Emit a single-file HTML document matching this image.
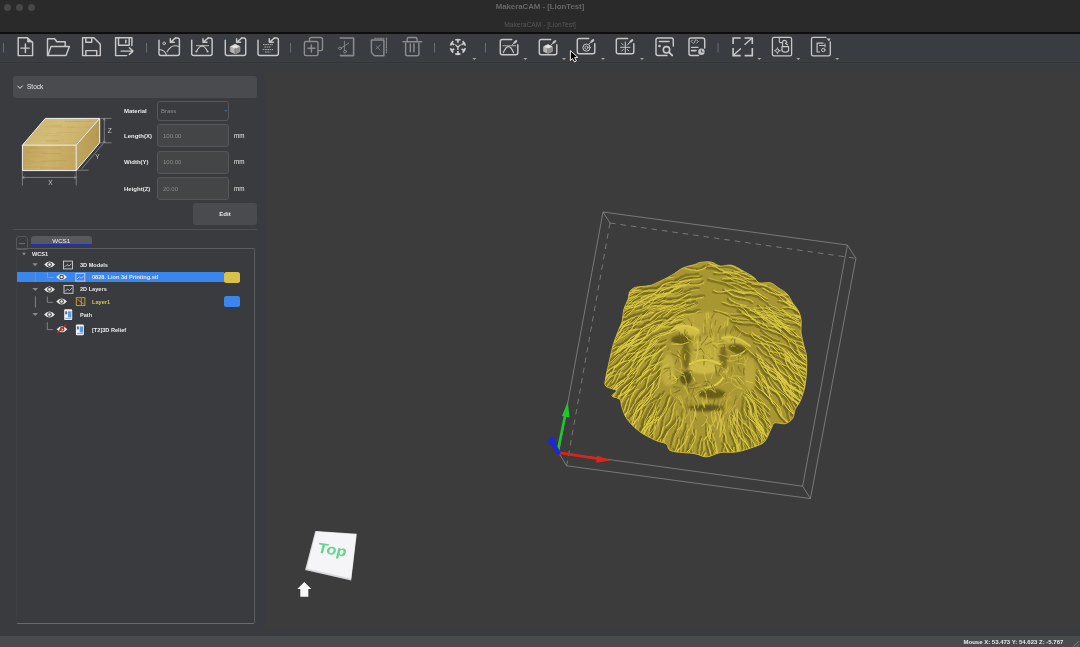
<!DOCTYPE html>
<html><head><meta charset="utf-8">
<style>
*{margin:0;padding:0;box-sizing:border-box}
html,body{width:1080px;height:647px;overflow:hidden;background:#3c3c3c;font-family:"Liberation Sans",sans-serif;-webkit-font-smoothing:antialiased}
.lbl,.val,.tt,.t1,.t2{will-change:transform}
.abs{position:absolute}
#title{left:0;top:0;width:1080px;height:32px;background:#2a2a2a}
#blk{left:0;top:32px;width:1080px;height:2px;background:#0e0e0e}
#tb{left:0;top:34px;width:1080px;height:27px;background:#393c40}
#tbl{left:0;top:61px;width:1080px;height:3px;background:linear-gradient(#3e3f42 0,#3e3f42 1px,#333436 1px,#333436 2px,#3d3e40 2px)}
#left{left:0;top:64px;width:1080px;height:572px;background:#3a3b3e}
#vp{left:265px;top:73px;width:815px;height:555px;background:#3c3c3c}
#status{left:0;top:636px;width:1080px;height:11px;background:#4a4b4f}
.dot{width:7px;height:7px;border-radius:50%;background:#474747;top:4px}
.t1{top:1.5px;left:0;width:1080px;text-align:center;font-size:7.8px;font-weight:bold;color:#676767;line-height:10px}
.t2{top:20.5px;left:0;width:1080px;text-align:center;font-size:6.7px;color:#575757;line-height:8px}
.lbl{font-size:6px;font-weight:bold;color:#e8e8e8;white-space:nowrap;line-height:8px}
.inp{border:1px solid #56575b;border-radius:3px;background:#444547}
.val{font-size:6px;color:#8c8c8c;white-space:nowrap;line-height:8px}
.tt{font-size:5.6px;font-weight:bold;color:#e8e8e8;white-space:nowrap;line-height:8px}
</style></head><body>
<div id="title" class="abs">
  <div class="abs dot" style="left:4px"></div>
  <div class="abs dot" style="left:16px"></div>
  <div class="abs dot" style="left:28px"></div>
  <div class="abs t1">MakeraCAM - [LionTest]</div>
  <div class="abs t2">MakeraCAM - [LionTest]</div>
</div>
<div id="blk" class="abs"></div>
<div id="tb" class="abs"></div>
<div id="tbl" class="abs"></div>
<svg class="abs" style="left:0;top:0" width="1080" height="64" viewBox="0 0 1080 64" fill="none" stroke="#c8c8c8" stroke-width="1.45" stroke-linejoin="round" stroke-linecap="round">
<!-- separators -->
<g stroke="#6a6c70" stroke-width="1">
<line x1="3.5" y1="43.5" x2="3.5" y2="52"/>
<line x1="146.5" y1="43.5" x2="146.5" y2="52"/>
<line x1="290.5" y1="43.5" x2="290.5" y2="52"/>
<line x1="434.5" y1="43.5" x2="434.5" y2="52"/>
<line x1="485.5" y1="43.5" x2="485.5" y2="52"/>
<line x1="718" y1="43.5" x2="718" y2="52"/>
</g>
<!-- new -->
<path d="M18.2,37.8 H27.5 L32.6,42.5 V55.6 H18.2 Z"/>
<path d="M27.5,37.8 V42 H32.6" fill="#c4c4c4" stroke-width="0.8"/>
<path d="M20.9,48.1 H29.3 M25.4,43.9 V52.5"/>
<!-- open -->
<path d="M47.5,55.4 V38.7 H54.6 L56.8,41.7 H65.2 V46"/>
<path d="M47.8,55.4 L51,46.4 H69.4 L66,55.4 Z"/>
<!-- save -->
<path d="M82.6,37.8 H93.9 L100.3,44.2 V55.6 H82.6 Z"/>
<path d="M85.8,37.8 V42.2 H91.7 V37.8"/>
<path d="M85.8,55.6 V50.6 H96.7 V55.6"/>
<!-- save as -->
<path d="M126.7,55.6 H115.6 V37.8 H131.9 V45.6"/>
<path d="M118.5,37.8 V45.3 H129.2 V37.8"/>
<path d="M125.8,40.3 V42.8" stroke-width="1.5"/>
<path d="M121.1,51.1 H133 M129.4,47.8 L133,51.1 L129.4,54.4"/>
<!-- import frames -->
<g id="impf">
<path d="M159,40.2 V53.4 Q159,55.4 161,55.4 H177.4 Q179.4,55.4 179.4,53.4 V40 Q179.4,37.9 177.4,37.9 H175.6"/>
<path d="M175.6,37.9 L170.5,42.2 M170.3,38.7 V42.3 H174.3"/>
</g>
<use href="#impf" x="32.7"/>
<use href="#impf" x="66.3"/>
<use href="#impf" x="99"/>
<!-- image content -->
<circle cx="164.2" cy="43.4" r="1.3" stroke-width="1"/>
<path d="M159.2,49.5 Q165,50 166.5,55.3" stroke-width="1.1"/>
<path d="M167,51.8 Q171,45.5 175,45.8 Q177.5,46 179.3,46.5" stroke-width="1.1"/>
<!-- curve content -->
<path d="M196.4,51.5 Q202,40.5 207.6,51.5" stroke-width="1.1"/>
<path d="M196.4,45.7 H208.6" stroke-width="0.9"/>
<circle cx="196.4" cy="51.5" r="1.1" fill="#c4c4c4" stroke="none"/>
<circle cx="207.6" cy="51.5" r="1.1" fill="#c4c4c4" stroke="none"/>
<circle cx="202.4" cy="45.7" r="0.9" fill="#c4c4c4" stroke="none"/>
<!-- 3d box content -->
<path d="M230.6,46.5 L235.2,44.3 L239.8,46.5 V51.6 L235.2,53.8 L230.6,51.6 Z" fill="#b4b4b4" stroke="#c8c8c8" stroke-width="0.7"/>
<path d="M230.6,46.5 L235.2,44.3 L239.8,46.5 L235.2,48.7 Z" fill="#e2e2e2" stroke="none"/>
<path d="M235.2,48.7 V53.8" stroke="#505154" stroke-width="0.8"/>
<path d="M235.6,48.9 L239.8,46.8 V51.6 L235.6,53.6 Z" fill="#8e8e90" stroke="none"/>
<!-- hatch content -->
<g stroke-width="0.8" stroke-dasharray="1.6 0.7" stroke-linecap="butt" stroke="#d0d0d0">
<path d="M263,44.6 H273 M264.5,47 H270.5 M262.8,49.6 H273 M265,52 H270.5"/>
</g>
<!-- disabled group -->
<g stroke="#8a8b8d">
<path d="M309.5,41.3 V39.3 Q309.5,37.5 311.3,37.5 H320.7 Q322.5,37.5 322.5,39.3 V48.8 Q322.5,50.6 320.7,50.6 H318"/>
<rect x="304.4" y="41.4" width="13.6" height="14.2" rx="1.5"/>
<path d="M308,48.3 H315 M311.4,45 V52"/>
<path d="M340.3,38 H353.6 V55.6 H340.3" stroke-width="1.6"/>
<path d="M344.4,41.2 V50 M341.5,47.8 L348.9,43" stroke-width="0.9"/>
<circle cx="345" cy="51.6" r="1.4" stroke-width="0.9"/>
<ellipse cx="340" cy="48.3" rx="1.6" ry="1.1" stroke-width="0.9"/>
<path d="M371.4,40 H383.9 V55.8 H374.5 L371.4,52.6 Z"/>
<path d="M374.7,38.2 H384 M386.4,38 V52.8" stroke-dasharray="1.6 1.2" stroke-width="1.1"/>
<path d="M376,49 L380.5,45 M376.5,46 L380,50" stroke-width="0.8"/>
<path d="M403,41.7 H421.7"/>
<path d="M407.2,41.7 V39 Q407.2,37.5 408.7,37.5 H415.5 Q417,37.5 417,39 V41.7"/>
<path d="M405.6,43.3 V54 Q405.6,55.8 407.4,55.8 H417.1 Q418.9,55.8 418.9,54 V43.3"/>
<path d="M410.3,44 V51.7 M413.9,44 V51.7"/>
</g>
<!-- transform -->
<g stroke="#cdcdcd" stroke-width="1.7" stroke-linecap="butt">
<path d="M455.25,39.99 A7.4,7.4 0 0 1 460.55,39.99 M457.90,39.50 L457.90,42.70 M462.56,41.15 A7.4,7.4 0 0 1 465.21,45.74 M464.31,43.20 L461.54,44.80 M465.21,48.06 A7.4,7.4 0 0 1 462.56,52.65 M464.31,50.60 L461.54,49.00 M460.55,53.81 A7.4,7.4 0 0 1 455.25,53.81 M457.90,54.30 L457.90,51.10 M453.24,52.65 A7.4,7.4 0 0 1 450.59,48.06 M451.49,50.60 L454.26,49.00 M450.59,45.74 A7.4,7.4 0 0 1 453.24,41.15 M451.49,43.20 L454.26,44.80"/>
<path d="M455.3,44.6 L457.9,47.3 L460.5,44.6 M457.9,47.3 V50" stroke-width="1.3"/>
</g>
<!-- dropdown triangles -->
<g fill="#a8a8a8" stroke="none" transform="translate(0,0)">
<path d="M472.4,57.9 H476.4 L474.4,59.9 Z"/>
<path d="M523.3,57.9 H527.3 L525.3,59.9 Z"/>
<path d="M562.0,57.9 H566.0 L564.0,59.9 Z"/>
<path d="M601.0,57.9 H605.0 L603.0,59.9 Z"/>
<path d="M640.0,57.9 H644.0 L642.0,59.9 Z"/>
<path d="M757.4,57.9 H761.4 L759.4,59.9 Z"/>
<path d="M796.3,57.9 H800.3 L798.3,59.9 Z"/>
<path d="M835.2,57.9 H839.2 L837.2,59.9 Z"/>
</g>
<!-- 2D toolpath -->
<g id="tpf">
<path d="M511.7,39.4 H502.3 Q500.3,39.4 500.3,41.4 V52.7 Q500.3,54.7 502.3,54.7 H515.8 Q517.8,54.7 517.8,52.7 V44.7"/>
<ellipse cx="515.4" cy="41.9" rx="2.3" ry="1.2" transform="rotate(-40 515.4 41.9)" fill="#c4c4c4" stroke="none"/><path d="M512.3,44.8 L513.8,43.4" stroke-width="1"/>
</g>
<path d="M503.3,52.7 Q508.5,40.5 513.6,52.7" stroke-width="1.1"/>
<path d="M503,45.8 H515.8" stroke-width="0.9" stroke-dasharray="1.2 0.8"/>
<use href="#tpf" x="39"/>
<path d="M543.8,46.6 L548,44.6 L552.2,46.6 V51.4 L548,53.4 L543.8,51.4 Z" fill="#b4b4b4" stroke="#c8c8c8" stroke-width="0.7"/>
<path d="M543.8,46.6 L548,44.6 L552.2,46.6 L548,48.6 Z" fill="#e2e2e2" stroke="none"/>
<path d="M548,48.6 V53.4" stroke="#505154" stroke-width="0.8"/>
<path d="M548.4,48.8 L552.2,46.9 V51.4 L548.4,53.2 Z" fill="#8e8e90" stroke="none"/>
<use href="#tpf" x="77" y="-1"/>
<circle cx="586.5" cy="47.6" r="3.6" stroke-width="1"/>
<circle cx="586.5" cy="47.6" r="1.6" stroke-width="0.9"/>
<use href="#tpf" x="116" y="-1"/>
<path d="M625.3,42 V52.5 M620.5,47.3 H630 M621.8,43.5 L623.2,45 M628.8,43.5 L627.4,45 M621.8,51 L623.2,49.5 M628.8,51 L627.4,49.5" stroke-width="1"/>
<!-- simulate -->
<path d="M667,55.4 H658 Q656,55.4 656,53.4 V40 Q656,38 658,38 H671.3 Q673.3,38 673.3,40 V46"/>
<path d="M659.5,41.5 H669" stroke-width="1.6"/>
<circle cx="659.5" cy="46" r="0.6" fill="#c4c4c4"/>
<circle cx="666.5" cy="49.8" r="3.2" stroke-width="1.6"/>
<path d="M668.8,52.2 L672.3,55.5" stroke-width="1.8"/>
<!-- post -->
<path d="M698.5,55.5 H691 Q689,55.5 689,53.5 V40 Q689,38 691,38 H702.7 Q704.7,38 704.7,40 V48"/>
<path d="M692.5,43 L691.2,41.5 L692.5,40 M696.8,43 L698.1,41.5 L696.8,40 M695.5,39.8 L694,43.2" stroke-width="0.9"/>
<path d="M691.5,47.3 H698" stroke-width="1.2"/>
<path d="M691.5,50.6 H696" stroke-width="1.6"/>
<circle cx="701.4" cy="51.8" r="3.2" fill="#c4c4c4" stroke="none"/>
<path d="M701.4,50 V52 H703" stroke="#393b3f" stroke-width="0.8"/>
<!-- fullscreen -->
<path d="M733.1,43.9 V38 H740.7 M744.6,38 H752.3 V43.9 M752.3,48.1 V55.6 H744.6 M740.7,55.6 H733.1 V48.1" stroke-width="1.6" stroke-linecap="butt" stroke-linejoin="miter"/>
<path d="M744.9,44.4 L751.6,38.6 M740.5,48.8 L733.7,54.9" stroke-width="1.3"/>
<!-- machine -->
<path d="M774,37.3 H790 Q791.6,37.3 791.6,38.9 V54.2 Q791.6,55.8 790,55.8 H774 Q772.4,55.8 772.4,54.2 V38.9 Q772.4,37.3 774,37.3 Z" stroke-width="1.3"/>
<path d="M779.3,37.3 V41.2 Q779.3,42.6 780.7,42.6 H782" stroke-width="1.1"/>
<path d="M782,46.6 V50 Q782,52.2 785.2,52.2 Q788.6,52.2 788.6,50 V46.6 Z" stroke-width="1.2"/>
<path d="M782.6,45.5 V42.2 Q782.6,40.4 784.6,40.4 Q786.4,40.4 786.8,42.6 M785.5,43.2 L787.6,44.8" stroke-width="1.1"/>
<circle cx="777.4" cy="50.7" r="1.7" stroke-width="1"/>
<path d="M777.4,47.8 V48.6 M777.4,52.8 V53.6 M774.5,50.7 H775.3 M779.5,50.7 H780.3" stroke-width="0.9"/>
<!-- last -->
<path d="M826,37.3 H813.1 Q811.5,37.3 811.5,38.9 V54.2 Q811.5,55.8 813.1,55.8 H828.7 Q830.3,55.8 830.3,54.2 V42" stroke-width="1.3"/>
<path d="M826.5,38.6 H830.6 L829,41.4 Z" fill="#b8c0d0" stroke="none"/>
<path d="M823,43.2 H817.1 V52 H819.5" stroke-width="1.2"/>
<path d="M819.5,45.5 H824.5" stroke-width="1"/>
<path d="M825,47 V44" stroke-width="1"/>
<circle cx="823.3" cy="50" r="1.7" stroke-width="1"/>
<!-- cursor -->
<path d="M570.4,51 V60.5 L572.6,58.6 L574.5,62 L576.4,61 L574.6,57.6 L577.4,57.4 Z" fill="#000" stroke="#fff" stroke-width="0.9"/>
</svg>
<div id="left" class="abs"></div>
<div id="vp" class="abs"></div>
<div class="abs" style="left:256px;top:72px;width:9px;height:556px;background:#393b40"></div>
<div class="abs" style="left:13px;top:76px;width:244px;height:22px;background:#4a4b4f;border-radius:3px"></div>
<svg class="abs" style="left:0;top:0" width="263" height="640" fill="none">
<path d="M17.5,85.8 L20,88.4 L22.6,85.6" stroke="#e0e0e0" stroke-width="1"/>
</svg>
<div class="abs lbl" style="left:27px;top:83px;font-weight:normal;font-size:6.5px">Stock</div>
<div class="abs lbl" style="left:123.5px;top:107px">Material</div>
<div class="abs lbl" style="left:123.5px;top:131.5px">Length(X)</div>
<div class="abs lbl" style="left:123.5px;top:158px">Width(Y)</div>
<div class="abs lbl" style="left:123.5px;top:184.5px">Height(Z)</div>
<div class="abs inp" style="left:157px;top:101px;width:72px;height:20px;background:#3a3b3e"></div>
<div class="abs val" style="left:160.5px;top:107px">Brass</div>
<div class="abs inp" style="left:157px;top:124px;width:72px;height:23px"></div>
<div class="abs val" style="left:162.5px;top:131.5px">100.00</div>
<div class="abs inp" style="left:157px;top:150.5px;width:72px;height:23px"></div>
<div class="abs val" style="left:162.5px;top:158px">100.00</div>
<div class="abs inp" style="left:157px;top:176.5px;width:72px;height:23.5px"></div>
<div class="abs val" style="left:162.5px;top:184.5px">20.00</div>
<div class="abs lbl" style="left:234px;top:131.5px;font-weight:normal;font-size:6.3px">mm</div>
<div class="abs lbl" style="left:234px;top:158px;font-weight:normal;font-size:6.3px">mm</div>
<div class="abs lbl" style="left:234px;top:184.5px;font-weight:normal;font-size:6.3px">mm</div>
<div class="abs" style="left:193px;top:203px;width:64px;height:22px;background:#4a4b4f;border-radius:3px"></div>
<div class="abs lbl" style="left:193px;top:210px;width:64px;text-align:center">Edit</div>
<div class="abs" style="left:13px;top:229px;width:244px;height:1px;background:#4e4f53"></div>
<svg class="abs" style="left:0;top:0" width="263" height="640">
<defs>
<linearGradient id="gTop" x1="0" y1="0" x2="1" y2="0.3">
<stop offset="0" stop-color="#c9b06a"/><stop offset="0.5" stop-color="#d4bd78"/><stop offset="1" stop-color="#c8ae68"/>
</linearGradient>
<linearGradient id="gFront" x1="0" y1="0" x2="1" y2="0">
<stop offset="0" stop-color="#bfa35a"/><stop offset="0.5" stop-color="#cbb06a"/><stop offset="1" stop-color="#c2a65e"/>
</linearGradient>
<linearGradient id="gRight" x1="0" y1="0" x2="1" y2="0">
<stop offset="0" stop-color="#c0a55d"/><stop offset="1" stop-color="#b49a52"/>
</linearGradient>
<clipPath id="boxclip"><path d="M22.4,145.2 L45.3,118.4 H99.7 V142.8 L76.2,170.6 H22.4 Z"/></clipPath>
</defs>
<path d="M22.4,145.2 L45.3,118.4 H99.7 L76.2,145.2 Z" fill="url(#gTop)"/>
<path d="M22.4,145.2 H76.2 V170.6 H22.4 Z" fill="url(#gFront)"/>
<path d="M76.2,145.2 L99.7,118.4 V142.8 L76.2,170.6 Z" fill="url(#gRight)"/>
<g clip-path="url(#boxclip)"><path d="M25.3,152.0 H47.2" stroke="#ad9350" stroke-width="0.4" opacity="0.6"/><path d="M37.6,147.0 H56.3" stroke="#d9c27c" stroke-width="0.5" opacity="0.6"/><path d="M30.1,159.1 H45.3" stroke="#d9c27c" stroke-width="0.5" opacity="0.6"/><path d="M23.2,168.7 H52.4" stroke="#d4bc76" stroke-width="0.8" opacity="0.6"/><path d="M31.0,151.0 H59.8" stroke="#d4bc76" stroke-width="0.4" opacity="0.6"/><path d="M41.0,160.7 H66.2" stroke="#ad9350" stroke-width="0.5" opacity="0.6"/><path d="M48.5,153.1 H76.0" stroke="#d4bc76" stroke-width="0.4" opacity="0.6"/><path d="M41.9,153.4 H61.2" stroke="#ad9350" stroke-width="0.6" opacity="0.6"/><path d="M34.4,160.6 H49.2" stroke="#d4bc76" stroke-width="0.5" opacity="0.6"/><path d="M24.7,165.2 H48.6" stroke="#d4bc76" stroke-width="0.7" opacity="0.6"/><path d="M41.8,161.7 H56.1" stroke="#ad9350" stroke-width="0.4" opacity="0.6"/><path d="M40.0,168.0 H63.2" stroke="#ad9350" stroke-width="0.6" opacity="0.6"/><path d="M31.3,164.1 H58.1" stroke="#d4bc76" stroke-width="0.5" opacity="0.6"/><path d="M28.8,147.9 H61.7" stroke="#ad9350" stroke-width="0.5" opacity="0.6"/><path d="M33.5,142.4 H44.3" stroke="#dcc47e" stroke-width="0.7" opacity="0.55"/><path d="M54.2,141.5 H79.4" stroke="#dcc47e" stroke-width="0.4" opacity="0.55"/><path d="M67.0,126.9 H92.2" stroke="#bba25c" stroke-width="0.8" opacity="0.55"/><path d="M46.5,140.9 H58.8" stroke="#b59c58" stroke-width="0.8" opacity="0.55"/><path d="M45.4,127.0 H73.4" stroke="#b59c58" stroke-width="0.6" opacity="0.55"/><path d="M45.1,120.2 H60.2" stroke="#dcc47e" stroke-width="0.9" opacity="0.55"/><path d="M45.4,133.7 H61.6" stroke="#b59c58" stroke-width="0.5" opacity="0.55"/><path d="M64.8,121.5 H92.6" stroke="#b59c58" stroke-width="0.7" opacity="0.55"/><path d="M50.2,133.1 H69.9" stroke="#e0ca86" stroke-width="0.5" opacity="0.55"/><path d="M56.3,132.7 H78.6" stroke="#b59c58" stroke-width="0.6" opacity="0.55"/><path d="M51.3,125.8 H62.4" stroke="#bba25c" stroke-width="0.6" opacity="0.55"/><path d="M43.5,135.5 H60.0" stroke="#b59c58" stroke-width="0.4" opacity="0.55"/><path d="M46.0,126.1 H62.2" stroke="#b59c58" stroke-width="0.6" opacity="0.55"/><path d="M48.3,126.3 H85.0" stroke="#dcc47e" stroke-width="0.7" opacity="0.55"/><path d="M86.1,164.6 l7.5,-6.3" stroke="#a88f4c" stroke-width="0.5" opacity="0.5"/><path d="M92.9,156.6 l5.5,-3.5" stroke="#a88f4c" stroke-width="0.5" opacity="0.5"/><path d="M95.5,133.4 l7.5,-7.6" stroke="#a88f4c" stroke-width="0.5" opacity="0.5"/><path d="M91.1,138.5 l7.0,-6.2" stroke="#a88f4c" stroke-width="0.5" opacity="0.5"/><path d="M88.6,157.6 l6.3,-6.4" stroke="#a88f4c" stroke-width="0.5" opacity="0.5"/><path d="M96.5,135.7 l7.8,-3.4" stroke="#a88f4c" stroke-width="0.5" opacity="0.5"/><path d="M97.2,163.8 l6.3,-3.2" stroke="#a88f4c" stroke-width="0.5" opacity="0.5"/><path d="M80.6,161.0 l7.8,-6.3" stroke="#a88f4c" stroke-width="0.5" opacity="0.5"/></g>
<g stroke="#f4f4f4" stroke-width="1" fill="none" stroke-linejoin="round">
<path d="M22.4,170.6 V145.2 L45.3,118.4 H99.7 V142.8 L76.2,170.6 H22.4"/>
<path d="M22.4,145.2 H76.2 L99.7,118.4 M76.2,145.2 V170.6"/>
</g>
<g stroke="#9c9c9c" stroke-width="0.7" fill="none">
<path d="M22.4,171 V185.4 M76.2,171 V185.4 M22.4,177.4 H76.2 M24.4,176 L22.4,177.4 L24.4,178.8 M74.2,176 L76.2,177.4 L74.2,178.8"/>
<path d="M100.5,118.4 H111.5 M100.5,142.8 H111.5 M104.3,118.4 V142.8 M103,120.4 L104.3,118.4 L105.6,120.4 M103,140.8 L104.3,142.8 L105.6,140.8"/>
<path d="M77,170.2 H88.6 M81.8,168.7 L103.4,143.4"/>
</g>
<g fill="#c8c8c8" font-family="Liberation Sans, sans-serif" font-size="6.5">
<text x="48.3" y="184.5">X</text>
<text x="107.8" y="132.8">Z</text>
<text x="95.3" y="159.3">Y</text>
</g>
<path d="M224.3,110.3 H227.3 L225.8,111.8 Z" fill="#4a78b8"/>
</svg>
<div class="abs" style="left:16px;top:248px;width:239px;height:376px;border:1px solid #5b5c5f;border-left-color:#3e3f42;border-bottom-color:#6a6b6e;border-radius:2px"></div>
<div class="abs" style="left:16px;top:236px;width:12px;height:14px;border:1px solid #56575a;border-radius:3px;background:#3a3b3e"></div>
<div class="abs" style="left:16px;top:247.5px;width:12px;height:2.5px;background:#5a5b5e;border-radius:0 0 3px 3px"></div>
<div class="abs" style="left:19px;top:242.5px;width:6px;height:1px;background:#6a6b6e"></div>
<div class="abs" style="left:31px;top:236px;width:60.5px;height:10px;background:#58595c;border-radius:3px 3px 0 0"></div>
<div class="abs" style="left:31px;top:243.5px;width:60.5px;height:2px;background:#1e2ec0"></div>
<div class="abs tt" style="left:31px;top:237px;width:60.5px;text-align:center;font-size:6.2px;font-weight:normal;line-height:7px;color:#f0f0f0">WCS1</div>
<div class="abs" style="left:17px;top:272px;width:207px;height:10.3px;background:#3a86ec"></div>
<div class="abs" style="left:224px;top:271.7px;width:16px;height:11.2px;background:#d9c24a;border-radius:2.5px"></div>
<div class="abs" style="left:224px;top:295.8px;width:16px;height:11.2px;background:#3a86ec;border-radius:2.5px"></div>
<div class="abs tt" style="left:31.8px;top:249.8px">WCS1</div>
<div class="abs tt" style="left:80px;top:260.8px">3D Models</div>
<div class="abs tt" style="left:92px;top:273px">0828. Lion 3d Printing.stl</div>
<div class="abs tt" style="left:80px;top:285.4px">2D Layers</div>
<div class="abs tt" style="left:92px;top:297.6px;color:#dcc25a">Layer1</div>
<div class="abs tt" style="left:80px;top:310.8px">Path</div>
<div class="abs tt" style="left:92px;top:325.5px">[T2]3D Relief</div>
<svg class="abs" style="left:0;top:0" width="263" height="640" fill="none">
<defs>
<g id="eye">
<path d="M-5.4,0 Q0,-6 5.4,0 Q0,6 -5.4,0 Z" fill="#e8e8e8"/>
<circle cx="0" cy="0" r="2.3" fill="#3a3b3e"/>
<circle cx="0" cy="0" r="1.3" fill="#e8e8e8"/>
</g>
<g id="modelic">
<rect x="0.5" y="0.5" width="9" height="7.8" stroke="#d0d0d0" stroke-width="0.9" fill="none"/>
<path d="M1.5,6.5 L4,4 L6,5.5 L8.5,3" stroke="#d0d0d0" stroke-width="0.8" fill="none"/>
</g>
<g id="pathic">
<rect x="0" y="0" width="8" height="10.8" rx="1.2" fill="#f2f2f4"/>
<rect x="3.8" y="2" width="3.4" height="6" fill="#5a9be8"/>
<rect x="1" y="2" width="2" height="3" fill="#5a6b8a"/>
<rect x="1" y="8.5" width="6.2" height="1.2" fill="#8ab4e8"/>
</g>
</defs>
<g fill="#8a8b8e">
<path d="M22,252.7 H26 L24,255.5 Z"/>
<path d="M32.3,263.2 H37.8 L35,266.2 Z"/>
<path d="M32.3,288 H38 L35.2,291.1 Z"/>
<path d="M32.3,313 H38 L35.2,316.1 Z"/>
</g>
<g stroke="#8a8b8e" stroke-width="0.9">
<path d="M35.3,272.3 V282"/>
<path d="M35.4,296.3 V307.5"/>
<path d="M47.4,272.7 V277.6 H53.6" stroke="#9a9ca4"/>
<path d="M47.3,296.7 V302.3 H52.9"/>
<path d="M47.3,322.3 V329.6 H52.9"/>
</g>
<use href="#eye" x="49.6" y="264.6"/>
<use href="#eye" x="61.6" y="277"/>
<use href="#eye" x="49.5" y="289.4"/>
<use href="#eye" x="61.6" y="301.5"/>
<use href="#eye" x="49.5" y="314.5"/>
<use href="#eye" x="62" y="329.2"/>
<path d="M57,333 L66.5,324.5" stroke="#e02020" stroke-width="1.3"/>
<use href="#modelic" x="63" y="260.6"/>
<use href="#modelic" x="75.3" y="272.8"/>
<use href="#modelic" x="63.5" y="285"/>
<g transform="translate(75.8,297.2)">
<rect x="0.5" y="0.5" width="8.6" height="7.8" stroke="#c8a838" stroke-width="0.9" fill="none"/>
<path d="M1.5,2 L8,7 M5.5,1 V8" stroke="#c8a838" stroke-width="0.8" fill="none"/>
</g>
<use href="#pathic" x="64.2" y="309.3"/>
<use href="#pathic" x="75.9" y="324.4"/>
</svg>
<svg class="abs" style="left:0;top:0" width="1080" height="647" fill="none">
<g stroke="#8c8c8c" stroke-width="0.75">
<path d="M603,212 L847.4,245 L802.6,486.2 L558.6,452.6 Z"/>
<path d="M603,212 L610,223 M847.4,245 L855.9,258.3 M802.6,486.2 L810.4,498.6 M558.6,452.6 L566.6,465.8"/>
<path d="M855.9,258.3 L810.4,498.6 L566.6,465.8"/>
<path d="M610,223 L855.9,258.3 M610,223 L566.6,465.8" stroke-dasharray="5.5 5"/>
</g>
<!-- axes -->
<path d="M558.6,452.6 L600,459" stroke="#dd2418" stroke-width="2.6"/>
<path d="M597,455.6 L610.5,460.5 L596,462.8 Z" fill="#dd2418"/>
<path d="M557.5,452.5 L565.5,414" stroke="#1fc82c" stroke-width="2.6"/>
<path d="M562,416 L567.8,401.6 L569.6,417.5 Z" fill="#1fc82c"/>
<path d="M558.6,452.6 L552,442" stroke="#1a28d8" stroke-width="4" stroke-linecap="round"/>
<ellipse cx="551.8" cy="441" rx="3.6" ry="4" fill="#1a28d8"/>
<!-- view cube -->
<path d="M315.3,530.9 L356.8,533.8 L351.2,580.6 L305.1,570.1 Z" fill="#d8d8da"/>
<path d="M316.2,531.5 L356.2,534.4 L351,578.6 L306.8,568.4 Z" fill="#f5f5f8"/>
<text x="0" y="0" transform="translate(316.8,552.6) rotate(8) skewX(-6)" font-family="Liberation Sans, sans-serif" font-weight="bold" font-size="14.5" fill="#66d48c" textLength="29" lengthAdjust="spacingAndGlyphs">Top</text>
<path d="M304.3,582 L311.3,589 H308.3 V596.7 H300.3 V589 H297.3 Z" fill="#f8f8fb"/>
</svg>
<svg class="abs" style="left:0;top:0" width="1080" height="647">
<defs><clipPath id="lc"><path d="M700,262.4C702.6,262 707.7,261.4 711.1,262C714.5,262.6 717,265.6 720.4,266.1C723.8,266.6 727.5,264.3 731.5,265.2C735.5,266.1 740.8,269.7 744.5,271.7C748.2,273.7 751.3,275.4 753.8,277.3C756.3,279.2 756.6,281.9 759.4,282.8C762.2,283.7 767.4,282 770.5,282.8C773.6,283.6 775.1,285.6 777.9,287.5C780.7,289.4 784.7,291.4 787.2,294C789.7,296.6 790.9,300.4 792.8,303.2C794.6,306 796.9,307.9 798.3,310.7C799.7,313.5 800.6,316.2 801.1,319.9C801.6,323.6 800.6,328.6 801.1,332.9C801.6,337.2 803,341.6 803.9,345.9C804.8,350.2 806.5,352.6 806.7,358.9C807,365.2 806.5,376.8 805.4,383.8C804.3,390.8 802,396.6 800.3,400.8C798.6,405.1 796.5,406.3 795.2,409.3C793.9,412.3 794.3,416.2 792.6,418.6C790.9,421 788,423 785,423.7C782,424.4 777.1,422.2 774.8,422.9C772.5,423.6 773.1,424.9 771.4,428C769.7,431.1 767.4,438.5 764.6,441.6C761.8,444.7 758.9,445 754.4,446.7C749.9,448.4 743.1,450.8 737.4,451.8C731.7,452.8 725.5,451.8 720.4,452.6C715.3,453.5 711.1,456.7 706.8,456.9C702.5,457.1 700.5,454.7 694.6,453.7C688.7,452.7 676.1,452.6 671.4,451C666.6,449.4 668.8,445.7 666.1,443.9C663.4,442.1 659.9,442.4 655.4,440.3C650.9,438.2 644.1,434.9 639.4,431.4C634.7,427.8 630,423.1 627,419C624,414.9 622.9,409.9 621.7,406.6C620.5,403.3 621.5,401.2 619.9,399.4C618.3,397.6 612.5,397.4 611.9,395.9C611.3,394.4 617.3,392.2 616.3,390.6C615.3,389 607.5,388.2 605.7,386.1C603.9,384 605.3,381.5 605.7,378.1C606.1,374.7 607.5,369.2 608.3,365.7C609,362.2 609.3,360.7 610.2,357C611.1,353.3 612.2,347.9 613.6,343.4C615,338.9 617.3,333.5 618.7,329.8C620.1,326.1 621.2,324.7 622.1,321.3C623,317.9 622.8,313.1 623.8,309.4C624.8,305.7 627.1,302.2 628.1,299.2C629.1,296.2 628.5,293.6 629.8,291.6C631.1,289.6 632.5,288.3 635.7,287.3C639,286.3 645.6,286.5 649.3,285.6C653,284.8 654.1,283.9 657.8,282.2C661.5,280.5 667.1,277.8 671.4,275.4C675.6,273 679.3,269.6 683.3,267.8C687.3,266 692.4,265.3 695.2,264.4C698,263.5 697.4,262.8 700,262.4Z"/></clipPath></defs>
<path d="M700,262.4C702.6,262 707.7,261.4 711.1,262C714.5,262.6 717,265.6 720.4,266.1C723.8,266.6 727.5,264.3 731.5,265.2C735.5,266.1 740.8,269.7 744.5,271.7C748.2,273.7 751.3,275.4 753.8,277.3C756.3,279.2 756.6,281.9 759.4,282.8C762.2,283.7 767.4,282 770.5,282.8C773.6,283.6 775.1,285.6 777.9,287.5C780.7,289.4 784.7,291.4 787.2,294C789.7,296.6 790.9,300.4 792.8,303.2C794.6,306 796.9,307.9 798.3,310.7C799.7,313.5 800.6,316.2 801.1,319.9C801.6,323.6 800.6,328.6 801.1,332.9C801.6,337.2 803,341.6 803.9,345.9C804.8,350.2 806.5,352.6 806.7,358.9C807,365.2 806.5,376.8 805.4,383.8C804.3,390.8 802,396.6 800.3,400.8C798.6,405.1 796.5,406.3 795.2,409.3C793.9,412.3 794.3,416.2 792.6,418.6C790.9,421 788,423 785,423.7C782,424.4 777.1,422.2 774.8,422.9C772.5,423.6 773.1,424.9 771.4,428C769.7,431.1 767.4,438.5 764.6,441.6C761.8,444.7 758.9,445 754.4,446.7C749.9,448.4 743.1,450.8 737.4,451.8C731.7,452.8 725.5,451.8 720.4,452.6C715.3,453.5 711.1,456.7 706.8,456.9C702.5,457.1 700.5,454.7 694.6,453.7C688.7,452.7 676.1,452.6 671.4,451C666.6,449.4 668.8,445.7 666.1,443.9C663.4,442.1 659.9,442.4 655.4,440.3C650.9,438.2 644.1,434.9 639.4,431.4C634.7,427.8 630,423.1 627,419C624,414.9 622.9,409.9 621.7,406.6C620.5,403.3 621.5,401.2 619.9,399.4C618.3,397.6 612.5,397.4 611.9,395.9C611.3,394.4 617.3,392.2 616.3,390.6C615.3,389 607.5,388.2 605.7,386.1C603.9,384 605.3,381.5 605.7,378.1C606.1,374.7 607.5,369.2 608.3,365.7C609,362.2 609.3,360.7 610.2,357C611.1,353.3 612.2,347.9 613.6,343.4C615,338.9 617.3,333.5 618.7,329.8C620.1,326.1 621.2,324.7 622.1,321.3C623,317.9 622.8,313.1 623.8,309.4C624.8,305.7 627.1,302.2 628.1,299.2C629.1,296.2 628.5,293.6 629.8,291.6C631.1,289.6 632.5,288.3 635.7,287.3C639,286.3 645.6,286.5 649.3,285.6C653,284.8 654.1,283.9 657.8,282.2C661.5,280.5 667.1,277.8 671.4,275.4C675.6,273 679.3,269.6 683.3,267.8C687.3,266 692.4,265.3 695.2,264.4C698,263.5 697.4,262.8 700,262.4Z" fill="#a89633"/>
<g clip-path="url(#lc)" fill="none" stroke-linecap="round" stroke-linejoin="round">
<g stroke="#75681c" stroke-opacity="0.7"><path d="M731,409C731,410 731,411 732,413C732,414 732,415 732,416C732,418 732,419 732,420C731,421 731,423 731,424C731,425 731,427 731,428C731,430 731,431 731,433C732,434 732,435 733,437C733,438 734,439 735,440C735,441 736,443 736,444C737,445 737,446 737,447C737,448 737,450 737,451" stroke-width="1.5"/><path d="M799,390C799,391 800,392 801,393C802,395 802,396 803,397C804,398 805,399 805,400C806,401 807,403 808,404C809,404 810,405 811,406C812,407 814,408 815,408C816,409 817,410 818,410C819,411 820,412 821,413C822,413 823,414 824,415C825,416 825,417 826,418C827,420 827,421 828,422C829,423 830,425 830,425" stroke-width="2.4"/><path d="M762,289C762,290 764,291 765,291C766,292 767,292 769,293C770,294 771,294 772,295C774,295 775,296 777,296C778,296 779,297 781,297C782,297 784,297 785,297C786,296 787,296 789,296C790,297 791,297 792,297C794,297 795,298 796,298C797,299 798,299 799,300C800,301 802,302 802,302" stroke-width="1.5"/><path d="M644,298C643,298 641,299 640,300C639,300 638,300 637,300C635,301 634,301 633,301C631,301 630,301 629,301C627,301 626,301 625,301C623,302 622,302 621,302C619,302 618,303 617,304C615,304 614,305 613,305C612,306 611,307 609,307C608,308 607,309 606,309C605,310 604,310 602,311C601,311 600,311 599,311C597,312 595,312 595,312" stroke-width="2.4"/><path d="M789,318C789,319 791,319 792,320C793,321 794,322 796,322C797,323 798,324 799,324C801,325 802,325 803,326C804,326 806,326 807,327C808,327 810,327 811,328C812,328 814,328 815,329C816,329 818,330 819,330" stroke-width="2.0"/><path d="M671,318C670,318 668,319 667,319C666,320 665,320 664,321C662,322 661,323 660,324C659,325 658,325 657,326C656,327 655,328 654,328C653,329 652,329 651,330C649,330 648,331 647,331C646,332 644,332 643,333C642,333 640,334 639,334C638,335 637,336 636,336C634,337 633,338 632,339C631,340 630,342 630,342" stroke-width="2.7"/><path d="M758,431C758,431 759,433 760,434C761,435 761,436 762,437C763,438 763,439 763,441C764,442 764,443 764,444C765,446 765,448 765,448" stroke-width="1.5"/><path d="M640,411C640,411 639,413 639,414C638,415 637,417 637,418C636,419 635,420 634,421C633,422 632,423 632,424C631,425 630,426 629,427C628,428 628,429 627,431C627,432 626,433 626,435C625,436 625,437 625,439C625,440 624,441 624,442C624,444 623,445 623,446C622,447 621,448 621,449C620,450 619,451 618,452C618,453 616,455 616,456" stroke-width="2.4"/><path d="M728,446C728,446 729,448 730,449C730,450 731,452 731,453C731,454 731,455 731,457C731,458 731,459 732,461C732,462 732,463 732,465C733,466 733,468 734,469C734,470 735,472 735,472" stroke-width="2.0"/><path d="M685,303C685,303 683,304 682,305C681,305 680,306 678,306C677,307 676,307 675,307C674,307 672,308 671,308C670,308 668,308 667,308C666,308 664,309 663,309C661,309 660,310 659,311C658,311 656,312 655,313C654,314 653,315 652,316C651,317 650,318 649,318" stroke-width="1.6"/><path d="M732,418C732,419 732,421 733,422C733,424 733,425 734,426C734,428 735,429 735,430C736,432 736,433 737,434C737,435 738,437 738,438" stroke-width="2.0"/><path d="M702,314C701,314 699,313 698,313C697,313 695,313 694,313C693,312 691,312 690,312C688,312 687,312 685,312C684,312 683,313 681,313C680,314 679,314 677,315C676,315 675,316 674,316C673,316 671,317 670,317" stroke-width="3.1"/><path d="M765,436C765,436 766,438 767,439C768,440 769,441 769,442C770,443 770,444 770,445C771,446 771,447 771,449C771,450 771,451 771,453C771,454 771,455 771,457C772,458 772,460 772,461C773,462 774,464 774,465" stroke-width="2.6"/><path d="M676,400C675,401 674,402 674,404C673,405 673,406 672,408C672,409 672,410 672,412C671,413 671,414 671,416C671,417 670,418 670,419C669,420 669,421 668,422C667,423 666,424 665,425" stroke-width="2.0"/><path d="M652,393C651,394 651,396 650,397C649,398 649,399 648,400C647,401 646,402 646,403C645,404 643,404 642,405C641,406 640,406 639,407C638,408 637,409 636,410C635,411 634,412 633,413C632,414 631,415 631,417C630,418 629,420 629,420" stroke-width="2.1"/><path d="M755,427C756,428 757,429 758,430C758,431 759,433 759,434C760,435 760,436 760,437C760,438 760,440 760,441C760,442 760,444 760,445C760,447 760,448 761,449C761,451 761,452 762,453C763,455 764,456 764,457" stroke-width="3.2"/><path d="M798,355C799,355 801,356 802,356C803,357 805,357 806,357C807,358 808,358 809,359C810,360 811,360 812,361C813,362 814,363 815,364C815,365 816,366 817,367C818,368 819,369 820,370C821,371 822,372 823,373C825,374 826,374 827,375C829,375 830,375 831,376C832,376 834,377 835,377" stroke-width="2.8"/><path d="M731,416C731,417 733,418 733,420C734,421 735,422 736,423C736,424 737,425 738,426C738,427 739,428 739,430C740,431 740,432 741,433C741,434 741,436 742,437C742,438 743,440 743,441C744,442 745,443 745,444C746,446 747,447 748,448C749,449 750,451 750,451" stroke-width="2.2"/><path d="M645,396C645,397 644,398 643,399C642,400 641,401 641,402C640,403 639,404 638,405C637,406 636,407 635,409C634,410 634,411 633,412C633,414 632,415 632,416C632,418 631,419 631,420C631,422 631,423 630,424C630,426 630,427 629,428C629,429 628,431 627,431" stroke-width="1.6"/><path d="M667,291C666,291 664,292 663,292C662,292 661,293 659,293C658,293 657,293 655,293C654,294 653,294 651,294C650,295 648,295 647,296C646,296 644,298 644,298" stroke-width="2.5"/><path d="M658,339C657,339 656,341 655,342C655,343 654,344 653,345C652,346 651,347 650,348C649,348 648,349 647,350C646,351 645,351 644,352C643,353 641,354 641,355" stroke-width="2.5"/><path d="M773,343C774,343 776,344 777,344C778,345 780,345 781,345C782,346 783,346 784,346C786,347 787,347 788,348C789,349 790,350 791,350C792,351 793,352 794,353C795,354 796,355 797,356C798,357 799,358 800,358C801,359 802,360 804,360C805,361 806,362 808,362C809,362 810,363 811,363C813,364 814,365 815,365" stroke-width="2.5"/><path d="M622,371C622,371 620,372 619,372C617,373 616,373 615,373C614,374 612,374 611,375C610,376 608,377 607,377C606,378 605,379 604,381C603,382 603,383 602,384C601,385 600,386 600,387C599,388 598,389 597,390C596,391 595,391 594,392C593,393 591,393 591,394" stroke-width="2.1"/><path d="M648,314C647,314 645,314 644,314C642,314 641,314 639,315C638,316 637,316 636,317C635,318 634,319 633,320C632,321 631,322 630,322C629,323 628,324 627,324C625,325 624,325 623,325C622,325 621,325 619,325C618,325 617,325 615,325C614,325 612,326 611,326C609,326 608,327 607,328C606,328 604,329 603,330C602,331 601,333 601,333" stroke-width="2.5"/><path d="M688,320C687,320 685,320 684,321C682,321 681,322 680,323C679,323 678,324 676,325C675,326 674,326 673,327C672,328 671,328 670,329C669,329 667,330 666,330C665,331 664,331 662,331C661,332 660,332 659,333C657,333 656,334 655,334C653,335 652,336 651,336C650,337 649,338 648,339C647,340 646,341 645,342C644,343 643,344 642,345" stroke-width="1.7"/><path d="M693,314C693,314 691,315 690,316C689,316 687,317 686,317C685,317 684,318 682,318C681,318 680,318 678,318C677,319 676,319 674,319C673,319 672,320 670,320C669,321 668,321 666,322C665,322 664,323 663,324C662,324 661,325 659,326C658,327 657,327 656,328C655,329 653,330 653,330" stroke-width="2.0"/><path d="M765,307C765,308 767,309 768,310C769,310 770,311 771,312C772,313 773,314 774,315C776,315 777,316 778,317C780,317 781,317 783,317C784,317 785,317 787,317C788,317 790,318 791,318" stroke-width="2.5"/><path d="M760,319C761,319 762,320 764,321C765,322 766,323 767,323C768,324 770,324 771,325C772,325 774,326 775,326C776,327 777,327 779,327C780,328 781,328 782,329C783,329 784,330 785,331C786,332 787,332 788,333C789,334 790,336 791,336" stroke-width="2.3"/><path d="M756,378C757,378 757,380 757,382C758,383 758,384 759,386C759,387 760,388 761,389C761,391 762,392 763,393C764,394 765,395 766,396" stroke-width="3.0"/><path d="M749,387C749,387 751,389 752,390C752,391 753,392 754,393C754,394 755,395 755,396C756,397 756,399 757,400C757,401 758,403 759,404C759,405 760,406 761,407C761,409 762,410 763,411C764,412 765,413 766,413C767,414 769,416 769,416" stroke-width="2.9"/><path d="M661,427C661,427 661,429 661,430C661,432 660,433 660,434C659,435 659,436 658,437C657,438 657,439 656,440C655,441 654,443 653,443" stroke-width="2.0"/><path d="M632,375C631,375 630,376 628,377C627,378 626,378 625,379C624,380 623,380 621,381C620,382 619,383 618,383C617,384 616,385 615,386C614,387 613,388 612,389C611,390 610,392 610,393C609,394 608,395 607,396C606,397 606,398 605,398C604,399 603,400 602,401C601,401 599,402 598,403C597,404 596,405 595,405" stroke-width="2.8"/><path d="M778,302C779,302 781,302 782,303C783,303 784,304 785,304C786,305 787,306 788,306C790,307 791,308 792,309C793,309 794,310 795,311C797,311 798,312 799,312C801,313 802,313 804,313C805,313 806,313 808,313C809,313 810,313 811,313C813,314 815,314 815,315" stroke-width="2.0"/><path d="M631,380C630,381 629,382 628,383C627,384 626,385 625,386C624,387 623,388 622,389C621,390 620,391 620,393C619,394 619,395 618,397C618,398 618,399 618,401C617,402 617,403 617,404C616,406 616,408 615,408" stroke-width="1.7"/><path d="M691,319C690,319 688,319 687,320C686,320 684,321 683,322C682,323 681,324 680,325C679,326 678,327 677,328C676,328 675,329 674,330C673,330 672,331 671,331C670,331 669,332 667,332C666,332 665,332 663,332C662,333 660,333 659,334C658,334 656,335 655,336" stroke-width="1.6"/><path d="M631,385C630,385 629,387 629,388C628,389 627,390 626,391C625,391 624,392 623,393C622,394 621,394 619,395C618,396 617,396 616,397C615,398 614,399 613,400C612,402 611,403 611,404C610,405 609,407 609,408C608,409 608,411 607,411" stroke-width="1.9"/><path d="M653,409C652,410 651,412 650,413C649,414 649,415 648,416C647,417 646,418 645,419C645,420 644,422 643,423C643,424 642,426 642,427C642,428 641,430 641,431C641,432 640,433 640,435C640,436 639,437 639,438C638,439 637,441 637,442" stroke-width="2.8"/><path d="M750,392C751,392 752,394 753,394C754,395 755,396 756,397C757,398 758,399 759,399C760,400 761,401 762,402C763,403 764,405 764,406" stroke-width="2.5"/><path d="M785,356C785,356 787,357 788,358C789,359 790,360 791,361C792,361 793,362 794,363C794,364 795,365 796,366C797,368 797,369 798,370C799,371 800,372 800,373C801,374 803,376 803,376" stroke-width="1.6"/><path d="M649,323C649,323 647,324 645,324C644,325 643,326 642,327C641,328 640,329 639,330C638,331 637,332 636,333C635,334 635,335 634,336C633,337 632,338 632,339C631,340 630,341 629,342C628,342 627,343 625,344C624,344 623,345 622,346C621,346 619,348 619,348" stroke-width="2.9"/><path d="M770,346C770,346 772,348 773,348C774,349 776,350 777,350C778,351 779,351 780,352C782,352 783,353 784,353C785,354 786,355 787,356C788,356 789,357 789,358C790,359 791,361 791,362C792,363 793,364 793,365C794,366 795,368 796,369C797,370 798,371 799,371C800,372 801,373 803,374C804,374 806,375 806,376" stroke-width="2.8"/><path d="M787,356C788,356 789,357 790,359C791,360 791,361 792,362C792,363 793,364 793,365C794,367 794,368 795,369C796,370 797,371 797,373C798,374 799,375 800,376C801,377 802,378 803,378C804,379 806,380 806,381C807,382 808,383 809,384C810,385 811,386 811,387C812,388 813,390 813,390" stroke-width="2.6"/><path d="M698,274C698,274 696,274 695,275C693,275 692,275 691,275C689,275 688,275 686,275C685,276 684,276 682,277C681,277 680,278 679,279C677,279 676,280 675,281" stroke-width="3.0"/><path d="M654,311C653,311 651,311 650,312C648,312 647,313 646,313C644,314 643,314 642,315C641,316 639,317 638,317C637,318 636,319 635,320C634,321 633,322 632,323" stroke-width="1.6"/><path d="M677,449C677,449 676,451 676,453C675,454 675,455 675,457C675,458 674,459 674,460C673,461 673,462 672,463C671,464 671,465 670,466C669,467 668,468 667,469C666,470 665,471 664,472C663,474 663,475 662,476C661,477 661,479 660,480C660,481 660,483 659,484C659,485 659,487 658,488" stroke-width="1.7"/><path d="M660,394C660,394 659,396 658,397C658,398 657,399 656,401C656,402 655,403 654,404C654,406 653,407 653,408C652,410 652,411 652,412C652,414 652,415 652,416C651,418 651,419 651,420C651,422 651,423 650,424C650,425 649,427 649,428C648,429 648,430 647,431C647,432 646,434 645,435" stroke-width="1.9"/><path d="M677,318C677,318 675,318 673,318C672,318 670,318 669,318C668,318 666,319 665,319C663,320 662,321 661,322C660,322 659,323 658,324C657,325 656,326 655,326C654,327 653,328 652,328C650,329 649,329 648,329C647,330 645,330 644,330" stroke-width="1.8"/><path d="M741,450C741,451 742,453 742,454C743,455 744,457 745,458C746,459 747,460 748,461C749,461 750,462 751,463C752,464 753,465 754,465C755,466 756,467 756,469C757,470 757,471 757,472C758,473 758,475 758,476C758,477 758,479 759,480C759,481 760,483 760,484" stroke-width="1.6"/><path d="M790,358C790,358 792,359 793,360C794,361 795,362 796,363C797,364 798,365 799,365C800,366 801,367 802,368C803,369 804,370 805,370C807,371 808,372 809,372C810,373 812,373 813,374C814,374 815,375 817,375C818,376 819,376 820,377C821,378 822,379 823,379C824,380 825,381 826,382C826,383 827,384 828,385C829,386 831,387 831,388" stroke-width="2.2"/><path d="M654,338C653,338 651,339 650,339C649,339 647,340 646,340C645,340 643,341 642,341C641,342 640,342 638,342C637,343 636,344 634,344C633,345 632,346 631,346C630,347 628,348 628,349" stroke-width="1.8"/><path d="M621,366C621,367 620,369 620,370C619,371 619,373 618,374C618,375 617,376 617,378C616,379 616,380 615,381C614,382 614,383 613,384C612,384 611,385 610,386C609,387 607,387 606,388C605,389 604,390 603,391C602,392 601,393 600,394C600,396 599,397 599,398C598,400 598,401 598,402C598,404 597,405 597,406C597,407 596,409 595,410" stroke-width="1.5"/><path d="M752,445C753,445 753,447 754,448C755,450 756,451 756,452C757,453 758,454 759,455C760,456 762,457 762,457C763,458 764,459 765,460C766,461 766,462 767,463C767,465 767,467 768,467" stroke-width="1.7"/><path d="M773,321C774,321 775,322 777,323C778,323 779,324 780,325C781,326 782,326 783,327C785,328 786,328 787,329C788,329 790,330 791,330C792,331 794,331 795,331" stroke-width="2.2"/><path d="M642,313C641,313 639,314 638,314C637,315 636,315 634,315C633,316 632,316 630,317C629,317 628,318 627,319C625,319 624,320 623,321C622,322 621,323 620,324C620,325 619,326 618,327C617,328 616,330 615,330" stroke-width="2.8"/><path d="M789,391C789,392 790,394 791,395C792,396 793,396 794,397C795,398 796,399 797,400C798,401 799,402 799,403C800,404 801,405 801,406C802,407 802,409 803,410C803,411 803,412 804,414C804,415 804,416 805,418C805,419 806,420 807,422C807,423 808,424 809,425C810,426 811,428 812,428" stroke-width="2.6"/><path d="M753,401C754,402 755,403 756,404C757,405 758,405 759,406C760,407 761,408 761,409C762,411 763,412 763,413C764,414 764,415 765,417C765,418 766,419 767,420C767,421 769,423 769,424" stroke-width="1.6"/><path d="M654,394C654,394 653,396 652,397C651,398 650,398 649,399C648,400 647,401 646,402C645,402 643,403 643,405C642,406 641,407 640,408C640,409 639,411 639,412C638,413 638,415 638,416" stroke-width="1.5"/><path d="M626,328C626,328 625,330 624,330C623,331 622,332 621,332C619,333 618,334 617,334C616,335 615,335 613,336C612,336 611,337 610,338C608,339 607,340 606,341C605,342 605,343 604,344C603,345 603,347 602,348C601,349 601,350 600,351C599,352 599,353 598,354C597,355 596,356 595,356C594,357 592,358 591,358" stroke-width="2.2"/><path d="M722,427C722,427 723,429 723,430C724,432 724,433 724,434C724,436 724,437 724,438C725,440 725,441 725,442C726,444 727,445 727,446C728,447 729,449 730,450C731,451 732,452 732,453C733,454 734,455 735,456C735,457 736,458 736,459C737,460 737,462 737,463C737,464 738,466 738,467" stroke-width="2.7"/><path d="M624,319C624,320 622,320 621,321C619,322 618,323 617,324C616,325 615,326 614,327C614,328 613,329 612,330C611,331 610,332 609,332C608,333 607,334 606,335C605,335 604,336 603,336C601,337 600,337 599,338C598,338 596,339 595,339C594,340 593,341 592,342C590,343 589,344 589,345C588,346 587,347 586,348C585,349 584,351 584,351" stroke-width="2.8"/><path d="M726,278C726,278 728,279 729,280C730,281 732,281 733,282C734,282 735,282 737,283C738,283 739,284 741,284C742,285 743,285 744,285C745,286 747,286 748,287C749,288 750,288 751,289C752,290 753,291 754,292C755,292 756,293 757,294C758,295 759,296 760,296C762,297 763,298 764,299C765,299 767,300 768,300" stroke-width="1.6"/><path d="M701,437C700,438 700,440 700,441C699,442 699,444 698,445C698,446 698,448 698,449C698,450 698,452 698,453C698,455 698,456 698,457C698,459 699,460 699,461C699,463 699,464 699,465C699,466 699,468 699,469" stroke-width="2.5"/><path d="M758,306C758,307 760,308 760,309C761,310 762,311 763,312C764,313 766,314 767,315C768,316 769,316 771,317C772,317 773,317 775,317C776,318 777,318 779,318C780,319 781,319 782,320C783,321 784,322 785,322" stroke-width="2.9"/><path d="M684,283C684,283 682,284 681,285C679,285 678,286 677,287C676,287 675,288 674,289C672,289 671,290 670,291C669,292 668,292 667,293C666,293 664,294 663,294C662,295 661,295 659,295C658,296 657,296 656,297C654,297 653,298 652,298C651,299 649,300 648,300C647,301 646,302 645,303C644,304 642,305 642,305" stroke-width="1.7"/><path d="M768,324C769,324 771,324 772,325C773,326 774,326 775,327C776,328 777,329 778,330C778,331 779,332 780,333C781,334 781,335 782,336C783,337 784,338 785,339C786,340 787,341 788,342C789,343 791,343 792,344C793,345 794,345 796,346C797,346 798,347 799,348" stroke-width="2.1"/><path d="M638,334C638,335 636,336 635,336C634,337 633,338 632,338C630,339 629,339 628,340C627,340 625,341 624,342C623,342 622,343 621,344C620,345 619,346 618,347C617,348 616,350 615,351" stroke-width="2.3"/><path d="M746,395C746,395 747,397 748,398C749,399 750,400 750,401C751,402 752,403 752,404C753,405 753,407 753,408C754,409 754,410 754,412C754,413 755,414 755,416C756,417 756,418 757,420C757,421 758,422 759,423C760,424 761,426 761,426" stroke-width="2.7"/><path d="M751,320C751,320 753,321 754,322C755,323 756,323 758,324C759,325 761,325 762,325C763,325 765,326 766,326C768,326 769,326 770,326C771,326 773,326 774,326C775,326 776,326 778,327C779,327 780,328 781,328C782,329 783,330 784,331C785,331 786,332 787,333C788,334 789,335 790,336C792,336 793,337 794,337C796,338 798,338 798,338" stroke-width="2.8"/><path d="M744,429C745,430 746,432 746,433C747,434 748,435 749,436C749,437 750,438 751,440C751,441 752,442 752,443C753,444 753,445 753,447C754,448 754,449 754,450C754,452 755,453 755,454C755,456 755,457 756,458C756,460 757,461 757,462C758,464 759,465 759,466C760,467 761,469 761,469" stroke-width="3.0"/><path d="M682,290C681,291 680,292 679,292C677,292 676,293 675,293C674,293 673,293 671,293C670,293 669,292 667,292C666,292 665,292 663,292C662,292 660,292 659,293C657,293 656,294 655,295C654,295 653,296 652,297C650,298 650,299 648,300C647,301 646,302 645,302" stroke-width="2.2"/><path d="M751,334C751,334 753,335 754,336C755,337 756,338 757,338C758,339 760,340 761,341C762,341 763,342 765,342C766,343 767,343 769,344C770,344 771,344 772,345C774,345 775,345 776,346C777,347 778,347 779,348C780,349 781,349 782,350C783,351 784,352 785,353C786,354 787,355 788,356C789,357 790,358 791,359" stroke-width="2.6"/><path d="M634,385C634,385 632,386 631,387C630,388 629,389 628,390C627,391 626,392 625,393C624,394 624,395 623,396C622,397 621,399 621,400C620,401 619,402 619,403C618,404 617,406 617,407C616,408 615,409 614,410C613,411 613,411 612,412C611,413 610,414 609,415C608,416 606,417 606,418" stroke-width="2.9"/><path d="M754,343C754,343 756,344 757,344C759,345 760,345 762,345C763,346 764,346 766,346C767,346 768,346 769,347C770,347 771,348 772,349C773,349 774,350 775,351C776,352 776,353 777,354C778,355 779,357 780,357" stroke-width="2.0"/><path d="M638,293C638,293 636,294 635,295C634,296 633,297 631,298C630,298 629,299 628,300C627,300 626,301 625,301C624,301 622,302 621,302C620,302 619,302 617,302C616,302 615,302 613,302C612,303 610,303 609,303C608,304 606,305 605,305C604,306 602,308 602,308" stroke-width="1.6"/><path d="M666,430C666,431 665,433 665,434C664,435 663,436 663,437C662,438 661,439 661,441C660,442 659,443 658,444C657,445 656,446 656,447C655,448 654,450 654,451C653,452 653,453 652,455C652,456 652,457 651,459C651,460 651,461 650,462C650,464 649,465 649,466" stroke-width="2.9"/><path d="M631,382C630,382 630,384 629,385C628,386 628,387 627,388C626,389 625,390 624,391C623,392 622,392 621,393C620,394 618,394 618,395" stroke-width="2.9"/><path d="M743,409C743,410 744,412 744,413C745,415 745,416 746,417C747,418 748,419 749,420C750,421 751,422 752,423C753,424 754,426 754,426" stroke-width="1.7"/><path d="M704,454C703,454 703,456 702,457C701,458 701,459 700,460C699,462 698,463 698,464C697,465 696,466 696,468C695,469 695,470 695,472C694,473 695,475 695,476C695,477 695,479 695,480C695,481 695,483 695,484C695,485 694,486 694,487C694,489 693,490 692,491C692,492 691,493 690,494C689,495 688,496 688,497C687,498 686,500 686,501" stroke-width="2.0"/><path d="M755,445C755,446 755,448 755,449C755,451 755,452 756,453C756,455 756,456 757,457C757,459 758,460 759,461C760,462 760,463 761,465C762,466 762,467 763,468C763,469 764,470 764,471C765,473 765,475 765,475" stroke-width="2.8"/><path d="M662,323C661,324 660,325 658,325C657,326 656,327 655,328C654,329 653,329 652,330C651,331 650,332 649,333C648,334 647,334 646,335C645,336 643,336 642,337C641,338 640,338 639,339C638,339 636,340 635,341C634,341 633,342 632,343C630,344 629,344 628,345C627,346 626,347 625,348C625,349 623,351 623,351" stroke-width="1.9"/><path d="M619,353C619,353 617,354 616,355C615,356 614,357 613,358C612,358 611,359 610,360C609,361 608,362 607,363C606,364 605,364 604,365C603,366 602,366 601,367C599,367 598,367 597,368C596,368 594,369 593,369C592,370 590,371 589,371C588,372 587,373 586,374C585,375 584,376 583,377C582,378 581,379 580,380C579,381 578,382 578,383" stroke-width="1.7"/><path d="M761,331C762,331 763,333 764,334C765,335 766,335 768,336C769,337 770,338 771,338C772,339 774,340 775,340C776,341 778,341 779,341" stroke-width="2.4"/><path d="M707,268C708,268 710,268 711,268C713,268 714,268 715,269C716,269 718,269 719,270C720,270 721,271 722,272C723,272 724,273 725,274C727,275 728,275 729,276C730,277 732,277 733,278C734,278 736,278 737,278" stroke-width="3.0"/><path d="M686,435C686,436 685,438 685,439C684,440 684,441 683,442C682,443 681,444 681,445C680,446 679,447 678,448C677,449 676,450 675,452C675,453 674,454 673,455C673,456 672,458 672,459C671,460 671,462 671,463C670,464 670,466 670,467C669,468 669,469 668,470C668,471 667,473 666,474C665,475 664,476 664,477" stroke-width="2.8"/><path d="M630,416C630,417 629,418 629,420C628,421 627,422 626,422C625,423 624,424 624,425C623,426 621,427 620,428C620,429 619,430 618,431C617,433 617,434 616,436C616,437 616,438 616,440C616,441 616,443 616,444" stroke-width="2.2"/><path d="M699,313C699,313 697,313 695,313C694,313 693,314 691,314C690,314 689,314 687,314C686,314 685,315 683,315C682,316 681,316 679,317C678,317 677,318 676,319C675,320 674,320 672,321C671,322 670,322 669,323C668,323 667,324 666,324C664,325 662,325 662,326" stroke-width="1.6"/><path d="M727,285C728,285 730,284 731,284C732,284 733,285 734,285C736,285 737,286 738,286C739,287 740,288 742,288C743,289 744,289 745,290C747,290 748,290 750,290C751,291 753,290 754,290" stroke-width="1.8"/><path d="M655,411C655,411 654,413 654,414C653,416 653,417 652,418C652,419 651,420 651,421C650,422 649,423 648,424C648,426 647,427 646,428C645,429 644,430 643,431C643,432 642,433 641,434C641,436 640,438 640,438" stroke-width="3.2"/><path d="M650,372C649,373 648,374 648,376C647,377 647,378 646,380C646,381 646,382 646,384C645,385 645,386 644,387C644,388 643,389 643,390C642,391 641,392 640,393C639,394 638,396 637,396" stroke-width="2.3"/><path d="M728,420C728,420 729,422 729,424C730,425 731,426 731,427C732,428 733,430 733,431C734,432 735,433 735,434C736,435 736,437 737,438" stroke-width="2.1"/><path d="M662,347C662,347 660,349 659,350C658,350 657,351 656,352C655,352 654,353 653,353C651,354 650,354 649,355C648,356 646,356 645,357C644,358 643,359 642,360C641,361 640,362 639,363C638,364 638,365 637,366C636,368 635,369 635,370C634,371 633,372 632,373" stroke-width="2.7"/><path d="M664,288C663,288 661,288 660,288C659,288 657,288 656,288C655,288 653,288 652,288C651,288 649,288 648,289C646,289 645,289 644,290C642,291 641,291 640,292C639,293 638,293 636,294C635,295 634,295 633,296C632,297 631,297 630,297C628,298 627,298 626,298C625,298 623,298 622,299C621,299 619,299 618,299C617,299 615,300 614,300" stroke-width="2.4"/><path d="M796,318C796,319 798,319 799,320C800,320 802,321 803,321C804,322 805,322 806,323C807,324 808,325 809,325C810,326 811,327 812,328C813,329 814,330 815,331C817,331 818,332 819,333C820,333 822,334 823,334C824,335 826,336 827,336" stroke-width="2.3"/><path d="M643,348C642,348 641,349 640,350C639,351 638,352 637,352C635,353 634,354 633,355C632,356 631,357 630,358C629,359 628,360 628,361" stroke-width="3.1"/><path d="M657,416C657,416 655,418 654,419C653,420 652,421 651,422C650,423 650,424 649,425C648,427 648,428 648,429C647,431 647,432 647,434C647,435 647,436 646,437C646,439 646,440 645,441C645,442 644,443 643,444C642,445 641,446 640,447C639,447 638,448 637,449C636,450 635,452 635,452" stroke-width="2.2"/><path d="M651,308C651,308 649,309 648,310C646,310 645,311 644,312C643,313 642,315 641,316C641,317 640,318 639,319C638,320 638,321 637,322C636,323 635,323 634,324C633,325 632,325 631,326C629,326 628,326 627,327C625,327 624,328 623,328C622,329 620,330 619,331C618,332 617,333 616,334C615,335 614,337 614,337" stroke-width="1.7"/><path d="M756,372C756,373 757,374 758,375C759,376 759,377 759,379C760,380 760,381 761,382C761,384 762,385 763,386C763,387 765,389 765,390" stroke-width="3.0"/><path d="M725,281C726,281 728,281 729,281C730,281 732,280 733,280C734,280 736,280 737,280C738,280 739,280 741,280C742,280 743,280 744,281C745,281 746,282 748,283C749,283 750,284 751,284C752,285 754,286 755,286C756,286 758,287 759,287C761,287 762,287 763,287C765,287 767,287 768,287" stroke-width="3.1"/><path d="M613,395C612,396 611,397 610,398C609,399 607,399 606,400C605,401 604,402 603,402C602,403 601,404 600,405C599,406 597,408 597,408" stroke-width="3.0"/><path d="M614,387C613,387 612,389 611,389C610,390 609,391 607,392C606,393 605,393 604,394C603,395 602,397 601,398C601,399 600,400 599,402C599,403 599,404 598,406C598,407 598,408 597,409C597,411 596,412 596,413C595,414 595,415 594,416C593,417 592,418 591,419C590,419 589,420 588,421C587,422 586,423 585,424" stroke-width="2.0"/><path d="M760,363C760,363 762,365 763,366C764,366 765,367 766,368C768,368 769,369 770,370C771,370 772,371 774,372C775,372 776,373 777,374C778,374 779,375 780,376C780,377 781,378 782,379C783,380 784,381 785,382C785,383 786,384 787,385C788,386 789,387 790,388C791,389 792,390 794,391C795,391 796,392 797,393" stroke-width="1.9"/><path d="M737,293C738,293 740,294 741,294C743,294 744,294 746,294C747,294 748,294 750,294C751,294 752,294 754,294C755,294 756,294 757,295C758,295 760,296 761,296" stroke-width="2.5"/><path d="M630,309C629,309 627,310 626,311C625,312 624,313 623,314C622,315 622,316 621,317C620,318 619,319 618,320C617,321 616,321 615,322C614,322 613,323 611,323C610,323 609,323 608,324C606,324 605,324 603,324C602,325 600,326 600,326" stroke-width="2.6"/><path d="M765,429C765,429 766,431 766,432C767,434 767,435 768,436C768,437 768,439 769,440C769,441 770,442 771,444C771,445 772,446 773,447C774,448 775,449 776,450C776,451 778,453 778,453" stroke-width="3.0"/><path d="M763,326C763,326 765,327 767,327C768,327 769,328 771,328C772,328 773,328 774,329C775,329 777,330 778,331C778,331 780,333 780,333" stroke-width="1.6"/><path d="M753,310C754,311 755,311 757,312C758,312 759,313 761,313C762,313 763,314 765,314C766,314 767,314 769,314C770,314 771,314 773,315C774,315 775,315 777,315C778,316 779,316 780,316C781,317 783,318 784,318" stroke-width="2.7"/><path d="M663,291C662,291 661,293 660,293C659,294 658,295 657,295C656,296 654,296 653,297C652,297 651,297 650,297C648,297 647,297 646,297C644,297 643,297 641,297C640,298 638,298 637,299C636,299 635,300 633,301C632,302 631,303 630,304C629,305 629,306 628,307C627,308 626,308 625,309C624,310 623,310 622,311C620,311 618,311 618,312" stroke-width="1.7"/><path d="M719,316C720,317 722,318 723,318C724,319 726,319 727,319C729,319 730,319 731,319C732,319 734,320 735,320C736,320 738,321 738,321" stroke-width="2.3"/><path d="M714,274C714,274 716,274 718,274C719,275 721,274 722,274C723,274 725,274 726,274C727,274 729,274 730,274C731,274 732,274 733,275C735,275 736,275 737,276C738,276 739,277 741,277C742,278 743,279 744,279C746,280 747,280 748,280C750,281 751,281 753,281C754,281 755,281 757,281C758,281 759,281 761,281C762,281 764,281 765,281" stroke-width="2.4"/><path d="M690,297C690,297 688,298 687,298C685,298 684,299 683,299C682,299 680,299 679,299C678,299 676,299 675,299C674,299 672,299 671,299C669,299 668,300 667,300C665,300 664,301 663,302C661,302 660,303 659,304C658,304 656,305 656,306" stroke-width="3.1"/><path d="M771,366C771,366 772,367 773,368C774,369 774,371 775,372C775,373 776,374 776,375C777,377 778,378 779,379C779,380 781,381 782,382C783,383 785,384 785,385" stroke-width="2.3"/><path d="M659,408C659,409 657,410 657,412C656,413 655,414 655,416C655,417 654,418 654,420C654,421 654,422 653,424C653,425 653,426 652,427C652,428 651,429 650,430C650,431 648,433 648,433" stroke-width="1.7"/><path d="M746,407C746,407 748,409 748,410C749,411 749,412 750,413C751,415 751,416 752,417C752,418 753,420 753,421C754,422 755,424 755,424" stroke-width="1.7"/><path d="M730,433C730,434 731,436 732,437C732,438 733,439 733,440C734,442 734,443 735,444C735,445 735,446 735,448C736,449 736,450 736,452C736,453 736,455 736,455" stroke-width="1.9"/><path d="M624,413C624,413 623,415 623,416C622,418 622,419 622,420C621,421 621,423 621,424C620,425 620,426 619,427C618,428 618,429 617,430C616,431 615,432 614,433C613,434 612,435 611,436" stroke-width="3.0"/><path d="M659,323C659,323 657,323 656,324C654,324 653,324 652,325C650,325 649,325 648,326C646,327 645,327 644,328C643,329 642,330 641,331C640,332 639,333 638,334C637,335 636,336 635,337C634,338 633,339 632,339C631,340 630,341 629,342C628,342 627,343 626,343C625,344 623,344 622,345C621,345 619,346 619,347" stroke-width="3.2"/><path d="M737,412C738,413 739,415 739,416C740,417 740,418 740,419C740,421 740,422 740,423C740,425 740,426 741,427C741,429 742,430 742,432C743,433 744,434 745,435C745,436 747,437 748,438C748,439 750,440 750,441C751,442 752,443 753,444C753,445 754,446 754,447C755,448 755,450 755,451" stroke-width="3.0"/><path d="M688,428C687,428 686,430 686,431C685,432 684,434 684,435C684,436 684,438 683,439C683,441 683,442 684,444C684,445 684,446 684,447C684,449 684,450 683,451C683,452 683,454 682,455C682,456 681,457 681,458C680,459 679,460 678,461C678,462 677,464 676,465" stroke-width="2.7"/><path d="M768,289C769,290 770,290 771,291C772,292 773,293 774,294C775,294 776,296 777,296C778,297 779,299 780,300C781,300 782,301 783,302C784,303 786,303 787,304C788,304 790,305 791,305C792,305 794,305 795,306C796,306 798,307 798,307" stroke-width="2.9"/><path d="M649,426C649,426 648,428 647,429C646,431 646,432 645,433C645,435 645,436 645,438C645,439 645,440 645,442C644,443 644,444 644,445C644,447 644,448 644,449C643,450 643,451 642,452C641,454 641,455 640,456C639,457 638,458 638,459C637,460 636,462 636,463" stroke-width="2.0"/><path d="M756,360C757,361 758,362 759,364C759,365 760,366 761,367C762,368 763,369 765,369C766,370 767,371 768,371C770,372 771,372 772,373C773,374 774,374 775,375C776,376 777,376 778,377C779,378 780,380 780,380" stroke-width="2.5"/><path d="M769,355C769,355 771,357 772,358C772,359 773,360 773,361C774,362 774,363 775,365C775,366 776,367 777,368C777,370 778,371 779,372C780,373 781,374 782,375C784,375 785,376 786,377C787,378 788,378 789,379C790,380 791,381 792,382" stroke-width="2.6"/><path d="M780,384C780,385 782,385 783,386C784,387 785,387 786,388C787,389 787,390 788,391C788,392 789,394 789,395C790,396 791,398 791,399" stroke-width="1.6"/><path d="M621,330C620,330 618,331 617,332C616,332 614,333 613,334C612,334 611,335 610,336C609,337 608,338 607,339C606,340 604,341 604,342" stroke-width="2.0"/><path d="M682,288C681,288 679,290 678,290C677,291 676,291 675,291C674,292 672,292 671,292C670,292 669,292 667,293C666,293 664,293 663,293C662,294 660,294 659,295C658,295 656,296 655,297C654,298 653,299 652,300C651,301 651,302 650,303C649,304 648,304 647,305C646,306 645,306 643,307C642,307 641,308 640,308C639,309 637,309 636,309" stroke-width="2.2"/><path d="M746,434C746,434 747,436 748,437C748,438 749,439 750,441C750,442 750,443 750,444C751,445 750,446 750,448C750,449 750,450 750,452C750,453 749,454 749,456C749,457 749,459 749,460C750,461 750,463 750,464C751,466 752,467 752,468C753,469 754,471 754,471" stroke-width="2.8"/><path d="M786,404C786,404 787,406 788,407C788,408 789,409 790,411C790,412 791,413 792,414C793,415 794,416 795,417C796,418 797,419 798,420C799,421 800,421 801,422C802,423 803,424 804,425C805,425 807,427 807,427" stroke-width="2.7"/><path d="M640,364C639,364 638,366 636,366C635,367 634,368 633,369C632,370 631,371 630,372C630,373 629,374 628,375C627,377 626,378 626,379C625,380 624,381 623,382C622,382 621,383 620,384C619,385 618,386 617,387C616,387 615,388 614,389C613,390 612,391 611,392C610,393 609,394 608,395C607,396 606,397 605,398" stroke-width="2.1"/><path d="M631,342C630,342 629,343 627,343C626,344 625,344 624,344C622,344 621,345 620,345C618,345 617,345 616,346C614,346 613,347 612,347" stroke-width="2.9"/><path d="M611,378C611,379 609,380 608,381C607,382 607,384 606,385C605,386 605,388 604,389C604,390 604,391 603,392C602,394 602,395 601,396C600,397 600,398 599,398C598,399 597,400 595,400C594,401 593,402 592,403C591,403 590,404 589,405C588,406 587,407 586,408C585,410 584,412 584,412" stroke-width="3.1"/><path d="M713,292C714,292 716,293 717,293C719,293 720,293 722,293C723,293 725,293 726,293C727,292 728,292 730,292C731,292 732,292 733,292C735,292 736,292 737,292C738,293 739,293 740,294C742,294 743,295 744,296" stroke-width="2.0"/><path d="M614,366C613,366 612,368 612,369C611,370 611,372 611,373C610,374 610,375 609,376C608,377 608,379 607,379C606,380 605,381 604,382C603,383 602,384 601,385" stroke-width="2.7"/><path d="M667,432C666,432 665,434 665,435C664,436 663,438 663,439C663,440 662,442 662,443C662,445 662,446 662,448C663,449 663,450 663,452C663,453 663,454 663,455C663,457 663,458 662,459C662,460 662,461 661,462C661,464 660,465 659,466C659,467 658,468 657,470C657,471 656,473 656,473" stroke-width="2.4"/><path d="M734,445C734,446 735,447 735,449C735,450 735,451 736,453C736,454 736,455 736,457C736,458 736,459 736,461C736,462 737,464 737,465C738,466 739,467 739,469C740,470 741,471 741,472C742,473 743,474 743,475C744,477 745,478 745,479C745,480 746,482 746,483" stroke-width="2.3"/><path d="M658,347C657,348 656,349 655,350C654,351 654,352 653,353C652,355 651,356 650,356C650,357 649,358 648,359C647,360 645,361 645,362" stroke-width="1.7"/><path d="M796,317C797,317 798,318 800,319C801,320 802,321 804,321C805,322 806,322 808,322C809,322 811,322 812,322C813,322 815,322 816,322" stroke-width="2.1"/><path d="M668,397C668,397 667,399 667,400C667,402 666,403 666,404C665,405 665,406 664,407C663,409 663,410 662,411C661,412 661,413 660,414C659,416 659,417 658,418C658,420 657,421 657,422C657,424 656,426 656,426" stroke-width="2.0"/><path d="M773,360C774,361 775,362 776,363C777,364 779,364 780,365C781,366 783,366 784,367C785,367 786,368 787,368C788,369 789,370 790,371C791,372 791,373 792,374C793,375 793,376 794,377C794,378 795,380 795,381" stroke-width="2.3"/><path d="M690,281C689,281 687,282 686,283C685,283 684,284 683,284C681,284 680,284 679,285C678,285 676,285 675,285C674,285 672,285 671,285C669,286 668,286 667,287C665,287 664,288 663,288C662,289 660,290 659,290" stroke-width="2.5"/><path d="M636,346C636,346 634,347 633,348C632,348 631,349 629,349C628,350 627,350 626,351C624,351 623,352 622,353C621,353 620,354 618,355C617,356 616,357 615,358C614,359 613,360 612,361C611,361 610,362 610,363C609,364 608,365 607,366C606,367 605,367 603,368C602,369 601,370 600,370" stroke-width="3.0"/><path d="M616,384C616,384 614,386 614,387C613,388 612,389 612,391C611,392 610,393 609,394C609,395 608,396 607,397C606,398 605,399 604,400C603,401 602,401 601,402C600,403 599,405 599,405" stroke-width="1.8"/><path d="M730,431C730,431 730,433 731,435C731,436 732,437 732,439C733,440 733,441 734,442C735,444 735,445 736,446C736,447 737,448 737,449C737,451 738,453 738,453" stroke-width="1.7"/><path d="M677,417C677,417 676,419 676,420C675,421 674,422 673,423C673,424 672,425 671,426C670,427 669,428 668,429C667,430 666,431 666,432C665,434 664,435 663,436C663,437 662,439 662,440C662,441 661,443 661,444C660,445 660,446 660,448C659,449 659,450 658,451C658,452 657,453 656,454C655,455 654,456 653,457C653,458 651,459 651,460" stroke-width="3.2"/><path d="M757,406C757,407 758,409 758,410C759,411 760,412 760,414C761,415 762,416 762,417C763,418 764,419 765,420C766,422 767,423 768,424C768,425 769,425 770,426C771,427 772,429 772,430C773,431 773,432 774,433C774,434 775,436 775,437" stroke-width="3.1"/><path d="M653,383C652,383 652,385 651,386C651,388 650,389 650,390C649,392 649,393 649,394C648,395 648,396 647,397C647,398 646,399 645,400C644,401 643,402 642,403C642,404 641,405 640,406C639,407 638,409 637,410" stroke-width="1.6"/><path d="M739,307C740,307 742,308 743,308C744,309 746,309 747,309C748,310 750,310 751,310C752,311 753,311 754,312C755,312 756,313 757,314C758,314 759,315 760,316C761,317 762,318 762,319C763,320 764,321 765,322C766,323 768,325 768,325" stroke-width="2.8"/><path d="M658,362C657,363 655,363 654,363C652,364 651,364 650,365C648,365 647,366 646,367C645,368 644,369 643,370C642,371 641,373 641,374" stroke-width="1.9"/><path d="M666,305C665,305 664,305 662,305C661,305 660,304 658,304C657,304 655,304 654,304C653,304 651,304 650,305C648,305 647,306 646,306" stroke-width="3.1"/><path d="M765,309C766,310 768,310 769,311C770,312 771,312 773,313C774,313 775,314 777,314C778,314 779,315 781,315C782,315 783,315 784,316C786,316 788,316 788,317" stroke-width="2.7"/><path d="M753,407C754,408 755,410 755,411C756,412 757,413 758,414C759,415 760,416 761,417C761,418 762,419 763,420C764,421 764,422 765,423C765,425 765,426 766,427C766,428 766,430 767,431C767,432 767,434 767,435C768,436 768,438 769,439C770,440 770,441 771,442C772,444 773,445 774,446C774,447 776,448 776,449" stroke-width="2.0"/><path d="M654,348C654,349 652,350 651,351C650,351 649,352 648,353C646,353 645,354 644,355C643,355 642,356 641,357C640,358 639,359 638,360C637,361 636,363 635,364" stroke-width="3.1"/><path d="M776,410C776,410 777,412 778,413C778,415 779,416 780,417C781,418 782,419 783,420C784,421 785,422 786,423C787,424 788,425 789,426C790,426 791,427 792,428C792,429 793,430 794,431C794,432 795,433 796,435C796,436 797,437 797,438C798,439 798,441 799,442" stroke-width="2.6"/><path d="M767,318C768,318 770,318 771,319C772,320 773,320 774,321C775,322 776,323 777,323C778,324 779,325 780,326C781,327 783,327 784,328C785,329 787,329 788,329" stroke-width="1.5"/><path d="M648,296C647,296 645,297 644,298C643,298 642,299 640,300C639,300 638,301 637,302C636,302 635,303 634,303C632,304 631,304 630,304C629,305 627,305 626,305C625,305 624,306 622,306C621,306 619,306 618,307C617,307 615,308 614,308C613,309 611,310 611,310" stroke-width="1.9"/><path d="M624,377C624,377 622,379 622,380C621,381 620,382 619,383C618,384 617,385 616,385C615,386 614,387 613,388C612,388 611,389 610,389C609,390 607,390 606,391C605,392 604,392 603,393C601,394 600,395 599,396C598,397 598,398 597,399C596,400 595,402 595,403C594,404 593,405 592,406" stroke-width="2.6"/><path d="M709,429C709,430 710,432 710,433C710,434 711,436 712,437C712,438 713,439 713,440C714,442 714,443 714,444C715,445 715,446 715,448C715,449 715,450 715,451C715,453 714,455 714,455" stroke-width="2.0"/><path d="M737,284C737,284 739,284 741,284C742,284 743,284 745,284C746,284 747,284 749,284C750,284 751,284 753,284C754,284 755,284 756,285C757,285 759,285 760,286C761,286 762,287 764,287C765,288 767,288 767,289" stroke-width="3.1"/><path d="M705,314C705,315 703,315 701,315C700,315 699,316 697,316C696,316 695,317 693,317C692,318 691,318 690,319C688,319 687,320 686,321" stroke-width="3.0"/><path d="M673,398C673,399 672,401 672,402C671,403 670,404 670,405C669,406 668,407 668,409C667,410 666,411 666,412C665,413 664,415 664,416C663,417 663,419 663,420C663,422 662,423 662,424C662,426 662,427 662,428C662,429 661,431 661,432C661,433 660,435 660,436" stroke-width="3.0"/><path d="M654,353C653,353 652,354 650,354C649,355 648,355 646,355C645,356 644,356 643,357C641,358 640,359 639,359C638,360 637,361 636,363C635,364 634,365 634,366C633,367 632,368 631,369C631,370 630,371 629,372C628,373 626,374 626,374" stroke-width="2.3"/><path d="M669,396C668,397 668,399 667,400C667,401 667,403 666,404C666,405 666,406 665,408C665,409 664,410 664,411C663,412 662,413 661,414C661,415 660,416 659,417C658,418 657,418 656,419C655,420 653,422 653,422" stroke-width="3.1"/><path d="M749,402C750,402 751,404 753,405C754,405 755,406 756,407C757,408 758,408 759,409C760,410 761,411 762,412C763,413 763,414 764,415C764,416 765,417 765,418C766,419 767,421 767,422" stroke-width="2.8"/><path d="M752,414C752,415 753,416 754,418C754,419 755,420 755,421C755,422 756,424 756,425C756,426 756,427 756,429C757,430 757,432 757,433C758,434 758,436 759,437C760,438 761,439 761,440C762,441 763,442 764,444C765,445 766,446 766,447" stroke-width="3.2"/><path d="M766,434C766,434 767,436 767,437C768,439 769,440 770,441C770,442 771,443 772,444C773,445 774,446 774,447C775,448 776,449 776,451C777,452 777,454 777,454" stroke-width="3.1"/><path d="M689,444C689,445 689,447 688,448C688,449 688,450 688,452C687,453 687,454 686,455C686,456 685,457 685,459C684,460 683,461 683,462C682,463 681,464 680,465C680,466 679,468 678,469C678,470 677,472 677,473C677,474 677,476 676,477C676,478 676,480 676,481C676,482 675,484 675,485C675,486 674,487 674,488C673,489 672,491 672,492" stroke-width="2.4"/><path d="M734,435C734,435 735,437 735,438C735,439 736,441 736,442C736,443 736,445 736,446C736,447 736,449 736,450C736,451 737,453 737,454C737,455 738,457 738,458C739,459 740,461 740,462C741,463 742,464 743,465C743,466 744,467 745,468C745,470 746,471 746,472C746,473 746,475 747,476" stroke-width="2.6"/><path d="M667,357C666,357 664,358 663,359C662,359 661,360 660,361C658,361 657,362 656,363C655,364 654,366 653,367C653,368 652,370 652,371" stroke-width="2.0"/><path d="M650,393C649,393 649,395 648,396C648,397 647,398 646,399C646,400 645,401 644,402C643,403 642,404 641,405C640,406 639,407 638,408C637,409 637,411 636,412C635,413 635,414 634,416C634,417 634,418 633,420C633,421 633,423 632,424" stroke-width="1.9"/><path d="M631,319C630,319 629,321 628,321C627,322 625,323 624,323C623,324 622,324 621,325C620,326 618,326 617,327C616,327 615,328 613,329C612,330 611,330 610,331C609,332 608,334 607,335C606,336 606,337 605,338C604,339 603,340 603,341C602,342 601,343 600,344C599,345 597,346 597,346" stroke-width="2.0"/><path d="M701,278C701,278 699,278 697,278C696,278 695,278 693,278C692,278 691,278 689,278C688,279 687,279 685,280C684,280 683,280 681,281C680,281 679,282 678,282C676,282 675,283 674,283C673,283 671,283 670,283C669,283 667,283 666,283" stroke-width="1.7"/><path d="M761,368C761,369 763,371 763,372C764,373 765,374 766,375C768,376 769,376 770,377C772,378 773,378 774,378C776,379 777,379 778,379C779,380 780,380 782,381C783,381 784,382 784,383C785,384 786,385 787,386C787,387 788,388 789,389C789,390 790,391 791,393C792,394 793,395 794,396C795,397 797,398 797,398" stroke-width="3.0"/><path d="M755,423C755,424 755,426 755,427C755,428 755,430 755,431C756,433 756,434 757,435C757,437 758,438 759,439C759,440 760,442 761,442" stroke-width="3.0"/><path d="M696,318C695,318 693,318 692,318C690,318 689,319 688,319C686,320 685,320 684,321C683,321 682,322 680,322C679,323 678,323 677,324C676,324 674,324 673,325C672,325 670,325 669,325C668,325 666,325 665,325C664,326 662,326 661,326C660,326 658,327 657,327C656,328 654,329 653,329C652,330 651,331 650,332C649,333 647,334 647,334" stroke-width="1.9"/><path d="M677,284C677,284 675,285 674,285C672,285 671,286 670,286C668,286 667,287 666,287C664,288 663,288 662,289C661,290 659,291 658,291" stroke-width="2.6"/><path d="M649,318C649,318 647,319 645,319C644,319 643,319 641,319C640,320 638,320 637,321C636,322 635,323 634,323C632,324 632,326 631,327C630,328 629,329 628,330C627,331 627,332 626,333C625,333 624,334 623,335C622,335 620,336 619,336" stroke-width="1.6"/><path d="M788,376C788,376 789,378 790,379C791,380 792,381 793,382C794,382 795,383 795,385C796,386 797,387 797,388C798,389 798,390 799,391C800,393 800,394 801,395C801,396 802,398 802,399" stroke-width="3.1"/><path d="M776,379C776,379 777,381 778,382C779,383 780,384 780,386C781,387 782,388 783,389C784,390 785,391 786,392C787,393 788,394 789,395C790,395 791,397 792,397" stroke-width="1.8"/><path d="M782,356C783,356 784,358 784,359C785,360 786,362 787,363C788,363 790,364 791,365C792,366 793,366 795,367C796,367 797,367 799,368C800,368 801,368 802,369C803,370 804,370 805,371C806,372 807,373 807,374C808,375 809,376 809,377C810,378 810,380 811,381C812,382 813,383 814,384C815,385 816,386 817,387" stroke-width="3.1"/><path d="M737,444C738,444 738,446 739,447C739,449 739,450 739,451C740,452 740,454 740,455C740,456 740,458 741,459C741,460 742,462 742,463C743,464 744,466 744,467C745,468 746,469 747,470C747,471 748,472 749,473C750,474 750,476 751,477C751,478 752,480 752,480" stroke-width="1.8"/><path d="M656,339C655,339 653,340 652,341C651,342 650,343 649,344C648,345 647,346 646,347C645,348 644,348 643,349C642,349 641,350 640,350C639,351 638,351 636,351C635,351 634,351 632,352C631,352 629,352 628,353C627,353 626,354 624,355C623,356 622,357 621,358C620,359 619,360 618,361C618,362 617,363 616,364C615,365 613,366 613,366" stroke-width="1.6"/><path d="M755,412C756,412 756,414 757,415C758,416 759,418 760,419C761,420 762,420 763,421C764,422 765,423 766,424C767,425 768,426 768,427C769,428 769,429 770,430C770,431 770,433 771,434C771,435 771,436 771,438C772,439 772,441 773,442C773,443 774,445 774,446" stroke-width="1.8"/><path d="M658,415C658,416 656,417 655,418C654,418 653,419 652,420C650,421 649,422 648,423C647,424 646,425 646,426C645,427 644,429 644,430C643,431 643,433 643,434C642,435 642,436 642,438C641,439 641,440 640,441C639,442 638,443 637,443" stroke-width="1.6"/><path d="M646,386C645,386 644,388 643,389C642,389 641,390 640,391C639,392 638,394 637,395C636,396 636,397 635,398C634,400 634,401 633,402C633,403 632,404 631,405C631,407 630,408 629,409C628,410 627,411 627,411" stroke-width="2.4"/><path d="M800,347C800,347 802,348 803,349C804,350 805,351 806,352C807,353 807,354 808,355C809,356 809,357 810,358C811,359 811,361 812,362C813,363 814,364 815,365C817,366 818,366 819,367C820,368 821,368 823,369C824,370 825,370 826,371C827,372 828,372 829,373C830,374 831,376 831,376" stroke-width="2.8"/><path d="M640,340C640,340 638,342 637,342C636,343 635,343 634,344C632,344 631,345 630,345C629,346 627,347 626,347C625,348 624,349 623,350C622,351 620,353 620,353" stroke-width="1.9"/><path d="M742,443C742,444 742,446 742,447C742,448 742,450 742,451C743,453 743,454 744,455C744,457 745,458 746,459C747,460 748,461 749,462C750,463 751,464 752,465C753,465 754,466 755,467C755,468 756,469 756,470C757,472 757,473 757,474C757,475 757,477 758,478C758,479 758,481 758,482" stroke-width="2.5"/><path d="M659,438C659,439 659,441 658,442C658,443 657,445 657,446C656,447 656,448 655,449C654,450 654,452 653,453C652,454 651,455 651,456C650,457 649,458 648,459C647,460 646,461 646,462C645,463 644,464 643,466C643,467 642,468 642,469C641,471 641,473 640,473" stroke-width="2.0"/><path d="M755,323C755,323 757,325 758,326C759,327 760,328 761,329C762,329 764,330 765,330C766,331 768,331 769,331C770,332 772,332 773,332C774,333 775,333 776,333C778,334 779,335 780,336" stroke-width="2.3"/><path d="M738,311C739,311 740,312 742,313C743,313 744,314 745,315C746,316 747,317 748,318C749,318 750,319 751,320C753,320 755,321 755,321" stroke-width="3.2"/><path d="M760,375C760,376 762,377 762,378C763,379 764,380 764,381C765,382 765,384 765,385C766,386 766,387 767,389C767,390 768,391 768,393C769,394 770,396 770,396" stroke-width="2.4"/><path d="M722,280C723,280 725,280 726,280C728,280 729,280 730,280C731,279 733,280 734,280C735,280 736,280 738,280C739,281 740,281 741,282C742,282 744,283 745,283" stroke-width="2.9"/><path d="M761,337C762,337 764,338 765,338C766,339 767,339 768,340C769,341 770,341 771,342C772,343 773,344 774,345C775,346 776,347 777,348C777,349 779,350 779,351" stroke-width="2.7"/><path d="M766,377C766,378 767,380 768,381C768,382 769,384 770,385C770,386 771,387 772,388C773,389 774,390 775,391C776,392 778,393 779,394C780,394 781,395 782,396C783,396 784,397 785,398C786,399 786,400 787,401C788,402 788,403 789,404C789,405 790,407 790,408C791,409 791,411 792,412C792,413 793,414 794,416C795,417 796,418 797,419" stroke-width="2.5"/><path d="M648,368C647,368 646,370 645,371C645,372 644,373 643,373C642,374 641,375 640,376C638,376 637,377 636,378C635,378 634,379 633,380C632,381 630,382 630,383C629,384 628,385 627,387C627,388 626,389 626,390C625,392 625,393 624,394C623,395 622,397 622,397" stroke-width="2.6"/><path d="M686,309C685,309 683,309 682,310C681,310 679,311 678,312C677,312 676,313 675,314C674,315 672,315 671,316C670,317 669,318 668,319C667,319 666,320 665,321C664,321 663,322 662,322C660,323 659,324 658,324C657,325 655,325 654,326C653,326 651,328 651,328" stroke-width="2.1"/><path d="M773,324C773,324 775,325 777,325C778,325 779,325 780,326C782,326 783,327 784,327C785,328 786,329 787,330C787,330 788,331 789,332C790,333 791,334 792,335C793,336 794,337 795,338C796,339 798,340 799,340" stroke-width="3.0"/><path d="M712,432C712,433 712,435 712,436C711,438 711,439 711,440C711,442 711,443 711,445C711,446 711,448 712,449C712,450 713,452 714,453C714,454 715,455 716,456C716,457 717,459 717,460C718,461 718,462 718,463C719,464 719,466 718,467C718,468 718,469 718,471C718,472 717,473 717,475C717,476 717,478 717,479" stroke-width="3.1"/><path d="M682,279C682,279 680,280 678,280C677,280 676,280 675,281C673,281 672,281 671,281C669,281 668,281 666,282C665,282 664,283 662,284C661,285 660,286 659,287C658,288 657,289 656,290C655,290 655,291 654,292C653,293 652,294 651,294C649,295 648,295 647,295" stroke-width="1.8"/><path d="M673,304C672,304 670,304 669,304C668,304 667,305 665,305C664,305 663,305 661,305C660,305 659,305 657,305C656,305 654,305 653,305C652,305 650,306 649,306C648,307 646,307 645,308C644,309 642,310 642,310" stroke-width="3.0"/><path d="M655,406C655,406 654,408 653,409C653,410 652,412 652,413C651,414 651,415 650,417C650,418 649,419 649,420C648,421 647,422 647,423C646,424 645,425 644,426C643,427 642,428 641,429C641,430 640,431 639,432C638,434 637,435 637,436C636,437 635,439 635,440C634,441 634,442 634,444C633,445 633,447 632,448" stroke-width="3.1"/><path d="M631,295C630,296 629,297 627,297C626,298 625,298 624,298C622,299 621,299 620,300C619,300 617,301 616,302C615,302 614,303 613,304C611,304 610,305 609,306C608,307 607,308 606,309C605,310 604,310 603,311C602,312 601,313 600,314C599,314 597,315 597,316" stroke-width="1.9"/><path d="M615,369C614,370 612,371 611,371C610,372 609,373 608,374C607,375 606,376 605,377C604,378 603,380 603,381C602,382 601,383 601,384C600,385 600,387 599,388C598,389 597,389 596,390C595,391 594,392 593,393C592,393 591,394 590,395C589,395 587,396 587,397" stroke-width="2.8"/><path d="M789,382C789,383 791,384 792,384C794,385 795,385 796,386C797,387 798,387 799,388C800,389 801,390 802,390C803,391 804,392 804,393C805,394 806,396 807,397C808,398 808,399 809,400C810,401 811,402 812,403C814,404 815,404 816,405C817,406 818,406 819,407C821,408 822,408 823,409C824,410 826,411 826,411" stroke-width="2.8"/><path d="M699,310C698,310 697,311 696,311C694,312 693,312 692,313C691,313 689,313 688,313C687,313 685,313 684,314C683,314 681,314 680,315C679,315 677,316 676,316C675,317 674,318 673,319C672,320 670,321 670,322" stroke-width="3.2"/><path d="M637,294C637,294 634,294 633,295C632,295 630,296 629,296C628,297 627,298 625,298C624,299 623,300 622,301C621,302 620,302 619,303C618,304 617,304 616,305C615,305 613,306 612,306C611,306 610,307 608,307C607,307 606,307 604,307C603,308 602,308 600,309C599,309 597,310 596,310" stroke-width="2.0"/><path d="M643,299C642,300 640,300 639,301C638,302 636,303 635,304C634,305 633,306 633,307C632,308 631,309 630,310C630,311 629,312 628,313C627,314 626,315 625,315C624,316 623,316 622,317C621,317 619,318 618,318C617,319 615,319 614,319" stroke-width="3.1"/><path d="M672,275C672,276 670,276 669,276C667,276 666,276 665,276C664,276 662,276 661,276C660,276 658,276 657,276C655,276 654,276 653,276C651,276 650,277 648,277C647,277 645,278 645,279" stroke-width="3.2"/><path d="M638,343C638,343 636,344 635,345C634,346 632,346 631,347C630,348 629,349 628,350C627,351 626,352 626,354C625,355 624,356 624,357C623,358 622,360 622,361" stroke-width="2.7"/><path d="M661,306C660,306 659,307 657,308C656,308 655,308 654,309C652,309 651,310 650,310C648,311 647,312 646,312C645,313 644,314 643,315C642,316 640,318 640,318" stroke-width="2.4"/><path d="M763,312C764,312 766,312 767,312C768,313 769,313 770,314C771,315 772,316 773,316C774,317 775,318 776,319C777,320 779,321 780,322C781,322 782,323 784,323C785,324 787,324 788,324C789,324 791,324 792,324C793,324 795,324 796,325C797,325 798,325 799,326C800,326 801,327 802,328C803,329 805,330 805,330" stroke-width="3.1"/><path d="M786,352C787,353 788,354 789,355C789,356 790,358 791,359C792,360 793,361 795,361C796,362 797,363 798,363C800,364 801,364 802,365C803,365 805,366 806,366C807,367 808,367 809,368C810,369 811,370 812,371C812,371 813,373 814,374" stroke-width="3.0"/><path d="M656,340C655,341 654,342 653,343C652,344 651,344 650,345C649,346 648,347 647,348C646,349 645,350 644,351C643,352 642,352 641,353C640,354 639,355 638,355C637,356 635,357 634,358C633,358 632,360 631,360" stroke-width="3.0"/><path d="M745,398C745,398 746,400 747,401C747,402 747,404 748,405C748,406 748,407 748,409C748,410 749,411 749,413C749,414 750,415 751,417C751,418 752,419 753,420C754,421 755,422 756,423C757,424 758,425 759,426C760,427 760,428 761,429C762,430 763,432 763,432" stroke-width="2.3"/><path d="M664,392C664,392 663,394 662,395C661,396 660,396 659,397C658,398 657,398 656,399C654,399 653,400 652,400C651,401 649,402 648,403C647,404 646,405 645,406C644,407 644,408 643,410C643,411 642,412 642,414C641,415 640,417 640,417" stroke-width="3.1"/><path d="M774,372C775,372 776,373 777,374C778,375 779,376 780,377C780,378 781,380 782,381C783,382 784,383 785,383C786,384 787,385 789,386C790,387 791,387 792,388C793,389 795,390 796,390" stroke-width="1.7"/><path d="M641,288C640,288 638,288 637,288C636,288 634,288 633,288C632,288 630,288 629,288C627,289 626,289 624,289C623,290 622,291 621,292C620,292 619,293 618,294C617,295 616,296 615,297C614,298 613,298 612,299C611,300 609,300 608,300C607,301 605,301 604,301" stroke-width="3.0"/><path d="M754,312C754,312 756,313 757,314C758,315 759,316 760,317C762,317 763,318 764,318C765,319 767,319 768,320C769,320 770,321 771,321C773,322 774,323 775,323C776,324 777,325 777,326C778,327 779,328 780,329" stroke-width="2.2"/><path d="M734,274C734,274 736,274 738,274C739,274 741,273 742,273C743,273 745,272 746,272C747,272 748,272 749,272C751,272 752,273 753,273C754,274 756,275 756,275" stroke-width="1.9"/><path d="M795,382C795,382 796,384 797,385C798,386 799,387 800,388C801,389 803,390 804,390C805,391 806,392 808,392C809,393 810,393 811,394C812,395 813,395 814,396C815,397 817,398 817,399" stroke-width="2.2"/><path d="M738,435C738,436 739,438 740,439C740,440 741,441 742,442C742,443 743,445 744,446C744,447 745,448 745,449C746,450 746,452 746,453C746,454 746,455 747,457C747,458 747,459 747,461C747,462 747,463 747,465C748,466 748,467 749,469C749,470 750,471 750,473C751,474 752,475 753,476C753,477 754,479 755,480" stroke-width="2.4"/><path d="M641,346C640,346 639,348 638,349C637,350 637,351 636,352C635,353 634,354 634,355C633,356 632,357 631,358C630,359 629,360 628,361C627,362 626,362 625,363C624,364 623,365 622,366C621,366 620,367 619,368C618,369 617,371 616,372C615,373 615,374 614,375C613,377 613,378 612,379C612,380 611,382 610,383" stroke-width="2.6"/><path d="M662,352C661,352 660,354 660,355C659,356 658,358 658,359C657,360 657,361 656,362C655,363 655,364 654,365C653,366 652,367 651,367C650,368 649,369 647,369C646,370 645,370 644,371C643,372 641,373 641,374" stroke-width="2.4"/><path d="M741,307C742,307 743,308 745,308C746,309 747,309 748,310C749,310 750,311 751,312C752,313 753,313 755,314C756,315 757,316 758,317C759,317 760,318 761,319C763,319 765,320 765,320" stroke-width="1.9"/><path d="M695,303C694,303 693,304 691,305C690,305 689,306 688,306C687,306 685,307 684,307C683,307 681,308 680,308C679,309 677,309 676,310C675,310 673,311 673,311" stroke-width="2.8"/><path d="M640,415C640,415 638,416 637,417C636,418 635,419 634,420C633,421 633,422 632,424C631,425 631,426 630,428C630,429 629,430 629,432C629,433 629,434 629,436C628,437 628,438 628,439C627,441 627,442 626,443C626,444 625,445 624,446C623,447 622,448 621,448C620,449 619,450 618,452C618,453 617,454 616,455C615,456 615,458 614,459" stroke-width="3.2"/><path d="M788,393C789,394 790,396 791,396C792,397 793,398 795,399C796,400 797,400 798,401C800,402 801,402 802,403C803,403 804,404 805,405C806,405 807,407 808,407" stroke-width="1.6"/><path d="M795,391C795,391 797,393 798,393C799,394 800,395 801,395C802,396 803,397 804,398C805,399 805,400 806,401C806,402 806,404 807,405" stroke-width="2.7"/><path d="M732,447C732,447 733,449 733,451C732,452 732,453 732,455C732,456 732,457 732,459C732,460 732,461 732,463C732,464 732,466 732,467C733,468 733,470 733,471C734,472 734,474 734,475C735,476 735,477 735,479C735,480 736,482 736,483" stroke-width="2.7"/><path d="M743,344C744,345 745,347 746,348C746,349 747,350 748,351C749,352 750,354 751,355C752,356 753,356 754,357C755,358 756,359 758,359C759,360 760,360 761,361C762,362 763,362 764,363C765,364 766,365 766,366C767,367 768,369 768,369" stroke-width="2.7"/><path d="M698,453C698,454 697,456 696,457C695,458 694,459 694,460C693,461 692,462 691,463C691,465 690,466 690,467C689,469 689,470 689,472C689,473 689,474 688,476C688,477 688,478 688,480C688,481 688,482 688,483C687,484 687,485 686,487C686,488 685,489 684,490C683,491 682,492 682,493C681,494 680,496 679,496" stroke-width="2.1"/><path d="M781,386C781,387 782,389 782,390C783,391 783,392 784,394C785,395 786,396 787,397C788,398 789,399 790,400C791,401 793,401 794,402C795,403 796,403 797,404C798,405 799,405 800,406C801,407 801,408 802,409C803,410 803,411 804,413C804,414 804,415 805,416C805,418 806,419 807,420C807,422 809,423 809,424" stroke-width="1.8"/><path d="M722,303C722,303 724,304 725,305C727,305 728,306 729,306C731,306 732,307 733,307C735,307 736,307 737,308C738,308 740,308 741,309C742,309 743,310 744,311C745,312 745,313 746,314C747,315 748,316 749,317C750,318 751,319 752,320C753,321 754,322 755,322C756,323 758,324 759,324C760,325 762,325 763,326" stroke-width="2.1"/><path d="M716,316C716,316 718,316 719,316C721,316 722,317 723,317C724,318 725,318 726,319C728,320 729,320 730,321C731,322 733,322 734,323C735,323 737,323 738,323C739,324 741,324 742,324C744,324 745,323 746,323C748,323 750,324 750,324" stroke-width="2.7"/><path d="M678,417C678,417 678,419 678,421C678,422 678,423 678,424C677,426 677,427 677,428C676,429 676,430 675,432C675,433 674,434 673,435C673,437 672,438 672,439C672,441 671,442 671,443C671,445 671,447 671,447" stroke-width="2.1"/><path d="M687,303C687,304 685,305 684,305C683,306 682,306 681,307C679,307 678,307 677,308C676,308 674,308 673,309C672,309 670,309 669,309C668,310 666,310 665,311C664,311 662,312 661,313C660,313 659,314 658,315C657,316 656,317 655,318C654,319 653,319 652,320C651,321 650,322 648,322C647,323 646,324 645,324" stroke-width="2.3"/><path d="M644,336C643,336 642,337 640,337C639,338 638,338 637,339C635,339 634,340 633,341C632,341 630,342 629,343C628,344 628,346 627,347C626,348 625,350 625,350" stroke-width="3.1"/><path d="M741,313C742,314 743,315 744,316C746,316 747,317 748,317C750,318 751,318 753,318C754,319 755,319 757,319C758,319 759,319 761,319C762,319 763,319 764,319C765,320 766,320 767,321C769,322 769,322 770,323C771,324 772,325 773,326C774,327 775,328 776,329C777,330 779,331 779,332" stroke-width="2.7"/><path d="M747,411C747,412 748,414 748,415C748,416 748,418 748,419C748,420 748,422 748,423C748,424 749,426 749,427C749,428 750,430 750,431C751,432 752,433 752,435C753,436 754,438 754,438" stroke-width="1.6"/><path d="M665,345C664,345 663,346 661,347C660,348 659,349 658,350C657,351 656,352 655,353C654,354 653,355 652,356C652,357 651,358 650,359C650,361 649,362 648,363C648,364 647,365 647,366C646,368 645,369 645,370C644,371 643,372 642,373C641,374 641,375 640,376C639,377 638,378 637,379C636,380 635,382 635,382" stroke-width="2.1"/><path d="M765,361C766,362 767,363 768,364C769,365 770,365 771,366C772,367 773,368 773,369C774,370 775,371 776,372C776,374 777,375 777,376C778,377 778,378 779,380C780,381 780,382 781,383C782,384 783,385 784,387C784,388 785,389 786,390C787,391 788,391 789,392C790,393 791,395 792,395" stroke-width="1.8"/><path d="M757,424C757,425 758,427 758,428C759,429 760,431 760,432C761,433 762,434 763,435C764,436 765,437 766,438C767,439 768,439 769,440C770,441 771,442 771,443C772,444 773,446 773,447" stroke-width="2.3"/><path d="M652,294C651,294 649,294 648,294C647,294 645,294 644,294C643,294 641,295 640,295C638,295 637,296 636,297C634,297 633,298 632,299C631,300 630,301 629,302C628,303 627,304 626,305C625,305 624,306 623,307" stroke-width="2.9"/><path d="M704,452C704,453 703,454 702,455C702,457 701,458 700,459C700,460 699,462 699,463C698,465 698,466 698,467C698,469 699,470 699,472C699,473 699,475 699,476" stroke-width="2.8"/><path d="M763,382C763,383 764,384 765,385C766,386 768,387 769,388C770,389 771,389 772,390C773,391 774,392 775,393C776,393 777,394 778,395C778,396 779,397 780,398C780,400 781,401 782,402C782,403 783,404 784,405C784,407 785,408 786,409C787,410 788,411 789,412C790,413 791,414 792,415" stroke-width="3.1"/><path d="M702,442C702,443 702,445 702,446C702,447 702,449 702,450C702,451 701,452 701,453C701,454 700,455 699,457C699,458 698,459 697,460C696,461 695,462 695,463C694,465 694,466 693,467C693,469 693,470 692,472C692,473 692,474 692,476C692,477 693,478 693,480C692,481 692,482 692,483C692,485 691,486 691,487" stroke-width="1.8"/><path d="M657,296C656,296 654,295 653,295C651,295 650,295 649,295C647,295 646,295 644,296C643,296 641,297 640,297C639,298 638,299 637,300C636,300 635,301 634,302C632,303 631,303 630,304C629,304 628,305 627,305C626,305 624,305 623,305C622,305 620,305 619,305C618,305 616,305 615,305C613,306 612,306 611,307C609,307 608,308 607,309" stroke-width="2.2"/><path d="M636,387C636,388 634,389 634,390C633,392 632,393 631,394C630,395 630,397 630,398C629,399 629,401 629,402C628,403 628,405 628,406C627,407 627,408 627,409C626,411 625,412 625,413C624,414 623,415 622,416C621,417 621,417 620,419C619,420 618,421 617,422C616,423 615,425 615,425" stroke-width="2.6"/><path d="M765,373C765,373 767,374 768,375C768,376 769,377 770,378C771,380 771,381 772,382C773,383 773,384 774,385C775,386 776,388 777,389C778,390 779,391 780,391C781,392 782,393 783,394C784,395 785,396 786,396C787,397 788,398 789,399C790,400 791,401 791,402" stroke-width="1.6"/><path d="M783,387C783,388 783,390 784,391C784,392 785,394 786,395C787,396 788,397 789,398C790,399 791,400 792,400C793,401 794,402 795,403C796,404 796,405 797,406C797,407 798,408 798,409C798,411 798,413 798,413" stroke-width="1.8"/><path d="M735,327C736,328 737,329 738,330C739,331 740,332 742,333C743,333 744,334 745,335C747,335 748,335 749,336C751,336 752,336 753,337C755,337 756,337 757,337C758,338 759,338 760,339C761,340 762,340 763,341C764,342 765,343 765,344C766,345 767,347 768,348C769,349 770,350 770,351" stroke-width="2.5"/><path d="M760,317C761,317 763,318 764,319C765,320 766,321 767,322C768,322 769,323 770,324C771,325 773,326 774,326C775,327 776,327 778,328C779,328 781,328 782,329C783,329 784,329 786,329C787,330 788,330 789,331C790,331 791,332 792,332C793,333 794,334 795,335C796,336 798,337 798,338" stroke-width="2.3"/><path d="M614,344C614,344 612,345 611,346C610,347 609,347 607,348C606,349 605,350 604,351C603,352 602,353 601,354C600,355 600,356 599,358C598,359 598,360 597,361C597,362 596,364 595,365" stroke-width="1.5"/><path d="M689,278C688,279 686,279 685,279C683,280 682,280 681,281C680,281 678,282 677,282C676,283 675,284 673,284C672,284 671,285 670,285C669,285 667,286 666,286C665,286 663,286 662,286C661,287 659,287 658,287" stroke-width="1.5"/><path d="M749,430C749,431 750,433 750,434C751,436 752,437 752,438C753,439 754,440 755,441C756,442 757,443 758,444C759,445 760,446 761,447C762,447 763,449 763,450" stroke-width="1.7"/><path d="M783,328C784,328 786,329 787,329C788,330 789,330 790,331C791,332 792,332 793,333C794,334 795,335 796,336C797,337 798,338 799,339C800,340 801,340 803,341C804,341 805,342 807,342C808,343 809,343 811,343C812,343 813,344 814,344C816,344 817,345 818,346" stroke-width="2.3"/><path d="M706,423C706,423 706,425 706,427C706,428 706,430 706,431C706,432 706,434 706,435C707,437 707,438 708,439C708,441 709,442 710,443C710,444 711,445 712,446C713,447 713,448 714,450C714,451 715,452 715,453C715,454 715,456 715,457" stroke-width="1.9"/><path d="M723,314C723,314 725,315 726,315C728,315 729,316 731,316C732,316 734,316 735,316C736,315 738,315 739,315C740,315 741,315 743,315C744,316 745,316 746,316C747,317 748,317 749,318C750,319 751,320 752,320C753,321 754,322 756,323C757,324 759,325 759,325" stroke-width="2.6"/><path d="M628,418C628,418 626,419 625,420C624,421 623,422 622,423C621,424 620,425 620,426C619,428 618,429 617,430C617,431 616,432 615,433C615,434 613,436 613,437" stroke-width="1.9"/><path d="M607,374C607,374 605,376 604,377C603,378 602,379 602,380C601,381 600,382 599,383C598,384 598,385 597,386C596,387 595,388 594,389C593,389 592,390 591,390C590,391 588,392 587,392C586,393 585,393 583,394C582,395 581,396 580,396" stroke-width="2.9"/><path d="M757,428C757,429 758,431 759,432C760,433 761,434 761,435C762,436 762,437 763,438C763,440 764,441 764,442C764,443 765,444 765,446C765,447 765,448 765,450C765,451 765,452 766,454C766,455 766,457 767,458C767,459 768,460 769,462C769,463 770,464 771,465C771,466 772,468 773,469" stroke-width="2.6"/><path d="M783,354C783,354 784,356 785,357C786,358 786,359 787,361C788,362 789,363 790,364C791,365 792,366 793,367C795,367 796,368 797,368C798,369 800,369 801,370C802,370 803,371 804,372C805,372 806,373 807,374C808,375 809,377 809,377" stroke-width="2.8"/><path d="M697,303C697,303 695,304 694,305C693,305 692,306 691,306C689,307 688,307 687,308C686,308 684,308 683,309C682,309 680,310 679,310C678,311 677,311 675,312C674,313 673,314 672,314C671,315 670,316 669,317C668,318 667,319 666,320C665,321 664,321 663,322C662,323 660,324 659,324" stroke-width="2.3"/><path d="M650,415C649,416 649,417 648,419C648,420 647,421 646,422C646,423 645,424 644,425C643,426 643,427 642,428C641,430 640,431 640,432C639,433 638,434 638,436C637,437 637,438 636,440C636,441 636,442 635,444C635,445 635,446 634,447C634,449 633,450 633,451" stroke-width="2.5"/><path d="M690,292C689,292 688,293 686,293C685,294 684,295 683,296C682,296 681,297 679,298C678,298 677,299 676,299C675,300 674,300 673,300C671,300 670,300 669,300C668,300 666,300 665,300C664,299 662,299 661,299" stroke-width="2.9"/><path d="M775,405C775,406 776,408 777,409C777,410 778,412 778,413C779,414 779,415 780,417C781,418 782,419 783,420C784,421 785,422 786,423C787,423 788,424 790,425C791,426 792,426 792,427C793,428 795,430 795,430" stroke-width="2.0"/><path d="M744,390C745,390 746,392 746,393C747,394 748,395 749,396C750,397 750,398 751,400C752,401 752,402 753,403C753,404 754,405 754,406C754,408 754,409 755,410C755,411 755,413 755,414C755,415 755,417 755,418C756,420 756,421 757,422C757,424 758,425 758,426C759,427 760,428 761,430C761,431 762,432 763,433C763,434 764,436 764,436" stroke-width="1.7"/><path d="M686,424C686,425 685,427 685,428C685,430 684,431 684,432C683,433 683,434 682,436C682,437 681,438 681,439C680,441 680,442 680,444C679,445 679,446 679,448C679,449 679,450 679,452C679,453 679,454 679,456C679,457 679,458 679,460C679,461 679,462 678,463C678,464 677,466 677,467C677,468 676,470 675,470" stroke-width="1.9"/><path d="M653,324C652,325 651,326 650,327C649,328 648,329 647,330C647,332 646,333 645,334C645,335 644,336 643,337C643,338 642,339 641,340C640,341 639,341 638,342C637,342 635,343 634,343C633,344 631,345 631,345" stroke-width="1.7"/><path d="M660,366C659,366 658,368 658,369C657,370 656,371 655,371C654,372 653,373 652,373C651,374 649,374 648,375C647,376 646,376 645,377C643,378 642,379 641,380C640,381 639,383 639,383" stroke-width="1.7"/><path d="M748,373C748,374 750,375 750,376C751,377 752,378 753,379C754,380 755,381 756,382C757,383 758,384 759,385C760,386 761,387 762,387C763,388 764,389 765,390C766,391 767,393 767,393" stroke-width="2.9"/><path d="M699,288C698,288 696,288 695,288C693,289 692,289 691,289C689,290 688,290 687,291C685,291 684,292 683,292C682,293 680,293 679,293C678,294 677,294 676,294C674,294 673,294 672,294C671,294 669,294 668,294C667,294 665,294 664,294C662,294 661,294 660,295C658,295 656,296 656,296" stroke-width="2.0"/><path d="M735,408C735,409 735,411 735,412C735,413 736,415 736,416C737,418 737,419 738,420C739,421 740,422 741,423C742,424 743,426 744,426" stroke-width="2.2"/><path d="M660,376C659,377 659,379 658,380C658,381 658,383 657,384C657,385 657,386 656,387C656,388 655,389 654,390C653,391 653,392 652,393C651,394 649,394 648,395C647,396 646,397 645,398C644,399 643,400 642,401C641,402 641,404 640,405C640,406 640,408 640,409C639,411 639,412 639,413C639,414 639,416 638,417C638,418 637,420 636,420" stroke-width="1.6"/><path d="M635,316C634,316 632,317 631,317C630,318 628,318 627,319C626,319 625,320 624,321C622,321 621,322 620,323C619,324 618,325 617,326C616,327 614,328 614,328" stroke-width="2.8"/><path d="M703,281C703,281 701,282 700,283C699,283 698,284 697,284C695,284 694,284 693,284C692,284 690,283 689,283C688,283 686,283 685,283C683,283 682,283 680,284C679,284 678,285 676,285C675,286 674,287 673,288C672,289 671,289 670,290C669,291 668,291 667,292C665,292 664,293 663,293" stroke-width="1.7"/><path d="M662,440C662,440 662,442 662,444C662,445 662,446 662,448C662,449 661,450 661,451C661,452 660,454 660,455C659,456 658,457 658,458C657,459 656,460 656,462C655,463 654,465 654,465" stroke-width="2.3"/><path d="M632,367C631,368 630,369 629,370C629,372 628,373 627,374C626,375 626,376 625,377C624,377 623,378 622,379C621,380 620,380 619,381C618,382 616,383 615,383C614,384 613,385 612,386C611,387 610,388 609,389C608,390 607,391 606,392" stroke-width="1.8"/><path d="M649,417C649,417 648,419 647,420C647,421 646,423 645,424C645,425 644,426 644,428C643,429 643,430 642,432C642,433 642,434 642,436C641,437 641,439 641,439" stroke-width="2.4"/><path d="M665,298C665,299 663,299 662,300C660,300 659,301 658,301C657,301 656,301 654,301C653,301 652,301 651,301C649,301 648,301 646,301C645,301 644,300 642,301C641,301 639,301 638,302C637,302 635,304 634,304" stroke-width="2.4"/><path d="M705,266C705,266 703,267 702,268C701,268 700,269 699,269C698,269 696,269 695,269C694,269 693,268 691,268C690,268 689,267 687,267C686,267 685,267 683,267C682,267 680,267 679,267C677,268 676,268 675,269C674,270 672,270 671,271C670,272 668,272 668,273" stroke-width="2.6"/><path d="M660,371C660,371 659,373 659,374C658,375 657,376 656,377C655,378 654,379 654,380C653,381 652,382 651,383C650,383 649,385 648,386C647,387 646,389 646,389" stroke-width="3.2"/><path d="M643,430C643,430 643,433 643,434C643,435 643,437 643,438C643,439 643,440 642,442C642,443 642,444 641,445C641,446 640,447 640,448C639,449 638,450 637,451C636,452 635,453 634,454C634,455 633,457 632,458C631,459 631,461 631,462C630,464 630,466 630,466" stroke-width="2.0"/><path d="M642,399C641,399 640,401 639,402C639,403 638,404 637,405C636,406 636,408 635,409C634,410 634,411 633,413C633,414 632,415 632,417C632,418 631,419 631,420C631,422 630,423 630,424C630,425 629,427 629,428C628,429 627,431 627,431" stroke-width="2.5"/><path d="M768,432C768,432 770,434 770,435C771,436 772,437 773,438C773,439 774,440 775,441C775,442 775,443 776,445C776,446 777,447 777,448C777,450 778,451 778,452C779,454 780,455 780,456C781,457 782,458 783,459C784,461 785,462 785,463" stroke-width="3.0"/><path d="M610,371C609,372 608,373 607,374C606,375 605,375 604,376C603,377 602,377 601,378C600,378 598,379 597,379C596,380 595,380 593,381C592,382 591,382 590,383C589,384 587,385 586,386C586,387 585,388 584,389C583,390 582,391 581,392C581,393 580,394 579,395C578,396 576,397 576,397" stroke-width="1.6"/><path d="M743,424C744,424 745,426 746,427C747,428 748,429 749,430C750,431 751,431 752,432C753,433 753,434 754,435C755,436 755,437 756,438C756,440 756,441 757,442C757,443 757,445 757,446C757,447 758,449 758,450" stroke-width="1.8"/><path d="M785,303C785,304 787,305 788,306C789,306 791,307 792,307C793,308 795,308 796,309C797,310 798,310 799,311C800,311 801,312 802,313C803,313 804,314 805,315C806,316 807,317 808,318C808,319 809,320 810,321C811,322 812,324 813,324" stroke-width="2.0"/><path d="M687,284C686,284 684,285 683,285C682,285 681,286 679,286C678,287 677,287 675,287C674,288 673,289 672,289C670,290 669,291 668,292C667,292 666,293 665,294C664,295 663,296 662,296C661,297 660,298 659,299C657,299 656,300 655,301C654,301 653,302 652,302C650,303 649,303 648,304C647,304 645,305 644,306C643,306 641,307 641,308" stroke-width="2.1"/><path d="M652,402C652,403 651,405 651,406C650,407 650,408 649,409C648,411 648,412 647,413C646,414 646,415 645,417C644,418 644,419 643,420C643,422 642,424 642,424" stroke-width="3.1"/><path d="M735,322C736,322 738,323 739,324C741,324 742,324 743,324C745,325 746,325 748,325C749,325 750,325 751,325C753,325 754,325 755,325C756,326 758,327 759,327" stroke-width="2.5"/><path d="M683,410C683,411 682,413 682,414C682,415 682,417 682,418C682,419 682,420 682,422C681,423 681,424 680,425C680,426 679,427 678,428C678,430 677,431 676,432C676,433 675,434 675,436C674,437 674,438 673,440C673,441 673,443 673,444C673,445 673,447 673,448" stroke-width="2.7"/><path d="M672,303C671,304 669,304 668,305C667,305 666,306 665,306C663,306 662,306 661,306C660,307 658,307 657,307C656,307 654,307 653,307C651,307 649,308 649,308" stroke-width="1.6"/><path d="M621,379C621,379 619,380 618,381C617,382 616,383 615,384C614,385 614,386 613,388C612,389 611,390 611,391C610,392 609,393 609,395C608,396 607,397 607,398C606,399 605,400 605,401C604,402 603,403 602,404C601,405 600,406 599,407C598,408 597,409 596,410C596,411 595,412 594,413C593,414 592,416 591,416" stroke-width="2.8"/><path d="M794,316C794,316 796,317 797,317C799,318 800,318 801,319C802,319 803,320 803,321C804,322 805,323 806,324C807,325 808,327 809,327" stroke-width="2.7"/><path d="M777,296C778,296 780,296 781,297C782,297 783,298 784,298C785,299 786,300 787,301C788,302 788,303 789,304C790,305 791,306 793,307C794,307 795,308 796,309C798,309 799,310 800,310C802,310 803,310 804,311C806,311 807,311 808,311C809,312 811,312 812,313C813,313 814,315 815,315" stroke-width="2.2"/><path d="M706,440C706,441 706,443 706,444C707,445 707,447 707,448C708,449 708,451 708,452C709,453 709,455 710,456C710,457 710,458 710,460C710,461 710,462 711,463C711,465 710,466 710,467C710,469 710,470 710,471C710,473 710,474 710,475C710,477 711,478 711,480C711,481 712,482 712,484C712,485 713,487 713,487" stroke-width="1.7"/><path d="M735,425C735,426 735,428 735,429C735,430 736,432 736,433C737,435 737,436 738,437C739,438 740,439 741,440C742,441 743,442 744,443C745,444 746,445 746,446C747,447 748,448 748,449C748,450 749,452 749,453C749,454 749,455 749,457C749,458 749,459 749,461C749,462 750,464 750,465C751,466 751,468 752,469C753,470 755,472 755,472" stroke-width="2.1"/><path d="M768,427C768,428 770,429 771,430C772,430 773,431 775,432C776,432 777,433 778,434C779,434 780,435 780,436C781,437 782,438 782,439C783,440 783,442 784,443C784,444 785,446 785,447" stroke-width="1.7"/><path d="M767,348C767,348 768,350 769,351C770,352 771,353 772,354C773,355 775,356 776,357C777,357 778,358 779,358C781,359 782,359 783,360C784,361 786,362 786,362" stroke-width="2.3"/><path d="M657,418C657,419 657,421 656,422C656,423 655,424 655,426C654,427 654,428 653,429C653,430 652,431 651,432C651,433 650,434 649,435C648,436 647,437 646,438C645,439 644,440 643,441C642,442 642,443 641,444C640,446 640,447 639,448C639,450 638,451 638,452C637,453 637,455 637,456C636,457 636,458 635,459C635,461 633,462 633,463" stroke-width="2.6"/><path d="M765,370C766,371 767,373 767,374C768,375 769,376 770,377C771,378 772,379 773,380C774,381 776,381 777,382C778,382 780,383 781,383C782,384 783,384 784,385C786,385 787,386 788,387C789,387 789,388 790,389C791,390 792,392 792,392" stroke-width="1.7"/><path d="M640,351C639,351 638,352 637,353C636,354 635,356 634,357C634,358 633,359 633,361C632,362 631,363 631,364C630,365 630,366 629,367C628,368 627,369 626,370C625,371 624,372 623,372" stroke-width="2.4"/><path d="M631,299C631,299 629,299 628,299C626,299 625,300 624,300C622,300 621,300 620,300C618,301 617,301 615,301C614,302 613,302 612,303C610,303 608,304 608,304" stroke-width="3.1"/><path d="M776,376C776,376 778,378 778,379C779,380 780,381 781,382C782,383 782,384 783,385C784,386 784,387 785,388C785,389 786,391 787,392C787,393 788,395 789,395" stroke-width="2.6"/><path d="M650,284C650,284 648,284 646,284C645,284 643,284 642,285C641,285 639,285 638,286C636,286 635,287 634,288C633,289 632,289 631,290C630,291 629,292 627,292C626,293 625,293 624,294C623,294 622,294 620,294C619,295 618,295 616,295C615,295 613,295 613,295" stroke-width="1.6"/><path d="M786,302C786,303 788,304 790,304C791,305 792,305 793,306C795,306 796,306 797,307C799,307 800,307 801,308C802,308 804,309 805,309" stroke-width="1.8"/><path d="M653,348C653,348 652,350 651,351C650,352 649,353 649,354C648,355 647,355 646,356C644,357 643,357 642,357C641,358 639,358 638,359" stroke-width="3.2"/><path d="M795,351C796,352 798,353 799,354C799,354 800,355 801,356C802,357 803,358 803,360C804,361 805,362 806,363C807,364 809,364 810,365C811,366 813,366 814,367C815,367 817,367 818,367C819,368 821,368 822,368C823,369 825,370 825,370" stroke-width="2.5"/><path d="M636,326C636,327 634,328 633,328C632,329 631,329 629,330C628,330 627,331 626,331C624,332 623,332 622,333C621,334 619,334 618,335C617,336 616,337 615,338C614,339 613,341 612,341" stroke-width="2.7"/><path d="M653,381C653,381 652,383 651,384C651,386 650,387 649,388C649,389 648,390 647,391C647,392 646,393 645,394C644,395 643,396 642,397C641,398 640,399 640,400C639,401 638,402 637,404C637,405 636,406 635,407C635,409 634,410 634,411C634,413 633,414 633,415C632,416 632,418 631,419" stroke-width="2.5"/><path d="M793,342C793,342 794,344 795,345C796,346 796,347 796,348C797,350 797,351 798,352C798,353 799,355 800,356C801,357 802,358 803,359C804,360 805,361 806,362C807,363 809,363 810,364C811,364 812,365 813,366C814,367 815,368 815,369C816,370 816,371 817,372C817,373 818,375 818,376" stroke-width="3.1"/><path d="M630,358C629,359 627,359 626,359C625,360 623,360 622,361C621,361 619,362 618,363C617,363 616,364 615,366C614,367 613,368 612,369C612,370 611,371 610,372C610,374 609,375 608,376C607,376 606,377 605,378C604,379 603,379 602,380" stroke-width="1.8"/><path d="M725,450C726,450 726,452 727,453C727,455 728,456 728,457C728,458 728,460 729,461C729,462 729,464 729,465C729,466 729,468 730,469C730,470 730,472 731,473C731,474 732,476 732,477C733,478 733,479 734,481C734,482 735,483 736,484C736,485 737,487 737,488C737,489 738,490 738,491C738,493 739,494 739,495C739,496 739,498 739,499" stroke-width="1.8"/><path d="M754,386C755,387 756,388 757,389C758,390 759,391 760,392C761,393 762,393 763,394C764,395 765,396 766,397C767,398 768,399 769,399C770,400 770,401 771,403C772,404 772,405 773,406C774,407 775,408 775,409C776,410 777,412 778,413" stroke-width="2.7"/><path d="M694,430C694,431 694,433 694,434C694,435 694,437 694,438C694,439 693,440 693,441C692,443 692,444 691,445C690,446 690,447 689,448C688,449 687,450 686,451C685,452 684,453 684,454C683,455 682,457 682,458" stroke-width="1.9"/><path d="M651,416C650,417 649,418 648,420C647,421 647,422 646,423C646,425 645,426 645,428C645,429 645,430 644,432C644,433 644,434 644,435C643,437 643,438 643,439C642,440 641,441 641,442C640,443 639,444 638,445C637,446 636,447 636,448C635,449 634,450 633,452C632,453 632,455 631,455" stroke-width="2.4"/><path d="M781,310C782,310 783,312 784,313C785,314 786,315 787,316C788,317 789,317 791,318C792,319 793,319 794,320C796,320 797,321 798,321" stroke-width="2.5"/><path d="M639,332C639,333 637,334 636,335C635,336 634,337 633,338C633,339 632,340 631,341C630,342 629,343 628,344C627,345 626,345 625,346C624,346 623,347 622,347C620,348 619,348 618,349C616,349 615,350 614,350C613,351 611,352 610,353C609,354 608,356 608,356" stroke-width="1.7"/><path d="M653,384C653,384 652,386 651,387C651,388 650,389 649,390C648,391 648,392 647,393C646,394 645,395 644,396C643,397 642,397 641,398C640,399 639,400 638,401C637,402 636,403 635,405C634,406 634,407 633,408C632,409 632,411 631,412" stroke-width="2.0"/><path d="M759,343C760,344 761,345 762,347C763,348 764,349 765,350C766,350 767,351 769,352C770,353 771,353 773,353C774,354 775,354 777,354C778,354 779,355 780,355C782,355 783,356 784,356C785,357 786,358 787,359C788,359 789,361 789,361" stroke-width="3.1"/><path d="M693,452C693,453 692,455 692,456C692,457 692,458 691,460C691,461 690,462 690,463C689,464 688,466 688,467C687,468 687,469 686,471C686,472 686,473 686,475C685,476 685,478 685,479C685,480 685,482 685,483C685,484 685,486 684,487C684,488 684,489 684,491C683,492 683,493 683,494C682,495 681,497 681,498C680,499 680,501 679,501" stroke-width="2.7"/><path d="M787,411C787,412 788,414 788,415C788,416 788,418 789,419C790,420 790,422 791,423C792,424 793,425 794,426C794,427 795,428 796,429C797,430 798,432 799,432" stroke-width="3.2"/><path d="M776,377C777,378 778,379 779,380C780,381 781,382 782,383C783,384 784,385 785,386C786,387 787,388 788,388C790,389 791,390 792,390C793,391 794,392 795,392C796,393 798,394 799,394C800,395 801,396 802,397" stroke-width="2.2"/><path d="M643,320C642,320 640,320 639,320C638,321 636,321 635,321C634,321 632,321 631,322C630,322 628,323 627,323C626,324 625,325 623,326C622,326 621,327 620,328" stroke-width="2.2"/><path d="M713,454C713,455 714,457 714,458C714,459 714,460 714,461C714,463 714,464 713,465C713,466 713,468 712,469C712,470 712,472 712,473C712,475 712,476 712,478C712,479 713,480 713,482C714,483 714,484 715,485C715,487 716,488 716,489C717,490 717,491 717,492C718,494 718,495 717,496C717,497 717,499 717,500" stroke-width="3.0"/><path d="M795,312C795,312 797,314 798,314C799,315 800,317 801,317C802,318 803,319 804,320C805,321 806,322 807,322C809,323 810,323 811,324C812,325 814,325 815,326C816,326 817,327 818,328C819,328 820,329 821,330C822,331 822,332 823,333C824,334 825,335 826,336C826,337 827,338 828,339C829,340 830,342 831,342C832,343 834,344 834,345" stroke-width="2.5"/><path d="M643,360C642,360 641,361 640,363C639,364 638,365 638,366C637,368 637,369 636,370C636,371 635,373 635,374C634,375 634,376 633,377C632,378 631,379 630,380C630,381 629,382 628,383C627,383 626,384 625,385C624,386 623,387 622,388C621,389 620,391 619,392C619,393 618,394 618,396C617,397 617,399 616,400" stroke-width="3.1"/><path d="M750,334C750,335 751,337 752,338C753,339 754,340 755,341C756,341 758,342 759,343C760,343 761,344 763,344C764,345 765,345 766,346C767,347 769,348 769,348" stroke-width="2.4"/><path d="M797,390C797,391 797,393 798,394C798,395 798,397 799,398C799,399 800,401 801,402C802,403 803,404 804,405C805,406 806,406 807,407C808,408 809,409 810,410C811,410 812,411 813,412C814,413 814,414 815,416C815,417 815,418 816,419C816,420 816,422 816,423C816,424 817,426 817,427C818,429 818,430 819,431C820,432 821,434 822,434" stroke-width="2.5"/><path d="M692,436C692,437 691,439 691,440C691,442 690,443 690,445C690,446 690,447 691,449C691,450 691,452 691,453C692,454 692,455 692,457C692,458 692,459 692,460C692,462 692,463 691,464C691,465 691,466 690,468C690,469 689,470 688,471C688,473 687,474 687,475C687,477 687,479 686,479" stroke-width="3.1"/><path d="M792,367C793,368 794,369 795,370C796,371 796,372 797,373C798,374 798,375 799,376C800,377 800,379 801,380C802,381 803,382 803,383C804,384 806,386 806,386" stroke-width="1.9"/><path d="M788,395C788,396 789,397 789,399C790,400 790,401 791,402C791,404 792,405 792,406C793,407 794,409 795,410C796,411 797,411 799,412C800,413 801,413 802,414C803,415 805,415 806,416C807,417 808,417 808,418C809,419 810,420 810,421C811,422 811,424 812,425" stroke-width="2.6"/><path d="M666,362C665,363 664,364 663,365C662,366 662,368 661,369C660,370 660,372 659,373C659,374 659,376 658,377C658,378 658,379 657,380C657,382 656,383 656,384C655,385 654,386 654,387C653,388 652,389 651,390C650,391 649,393 649,393" stroke-width="2.6"/><path d="M623,330C622,331 621,333 620,334C620,335 619,336 618,337C617,338 616,339 616,340C615,340 614,341 613,342C611,343 610,343 609,344C608,345 607,345 606,346C605,347 603,348 602,349C601,350 601,351 600,352C599,353 598,354 598,356C597,357 596,359 596,359" stroke-width="2.6"/><path d="M701,456C701,456 701,458 701,460C701,461 701,463 701,464C701,465 702,467 702,468C702,469 702,470 702,472C702,473 702,474 702,476C702,477 702,478 702,479C702,481 701,482 701,483C701,485 701,487 700,487" stroke-width="1.8"/><path d="M794,378C794,378 795,380 796,381C797,382 798,383 799,384C800,384 801,385 802,386C803,387 804,388 805,389C805,390 806,391 807,392C807,393 808,394 808,396C809,397 809,398 810,399C810,401 811,402 811,403C812,404 813,406 813,407" stroke-width="2.8"/><path d="M712,452C712,453 713,455 713,456C713,458 713,459 714,460C714,462 714,463 715,464C715,466 716,467 716,468C717,469 718,471 718,472C719,473 720,474 720,475C721,476 722,477 722,479C723,480 723,481 724,482C724,483 724,485 724,486C725,487 725,489 725,490C725,491 726,493 726,494" stroke-width="1.7"/><path d="M728,299C728,300 730,301 731,302C732,303 734,303 735,304C736,305 738,305 739,305C740,306 742,306 743,306C744,307 746,307 747,307" stroke-width="3.0"/><path d="M654,425C653,426 653,428 653,429C653,430 653,432 652,433C652,435 652,436 652,437C652,438 652,440 652,441C651,442 651,443 650,444C650,445 649,447 648,448C648,449 647,450 646,451" stroke-width="2.4"/><path d="M768,305C769,305 770,306 772,307C773,308 774,308 775,309C776,310 777,311 779,311C780,312 781,312 782,313C784,313 785,314 786,314C787,315 789,315 790,315C791,316 792,316 794,317C795,317 796,318 797,318C798,319 799,320 800,321C801,321 802,322 803,323C804,324 806,325 806,325" stroke-width="3.0"/><path d="M652,359C652,359 651,361 650,362C649,364 649,365 648,366C648,367 647,368 646,369C646,370 645,371 644,372C643,373 642,374 642,375C641,376 640,377 639,378C638,379 636,380 636,381" stroke-width="3.2"/><path d="M628,320C627,320 626,322 625,323C624,324 623,325 622,326C621,327 621,328 620,329C619,330 618,331 617,332C617,333 616,334 615,335C614,336 613,336 611,337C610,337 609,338 608,339" stroke-width="2.9"/><path d="M638,289C638,289 636,289 634,290C633,290 632,291 631,292C629,293 628,294 627,294C626,295 625,296 624,297C623,297 621,298 621,298" stroke-width="1.9"/><path d="M790,354C790,354 792,356 793,357C794,358 794,359 795,360C796,361 797,362 799,363C800,364 801,364 802,365C804,366 805,366 806,366C808,367 810,367 810,367" stroke-width="2.6"/><path d="M650,345C649,345 648,347 648,348C647,349 646,351 646,351C645,352 644,353 643,354C642,355 641,356 640,357C639,358 638,358 637,359C636,360 635,361 634,362C633,363 632,364 631,365C630,367 630,368 629,369C628,370 628,372 628,373C627,374 627,375 626,377C626,378 625,379 625,380C624,381 623,383 623,383" stroke-width="2.4"/><path d="M660,335C660,336 658,337 657,337C656,338 655,339 653,339C652,340 651,340 650,341C649,341 647,342 646,342C645,343 644,343 642,344C641,345 640,346 639,346C638,347 637,348 636,349C635,350 634,351 633,352C632,353 631,354 630,355C629,356 628,357 627,358" stroke-width="2.6"/><path d="M620,323C620,323 619,325 618,326C617,327 616,328 615,329C614,330 613,331 612,331C611,332 610,332 609,333C608,333 607,333 606,334C604,334 603,334 602,334C600,335 598,335 598,335" stroke-width="2.2"/><path d="M797,347C798,348 799,349 800,350C801,351 802,351 804,352C805,353 806,354 807,354C808,355 809,356 810,357C811,357 812,358 813,359C814,360 815,361 816,362C816,363 817,364 818,365C819,366 819,367 820,368C821,369 822,371 823,371" stroke-width="2.7"/><path d="M722,444C723,444 724,446 724,447C725,449 726,450 726,451C727,452 727,453 728,454C728,455 728,457 728,458C728,459 728,460 728,462C727,463 727,464 727,465C727,467 726,468 726,470C726,471 726,473 727,474C727,475 727,477 728,478C728,479 730,481 730,482" stroke-width="2.3"/><path d="M785,389C786,389 787,391 788,392C789,393 790,394 791,395C792,396 793,397 794,398C795,399 796,399 797,400C798,401 800,401 801,402C802,403 803,403 804,404C805,405 806,406 806,407C807,408 808,409 809,410C809,411 810,412 811,413C812,415 812,416 813,417C814,418 815,419 816,420" stroke-width="1.7"/><path d="M634,424C634,425 634,427 634,428C633,429 633,430 632,431C632,433 631,433 630,434C629,435 628,436 627,437C626,438 625,439 624,440C623,441 622,442 621,443C620,444 620,446 619,447C619,448 619,450 619,451C618,453 618,455 618,455" stroke-width="1.8"/><path d="M623,360C623,360 621,361 620,362C619,363 617,363 616,364C615,364 614,365 613,366C611,366 610,367 609,368C608,369 607,370 606,371C605,372 604,373 604,374C603,376 602,377 601,378C600,379 600,380 599,381C598,381 597,382 596,383C595,384 594,385 593,385C592,386 590,387 589,387C588,388 586,389 586,389" stroke-width="1.7"/><path d="M757,370C757,371 758,373 759,374C759,375 760,376 760,378C761,379 761,380 762,382C763,383 763,384 764,385C765,386 766,387 768,388C769,389 770,390 771,390C772,391 773,392 774,392C775,393 776,394 777,395C778,396 778,397 779,398C779,399 780,400 780,401C781,403 781,405 781,405" stroke-width="2.2"/><path d="M696,262C696,263 694,263 693,264C692,264 690,264 689,264C688,264 686,264 685,265C684,265 682,265 681,265C679,266 678,266 677,267C676,267 674,268 673,269C672,270 671,271 670,271C669,272 668,273 667,274C666,274 665,275 664,276C662,276 661,277 660,277C659,277 657,277 656,278" stroke-width="2.2"/><path d="M747,388C747,388 748,390 748,391C749,393 749,394 750,395C751,396 752,398 753,399C754,400 755,401 756,401C757,402 758,403 759,404C761,404 762,405 763,406C764,406 765,407 766,408C767,409 768,410 768,411" stroke-width="2.5"/><path d="M616,387C616,388 615,390 614,391C614,392 613,393 613,395C612,396 612,397 611,398C610,399 609,400 609,401C608,402 607,402 606,403C605,403 603,404 602,405C601,405 600,406 598,406C597,407 596,408 595,409C594,410 593,411 592,412C591,413 591,415 590,416C590,417 589,419 589,420" stroke-width="2.2"/><path d="M639,381C638,381 637,383 637,384C636,385 636,387 635,388C634,389 633,390 633,391C632,391 631,392 630,393C629,394 628,394 627,395C625,395 624,396 623,397C622,397 620,398 619,399C618,400 617,401 616,402C615,403 614,405 614,405" stroke-width="2.7"/><path d="M641,330C640,331 638,332 637,332C636,333 635,334 634,334C632,335 631,336 630,337C629,338 628,339 627,340C626,341 626,342 625,343C624,344 623,345 622,346C621,347 620,348 619,349C618,350 618,351 616,351C615,352 614,353 613,354" stroke-width="2.2"/><path d="M776,328C777,328 778,329 779,330C780,331 781,332 782,333C782,334 783,336 784,337C785,338 786,339 787,339C789,340 790,341 791,341C793,342 794,342 795,343C797,343 798,343 799,343C800,344 802,344 803,345C804,345 805,346 806,347C807,347 808,349 808,349" stroke-width="2.3"/><path d="M659,400C659,400 658,402 658,404C657,405 657,406 656,407C655,408 655,409 654,410C653,411 652,412 652,413C651,414 650,415 649,417C648,418 647,419 647,420C646,421 645,422 645,424C644,425 644,426 643,427C643,429 642,430 642,431C642,433 641,434 641,435" stroke-width="3.1"/><path d="M624,316C624,316 622,316 620,316C619,316 618,316 616,317C615,317 613,317 612,318C611,318 610,319 608,320C607,320 606,321 605,322C604,323 603,324 602,325C601,325 600,326 599,327C598,327 597,328 595,328C594,329 593,329 592,330C591,330 589,330 588,330C587,331 585,331 584,331C583,332 581,332 580,333C579,333 577,335 576,335" stroke-width="1.7"/><path d="M761,379C762,380 763,381 764,382C764,384 765,385 765,386C766,387 766,388 766,389C767,391 767,392 767,393C768,395 768,396 768,397C769,399 769,400 770,401C771,402 772,404 772,405" stroke-width="2.4"/><path d="M799,347C800,347 801,348 802,349C803,349 804,350 805,351C806,352 807,353 808,354C808,355 809,356 810,357C811,358 812,359 813,360C814,361 816,362 817,362C818,363 820,363 821,363" stroke-width="3.0"/><path d="M644,302C643,302 642,303 640,303C639,304 638,304 637,305C635,305 634,305 633,306C632,306 630,306 629,306C628,307 626,307 625,307" stroke-width="2.9"/><path d="M789,388C790,389 792,389 793,390C794,390 795,391 796,392C797,392 799,393 800,393C801,394 801,395 802,396C803,397 804,398 805,399C806,400 806,401 807,402C808,403 809,404 810,405C811,406 812,407 813,408C814,409 815,410 816,411C817,411 819,412 820,413C821,413 822,414 823,414C824,415 825,416 826,416C827,417 829,419 829,419" stroke-width="3.0"/><path d="M628,397C628,398 627,399 626,401C625,402 625,403 624,404C624,406 623,407 623,408C623,410 622,411 622,412C622,414 621,415 621,416C620,417 620,418 619,419C619,421 618,422 617,423" stroke-width="2.3"/><path d="M749,432C750,432 751,434 751,435C752,436 752,438 753,439C753,440 754,441 754,442C754,444 755,445 755,446C755,447 755,449 755,450C755,451 755,453 755,454C756,455 756,457 756,458C756,460 757,461 757,462C758,464 758,465 759,466C760,467 760,468 761,470C761,471 762,472 762,473C763,474 763,476 764,477" stroke-width="2.7"/><path d="M800,343C800,343 801,345 802,346C803,347 804,348 804,349C805,350 806,351 807,352C808,353 808,355 809,356C810,357 811,358 812,359C813,360 814,360 815,361C816,362 817,363 818,364C819,365 820,366 821,366C822,367 823,369 824,369" stroke-width="2.6"/><path d="M762,313C763,313 765,313 766,313C767,313 769,314 770,314C771,314 772,315 773,315C774,316 775,317 777,317C778,318 779,319 780,319" stroke-width="2.5"/><path d="M714,312C715,312 717,312 718,313C719,313 721,313 722,314C723,314 724,315 725,315C727,316 728,316 729,317C730,318 732,318 733,319C734,319 736,319 737,320C738,320 740,320 741,320C742,321 744,321 745,321C746,321 748,321 749,322" stroke-width="2.3"/><path d="M754,310C755,310 757,310 758,310C759,310 761,310 762,310C763,310 765,310 766,310C767,310 768,311 769,311C770,312 772,313 772,313" stroke-width="3.1"/><path d="M743,393C743,393 744,395 745,396C746,397 747,398 748,399C749,400 750,401 750,402C751,403 752,404 752,405C753,406 753,408 753,409C753,410 753,411 753,413C753,414 754,415 754,417C754,418 754,420 755,421C755,422 756,424 757,425C757,426 758,427 759,428C760,429 761,431 762,431" stroke-width="1.9"/><path d="M644,328C643,328 642,329 641,330C640,331 639,332 638,333C637,334 636,335 635,336C634,337 633,338 632,339C631,340 630,341 629,341C628,342 627,343 626,344C625,345 624,345 623,346C622,347 621,347 620,348C619,349 617,350 616,351C615,352 614,353 613,354" stroke-width="2.8"/><path d="M702,276C701,276 699,277 698,278C697,278 696,278 694,278C693,278 692,278 690,278C689,278 688,278 686,278C685,279 683,279 682,279" stroke-width="1.6"/><path d="M708,448C708,448 708,451 708,452C709,453 709,455 710,456C710,457 711,459 711,460C712,461 713,462 714,463C714,464 715,465 716,466C716,468 717,469 717,470C717,471 718,472 718,474C718,475 718,476 718,477C718,479 718,480 718,481C718,483 719,484 719,486C719,487 720,488 720,490C721,491 722,492 722,493C723,495 724,496 725,497" stroke-width="2.9"/><path d="M664,293C663,294 662,295 661,295C660,296 659,297 657,297C656,298 655,298 654,298C652,298 651,299 650,299C649,299 647,299 646,300C644,300 643,301 642,301C641,302 639,303 638,303C637,304 636,305 635,306C634,307 633,308 632,309C631,310 630,311 629,312C628,312 626,313 626,314" stroke-width="3.1"/><path d="M761,322C761,322 762,324 763,325C764,326 765,327 766,328C767,329 768,330 769,331C770,332 772,333 773,333C774,334 776,334 777,334C778,335 779,335 780,336C781,336 783,337 783,338C784,339 785,339 786,340C787,341 787,342 788,344C788,345 789,346 789,347C790,348 791,350 792,351C792,352 794,354 794,354" stroke-width="2.0"/><path d="M733,272C734,272 736,273 737,274C739,274 740,275 741,275C743,275 744,275 746,275C747,275 749,275 750,275C751,274 753,274 754,274C755,274 756,273 758,273C759,273 760,274 761,274C762,274 764,274 765,275C766,275 767,276 768,277C769,277 771,278 772,279" stroke-width="2.7"/><path d="M634,322C634,322 633,324 632,325C631,326 631,327 630,329C629,330 629,331 628,332C627,332 626,333 625,334C624,335 623,335 622,336C621,336 619,337 618,337C617,338 616,339 615,339C613,340 612,341 611,342C610,344 610,345 609,346C608,347 608,349 607,350C607,351 606,353 606,354" stroke-width="2.2"/><path d="M786,359C787,360 788,361 789,362C790,363 790,365 791,366C792,367 793,368 794,369C795,370 796,371 797,372C798,372 800,373 801,374C802,374 803,375 804,375C806,376 807,377 808,377" stroke-width="1.5"/><path d="M788,341C788,341 790,342 791,342C792,343 793,344 793,345C794,346 795,347 795,348C796,349 796,351 797,352C797,353 797,354 798,356C799,357 799,358 800,359C801,360 802,362 803,362C804,363 806,364 807,365" stroke-width="2.8"/><path d="M676,324C675,325 674,326 673,327C672,328 671,329 670,330C669,331 668,331 667,332C666,332 665,333 664,333C662,334 661,334 660,334C659,335 657,335 656,336C655,337 653,337 652,338C651,339 650,340 649,342C649,343 648,344 647,345C647,346 646,348 645,349C645,350 644,351 643,352C643,353 641,354 641,355" stroke-width="1.9"/><path d="M792,400C792,400 793,402 794,403C795,404 796,405 797,406C798,407 799,408 799,409C800,410 801,411 801,412C802,413 802,414 802,416C803,417 803,418 804,419C804,421 805,422 805,423C806,425 807,426 807,427" stroke-width="2.9"/><path d="M758,399C758,400 760,401 760,402C761,404 761,405 762,406C762,407 762,408 762,410C762,411 762,412 762,414C762,415 762,416 763,418C763,419 763,421 764,422C764,423 765,425 766,426C766,427 767,428 768,429C769,430 770,431 770,432C771,433 772,434 772,435C773,437 773,438 773,439" stroke-width="2.7"/><path d="M752,286C753,286 755,286 756,286C757,286 759,286 760,286C761,286 763,286 764,287C765,287 766,288 767,288C768,289 770,289 771,290C772,290 773,291 774,292C775,292 777,293 778,294C779,294 781,295 782,295C783,295 785,296 786,296C787,296 789,296 790,297C791,297 792,297 794,297C795,298 797,298 797,299" stroke-width="2.7"/><path d="M722,432C722,433 723,435 724,436C724,437 724,438 724,439C724,441 724,442 724,443C724,444 724,445 723,447C723,448 722,449 722,451C722,452 722,454 722,455C722,456 722,458 722,459" stroke-width="2.2"/><path d="M741,275C742,275 744,276 745,276C746,276 747,277 748,277C750,278 751,278 752,279C753,279 755,280 756,280C757,281 759,281 760,281C762,281 763,281 764,281C766,282 768,282 768,282" stroke-width="2.4"/><path d="M678,438C678,439 677,441 677,442C677,443 676,445 676,446C675,447 675,448 674,449C674,450 673,452 672,453C672,454 671,455 671,457C670,458 670,460 670,461C670,462 670,464 670,465C670,467 670,468 670,469C670,471 670,472 670,473" stroke-width="1.8"/><path d="M724,452C724,453 725,455 725,456C725,457 726,458 726,460C726,461 726,462 726,463C726,465 726,466 726,467C726,468 726,470 726,471C725,472 725,474 725,475C725,477 725,478 725,479C725,481 725,482 725,483C726,485 726,487 726,487" stroke-width="1.6"/><path d="M713,443C713,444 714,446 714,447C715,448 715,450 715,451C716,452 716,453 716,455C716,456 716,457 716,458C716,460 716,461 716,462C716,464 716,465 716,466C716,468 716,469 716,471C716,472 717,474 717,475" stroke-width="1.9"/><path d="M695,301C694,301 692,302 691,303C690,303 689,303 687,303C686,304 685,304 683,304C682,304 681,304 679,305C678,305 677,305 675,306C674,307 673,307 672,308C670,309 669,310 668,311C667,312 666,313 665,313C664,314 663,315 662,316" stroke-width="2.1"/><path d="M755,356C756,356 757,358 757,359C758,360 759,362 760,363C760,364 761,365 762,366C764,367 765,368 766,368C767,369 768,370 769,370C770,371 771,372 772,373C773,374 774,374 775,375C776,376 776,378 777,379" stroke-width="1.9"/><path d="M749,312C749,312 751,313 753,313C754,313 755,313 757,314C758,314 759,314 761,314C762,314 763,315 764,315C765,315 767,316 768,316C769,317 770,318 771,318C772,319 773,320 774,321C776,321 777,322 778,323C779,323 780,324 781,325C783,325 784,326 785,326C787,327 789,327 789,328" stroke-width="3.1"/><path d="M784,359C784,360 784,362 785,363C785,364 786,366 786,367C787,368 788,369 789,370C790,371 791,372 792,373C793,374 795,375 796,375C797,376 798,377 799,378C800,378 800,379 801,380C802,381 802,382 802,384C803,385 803,386 803,387C803,389 804,390 804,391C804,393 805,394 805,395C806,397 807,398 807,399" stroke-width="2.9"/><path d="M743,397C743,397 744,399 745,400C746,401 746,402 747,403C747,405 748,406 748,407C749,408 749,409 749,411C750,412 750,414 750,415" stroke-width="2.9"/><path d="M756,314C757,314 759,315 760,316C761,316 763,317 764,317C765,317 767,317 768,317C769,318 771,318 772,318C773,318 774,319 775,319C776,320 777,321 778,321C779,322 780,323 781,324C781,325 782,326 783,327C784,329 785,330 786,331C787,332 789,333 789,333" stroke-width="2.2"/><path d="M764,388C765,388 767,389 768,390C769,390 770,391 771,392C773,392 774,393 775,394C776,394 777,395 777,396C778,397 779,398 780,399C780,400 781,402 781,403C782,404 783,405 784,406C784,407 786,409 786,409" stroke-width="2.0"/><path d="M708,280C709,280 711,281 712,281C713,281 715,282 716,282C717,282 719,282 720,283C721,283 722,283 724,284C725,284 726,284 727,285C728,286 729,286 731,287C732,287 733,288 734,289C735,290 736,290 738,291C739,291 740,292 742,292C743,293 744,293 746,293C747,294 749,294 749,294" stroke-width="2.8"/><path d="M755,354C755,355 757,356 758,357C759,358 759,358 760,359C761,360 761,362 762,363C762,364 763,365 763,366C764,368 764,369 765,370C766,371 767,373 768,374C768,375 770,376 771,377C772,378 773,378 774,379C775,380 776,381 777,382C778,382 779,383 779,384C780,385 781,386 781,387C782,389 782,390 783,391" stroke-width="1.8"/><path d="M747,410C747,411 748,413 748,414C749,415 749,417 750,418C750,419 751,421 752,422C753,423 754,424 754,425C755,426 756,427 757,428C758,429 759,430 760,431C761,432 762,432 763,433C764,434 765,436 765,437" stroke-width="2.6"/><path d="M730,419C731,419 731,421 732,422C733,424 734,425 735,426C735,427 736,428 737,429C737,430 738,431 738,432C739,433 739,435 739,436C739,437 739,438 739,440C739,441 739,443 739,444" stroke-width="1.8"/><path d="M666,318C665,318 663,318 662,318C660,319 659,319 657,319C656,320 655,320 654,321C652,322 651,322 650,323C649,323 648,324 646,325C645,325 644,326 643,326C642,327 641,327 639,327C638,328 637,328 635,328C634,328 633,328 631,329C630,329 628,329 628,330" stroke-width="2.5"/><path d="M691,278C690,278 688,279 687,280C686,281 685,281 684,282C682,282 681,282 680,283C679,283 677,283 676,284C675,284 673,285 672,285" stroke-width="2.5"/><path d="M723,290C724,291 726,292 727,293C728,294 729,295 730,295C731,296 732,297 734,297C735,298 736,298 738,299C739,299 740,299 742,299C743,300 744,300 746,300C747,300 748,301 749,301C750,302 752,303 752,303" stroke-width="2.5"/><path d="M783,309C784,309 786,309 787,309C788,309 789,309 791,309C792,310 793,310 794,311C795,311 796,312 797,313C798,313 799,314 800,315C801,316 803,317 804,317C805,318 806,319 808,319C809,320 810,320 812,320C813,320 815,320 816,320" stroke-width="1.9"/><path d="M789,365C789,366 790,367 791,368C792,370 793,371 794,372C795,373 796,374 797,375C798,376 799,376 801,377C802,378 803,378 804,379C805,379 807,380 808,380C809,381 810,382 811,383C811,383 812,384 813,385C814,386 814,388 815,389C816,390 816,391 817,392C818,393 818,395 819,396C820,397 822,398 822,399" stroke-width="1.5"/><path d="M666,340C666,340 664,341 663,341C662,342 661,342 659,342C658,342 657,343 655,343C654,343 653,343 651,343C650,343 648,344 647,344C646,345 644,345 643,346C642,347 641,348 640,349C639,350 638,351 637,352C636,353 636,354 635,355C634,355 632,356 631,357" stroke-width="2.0"/><path d="M704,296C703,296 701,296 700,296C698,297 697,297 696,297C694,297 693,297 692,298C690,298 689,298 688,299C686,299 685,300 684,300C683,301 681,302 680,302C679,303 678,303 677,304C675,304 674,305 673,305C672,305 670,306 669,306C668,306 667,307 665,307C664,307 663,307 661,308C660,308 658,309 657,309" stroke-width="3.1"/><path d="M708,265C709,265 711,266 712,267C713,267 715,267 716,267C718,267 719,267 721,267C722,267 723,267 725,267C726,267 727,267 728,267C730,267 731,267 732,268C733,268 734,268 735,269C737,270 738,270 739,271C740,272 742,273 742,273" stroke-width="2.2"/><path d="M769,308C769,309 771,309 772,309C773,310 774,311 776,311C777,312 778,313 779,313C780,314 781,315 783,315C784,316 785,316 787,316C788,317 790,317 791,317C792,317 794,317 795,317C796,317 798,317 799,317C800,318 802,318 803,318" stroke-width="2.6"/><path d="M797,361C797,362 799,362 800,363C801,364 802,364 803,365C805,366 805,367 806,368C807,368 808,369 809,371C809,372 810,373 811,374C811,375 812,377 813,377" stroke-width="2.7"/><path d="M711,267C712,267 714,268 715,268C716,269 717,270 718,270C719,271 721,272 722,272C723,273 724,274 726,274C727,274 729,275 730,275C731,275 733,275 734,275C736,275 738,275 738,275" stroke-width="1.9"/><path d="M784,321C784,321 786,321 788,322C789,322 790,322 791,322C792,323 794,323 795,324C796,324 797,325 798,326C799,327 800,328 801,328C802,329 803,330 804,331C805,332 806,333 807,334C808,335 809,335 811,336C812,337 813,337 815,337C816,338 817,338 818,338C820,339 821,339 822,340C823,340 824,341 825,341C826,342 828,343 828,344" stroke-width="2.7"/><path d="M766,349C766,349 767,351 767,352C768,354 768,355 769,356C770,357 770,359 771,360C772,361 773,362 774,363C775,364 777,365 778,365C779,366 780,367 781,368C782,368 783,369 784,370C784,371 785,372 786,373C786,374 787,375 787,376C787,378 788,379 788,380C788,382 789,383 789,384C789,386 790,387 791,388" stroke-width="1.6"/><path d="M742,395C742,396 743,398 743,399C743,400 743,401 743,403C743,404 743,405 743,406C742,408 742,409 742,411C742,412 743,414 743,415C743,416 744,418 745,419" stroke-width="3.0"/><path d="M757,348C757,349 759,350 759,351C760,352 761,353 762,354C764,355 765,356 766,357C767,357 769,358 770,358C771,359 772,359 774,360C775,360 776,361 777,361C778,362 779,362 780,363C781,364 782,366 783,366" stroke-width="1.8"/><path d="M753,375C753,376 755,377 756,377C757,378 758,379 758,380C759,381 759,382 760,384C760,385 760,386 761,387C761,389 761,390 762,391C763,393 763,394 764,395C765,396 766,397 767,398C768,399 769,400 770,401C771,402 772,402 773,403C774,404 775,405 776,406C777,407 778,408 778,409C779,410 779,411 779,412C780,413 780,415 780,416" stroke-width="2.4"/><path d="M734,293C735,293 736,294 738,294C739,294 741,295 742,295C743,295 745,295 746,295C747,295 749,295 750,295C751,295 752,295 754,296C755,296 756,296 757,297C758,297 759,298 760,299C761,300 762,300 764,301C765,302 766,303 767,303" stroke-width="2.4"/><path d="M666,285C665,286 663,286 662,287C661,287 660,288 658,288C657,288 656,289 655,289C653,289 652,289 651,289C650,289 648,289 647,289C646,289 644,289 643,290C641,290 640,290 639,290C637,290 636,291 635,291C633,292 632,293 631,293C630,294 629,295 627,295C626,296 625,296 624,297C623,297 622,298 620,298C619,299 617,299 617,299" stroke-width="2.8"/><path d="M661,294C660,294 658,293 657,293C655,293 654,293 652,293C651,292 649,293 648,293C647,293 645,294 644,295C643,295 641,296 640,297" stroke-width="2.6"/></g>
<g stroke="#dccb46" stroke-opacity="0.95"><path d="M732,409C732,409 733,411 733,412C734,414 734,415 734,416C734,418 733,419 733,420C733,422 733,423 733,424C732,426 732,427 732,428C732,430 732,431 733,432C733,434 734,435 734,436C735,437 735,438 736,440C737,441 737,442 738,443C738,444 739,446 739,447C739,448 739,450 739,451" stroke-width="0.9"/><path d="M800,389C800,390 802,391 802,393C803,394 804,395 804,396C805,397 806,398 807,399C807,400 808,401 809,402C810,403 811,404 812,405C813,406 815,406 816,407C817,408 818,408 819,409C820,410 821,411 822,411C823,412 824,413 825,414C826,415 827,416 827,418C828,419 829,420 829,421C830,422 831,424 831,425" stroke-width="1.0"/><path d="M762,288C763,288 765,289 766,290C767,290 768,291 769,292C771,292 772,293 773,293C774,294 776,294 777,295C778,295 780,295 781,295C782,295 784,295 785,295C786,295 788,295 789,295C790,295 792,295 793,295C794,296 795,296 797,297C798,297 799,298 800,299C801,300 803,301 803,301" stroke-width="1.1"/><path d="M644,300C644,300 642,301 641,301C639,301 638,302 637,302C636,302 634,302 633,303C632,303 630,303 629,303C628,303 626,303 625,303C624,303 622,303 621,304C620,304 618,304 617,305C616,306 615,306 614,307C612,307 611,308 610,309C609,310 608,310 607,311C605,311 604,312 603,312C602,312 600,313 599,313C598,313 596,313 595,314" stroke-width="1.0"/><path d="M789,317C790,317 792,318 793,319C794,319 795,320 796,321C798,321 799,322 800,323C801,323 802,324 804,324C805,325 806,325 808,325C809,326 810,326 811,326C813,326 814,327 815,327C817,327 818,328 819,328" stroke-width="1.0"/><path d="M672,319C671,319 669,320 668,321C667,321 666,322 664,323C663,323 662,324 661,325C660,326 659,327 658,327C657,328 656,329 655,330C654,330 652,331 651,331C650,332 649,332 647,333C646,333 645,334 644,334C642,335 641,335 640,336C639,336 638,337 637,338C635,339 634,339 634,340C633,341 631,343 631,343" stroke-width="0.7"/><path d="M759,430C759,430 761,432 761,433C762,434 763,435 763,436C764,438 765,439 765,440C765,441 766,443 766,444C766,445 766,447 767,448" stroke-width="0.7"/><path d="M642,411C641,412 641,414 640,415C639,416 639,417 638,418C637,420 636,421 635,422C635,423 634,424 633,425C632,426 631,427 630,428C630,429 629,430 629,431C628,433 628,434 627,435C627,436 627,438 626,439C626,440 626,442 625,443C625,444 625,445 624,447C623,448 623,449 622,450C621,451 620,452 620,453C619,454 618,456 617,457" stroke-width="1.1"/><path d="M729,445C730,446 731,447 731,449C732,450 732,451 732,452C733,454 733,455 733,456C733,458 733,459 733,460C733,462 733,463 734,464C734,466 734,467 735,468C735,469 737,471 737,472" stroke-width="0.8"/><path d="M686,304C685,304 684,306 683,306C681,307 680,307 679,308C678,308 676,309 675,309C674,309 672,309 671,309C670,309 668,310 667,310C666,310 664,310 663,311C662,311 661,311 660,312C658,313 657,314 656,314C655,315 654,316 653,317C652,318 651,319 650,320" stroke-width="1.2"/><path d="M734,418C734,419 734,421 734,422C734,423 735,425 735,426C736,427 736,428 737,430C737,431 738,432 738,433C738,435 739,437 739,437" stroke-width="0.9"/><path d="M702,315C701,315 699,315 698,315C696,315 695,314 694,314C692,314 691,314 690,314C688,314 687,314 686,314C684,314 683,314 682,315C680,315 679,316 678,316C677,317 676,317 674,317C673,318 671,318 670,319" stroke-width="1.0"/><path d="M766,435C766,435 768,437 768,438C769,439 770,440 771,441C771,442 772,443 772,445C772,446 772,447 773,449C773,450 773,451 773,453C773,454 773,455 773,457C773,458 773,459 774,460C774,462 775,463 776,464" stroke-width="1.1"/><path d="M677,401C677,401 676,403 675,404C674,405 674,407 674,408C673,409 673,411 673,412C673,413 673,415 672,416C672,417 672,419 671,420C671,421 670,422 669,423C668,424 667,426 666,426" stroke-width="1.2"/><path d="M653,394C653,395 652,396 651,398C651,399 650,400 649,401C649,402 648,403 647,404C646,405 644,406 643,406C642,407 641,408 640,408C639,409 638,410 637,411C636,412 635,413 634,414C633,415 633,416 632,417C632,419 631,420 631,421" stroke-width="1.0"/><path d="M756,426C757,427 758,428 759,430C760,431 760,432 761,433C761,434 761,436 762,437C762,438 762,440 762,441C762,442 762,444 762,445C762,446 762,448 762,449C762,450 763,452 763,453C764,454 765,456 766,456" stroke-width="1.2"/><path d="M799,354C799,354 801,354 803,355C804,355 805,355 806,356C808,356 809,357 810,358C811,358 812,359 813,360C814,361 815,362 816,363C817,364 817,365 818,366C819,367 820,368 821,369C822,370 823,371 824,372C825,372 827,373 828,373C829,374 830,374 832,374C833,375 835,375 835,376" stroke-width="1.0"/><path d="M732,415C733,416 734,418 735,419C735,420 736,421 737,422C738,423 738,424 739,425C740,426 740,428 741,429C741,430 742,431 742,433C743,434 743,435 743,436C744,438 744,439 745,440C745,441 746,443 747,444C747,445 748,446 749,447C750,448 751,450 751,450" stroke-width="1.0"/><path d="M646,397C646,398 645,399 644,400C644,401 643,402 642,403C641,404 640,405 639,406C638,407 637,408 637,409C636,411 635,412 635,413C634,414 634,416 633,417C633,418 633,419 633,421C632,422 632,423 632,425C632,426 631,427 631,428C630,430 629,431 629,432" stroke-width="0.8"/><path d="M667,293C667,293 665,293 663,294C662,294 661,294 660,294C658,295 657,295 656,295C654,295 653,295 652,296C650,296 649,297 648,297C647,298 645,299 645,299" stroke-width="1.0"/><path d="M659,340C659,340 658,342 657,343C656,344 655,345 654,346C653,347 652,348 651,349C650,350 649,350 648,351C647,352 646,353 645,353C644,354 642,356 642,356" stroke-width="0.7"/><path d="M774,342C774,342 776,343 777,343C779,343 780,343 781,344C783,344 784,344 785,345C786,345 788,346 789,347C790,347 791,348 792,349C793,350 794,351 795,352C796,353 797,354 798,355C799,355 800,356 801,357C802,358 803,358 804,359C806,360 807,360 808,360C809,361 811,361 812,362C813,362 815,363 816,363" stroke-width="1.0"/><path d="M623,372C622,372 620,373 619,374C618,374 617,374 615,375C614,375 613,376 612,376C611,377 609,378 608,379C607,380 606,381 606,382C605,383 604,384 603,385C602,386 602,387 601,388C600,389 599,390 598,391C597,392 596,393 595,393C594,394 592,395 591,395" stroke-width="0.9"/><path d="M648,315C647,315 645,315 644,315C643,316 641,316 640,316C639,317 638,318 637,319C636,319 635,320 634,321C633,322 632,323 631,324C629,324 628,325 627,326C626,326 625,326 623,327C622,327 621,327 619,327C618,327 617,327 615,327C614,327 613,327 611,328C610,328 609,328 608,329C606,330 605,331 604,332C603,332 602,334 602,334" stroke-width="0.8"/><path d="M688,321C687,321 685,322 684,322C683,323 682,323 681,324C680,325 678,325 677,326C676,327 675,328 674,328C673,329 672,330 670,330C669,331 668,331 667,332C666,332 664,333 663,333C662,333 660,334 659,334C658,335 657,335 655,336C654,336 653,337 652,338C651,338 650,339 649,340C648,341 647,342 646,343C645,344 644,346 643,346" stroke-width="1.0"/><path d="M694,316C693,316 692,317 690,317C689,318 688,318 687,318C685,319 684,319 683,319C681,320 680,320 679,320C677,320 676,320 675,321C673,321 672,321 671,322C670,322 668,323 667,323C666,324 665,324 664,325C662,326 661,327 660,327C659,328 658,329 657,330C656,330 654,331 654,332" stroke-width="1.2"/><path d="M766,306C766,306 768,307 769,308C770,309 771,310 772,311C773,312 774,313 775,313C776,314 777,315 779,315C780,315 781,315 783,316C784,316 785,316 787,316C788,316 790,316 791,316" stroke-width="0.9"/><path d="M761,317C762,318 763,319 764,320C766,320 767,321 768,322C769,322 770,323 771,323C773,324 774,324 775,325C777,325 778,325 779,326C780,326 782,327 783,327C784,328 785,329 786,330C787,330 788,331 789,332C790,333 791,335 792,335" stroke-width="0.9"/><path d="M758,377C758,378 759,380 759,381C759,382 760,384 760,385C761,386 761,387 762,389C763,390 763,391 764,392C765,393 766,394 767,395" stroke-width="1.0"/><path d="M750,386C751,386 752,388 753,389C754,390 755,391 755,392C756,393 756,394 757,396C757,397 758,398 758,399C759,401 759,402 760,403C761,404 761,405 762,406C763,408 764,409 765,410C765,411 766,411 767,412C768,413 770,415 770,415" stroke-width="0.8"/><path d="M663,427C663,427 663,429 662,431C662,432 662,433 661,435C661,436 660,437 659,438C659,439 658,440 657,441C656,442 655,444 654,444" stroke-width="1.1"/><path d="M633,376C632,377 630,378 629,379C628,379 627,380 626,380C625,381 623,382 622,382C621,383 620,384 619,385C618,385 617,386 616,387C615,388 614,389 613,390C613,391 612,392 611,394C610,395 609,396 609,397C608,398 607,399 606,400C605,400 604,401 603,402C601,403 600,403 599,404C598,405 596,406 596,406" stroke-width="1.0"/><path d="M779,300C779,301 781,301 782,301C784,301 785,302 786,303C787,303 788,304 789,305C790,306 792,307 793,307C794,308 795,309 796,309C797,310 799,310 800,311C801,311 802,311 804,311C805,311 806,311 808,311C809,312 810,312 812,312C813,312 815,313 816,313" stroke-width="1.2"/><path d="M632,381C631,382 630,383 629,384C628,385 627,386 626,387C625,388 624,389 623,390C622,391 622,392 621,393C621,394 620,396 620,397C620,398 619,400 619,401C619,402 619,404 618,405C618,406 617,408 617,409" stroke-width="0.9"/><path d="M692,320C691,320 689,321 688,321C686,322 685,323 684,323C683,324 682,325 681,326C680,327 680,328 678,329C677,330 676,331 675,331C674,332 673,332 671,333C670,333 669,333 667,333C666,334 665,334 664,334C662,334 661,334 660,335C658,336 657,337 656,337" stroke-width="1.0"/><path d="M632,386C632,386 631,388 630,389C629,390 628,391 627,392C626,393 625,393 624,394C623,395 621,396 620,396C619,397 618,398 617,399C616,399 615,400 614,401C613,402 613,404 612,405C611,406 611,407 610,408C610,410 609,411 609,412" stroke-width="1.0"/><path d="M654,410C654,411 652,413 652,414C651,415 650,416 649,417C648,418 647,419 647,420C646,421 645,422 645,424C644,425 644,426 644,427C643,429 643,430 643,431C642,432 642,434 642,435C641,436 641,438 640,439C640,440 639,442 639,442" stroke-width="0.8"/><path d="M751,391C752,391 753,392 754,393C755,394 756,395 757,396C758,397 759,397 760,398C761,399 762,400 763,401C764,402 765,404 765,405" stroke-width="0.8"/><path d="M786,354C786,355 788,356 789,357C790,358 791,358 792,359C793,360 794,361 795,362C796,363 797,364 797,366C798,367 799,368 799,369C800,370 801,371 802,372C802,373 804,375 804,375" stroke-width="0.8"/><path d="M650,324C649,324 647,325 646,326C645,326 644,327 643,328C642,329 641,330 640,331C639,332 638,333 638,334C637,335 636,336 635,337C634,338 634,339 633,340C632,341 631,342 630,343C629,344 627,344 626,345C625,346 624,346 623,347C622,348 620,349 620,349" stroke-width="1.0"/><path d="M771,345C771,345 773,346 774,347C775,348 776,348 777,349C779,349 780,350 781,350C782,351 784,351 785,352C786,353 787,354 788,354C789,355 790,356 791,357C791,359 792,360 793,361C793,362 794,363 795,364C795,365 796,367 797,368C798,368 799,369 800,370C801,371 802,372 803,372C805,373 806,374 807,374" stroke-width="0.9"/><path d="M789,355C789,355 790,356 791,358C792,359 793,360 793,361C794,362 794,363 795,365C795,366 796,367 797,368C797,369 798,371 799,372C800,373 800,374 801,375C802,376 803,376 804,377C805,378 807,379 808,380C809,381 810,382 810,383C811,384 812,385 813,386C813,387 814,389 814,390" stroke-width="0.9"/><path d="M699,276C698,276 696,276 695,276C693,276 692,276 691,276C689,277 688,277 687,277C685,277 684,278 683,278C682,279 681,279 679,280C678,281 677,282 676,282" stroke-width="0.8"/><path d="M654,312C653,313 651,313 650,313C649,314 647,314 646,315C645,315 644,316 643,316C641,317 640,318 639,319C638,319 637,320 636,321C635,322 634,323 633,324" stroke-width="1.2"/><path d="M678,449C678,450 678,452 677,453C677,454 677,456 676,457C676,458 676,460 675,461C675,462 674,463 673,464C673,465 672,466 671,467C670,468 669,469 668,470C667,471 666,472 666,473C665,475 664,476 663,477C663,478 662,479 662,481C662,482 661,483 661,484C661,486 660,488 660,488" stroke-width="1.0"/><path d="M662,395C661,395 660,397 660,398C659,399 658,400 658,401C657,403 656,404 656,405C655,406 655,407 654,409C654,410 654,411 654,413C653,414 653,415 653,417C653,418 653,419 653,421C652,422 652,423 652,425C651,426 651,427 650,428C650,430 649,431 649,432C648,433 647,435 647,435" stroke-width="0.7"/><path d="M677,320C677,320 675,319 673,319C672,319 671,319 669,320C668,320 667,320 665,321C664,321 663,322 662,323C661,324 660,325 659,325C658,326 657,327 656,328C655,329 653,329 652,330C651,330 650,331 648,331C647,331 645,331 644,331" stroke-width="0.8"/><path d="M743,450C743,450 743,452 744,453C745,455 745,456 746,457C747,458 748,458 749,459C750,460 751,461 752,462C753,463 754,463 755,464C756,465 757,467 758,468C758,469 758,470 759,472C759,473 759,474 759,476C760,477 760,478 760,479C761,481 761,483 762,483" stroke-width="1.1"/><path d="M791,357C791,357 793,358 794,359C795,360 796,361 797,362C798,362 799,363 800,364C801,365 802,366 803,367C804,368 805,368 806,369C807,370 809,370 810,371C811,371 812,372 814,372C815,373 816,373 817,374C818,374 820,375 821,376C822,376 823,377 824,378C825,379 826,380 827,381C828,382 828,383 829,384C830,385 832,386 832,387" stroke-width="0.7"/><path d="M654,339C654,340 652,340 650,341C649,341 648,341 647,342C645,342 644,342 643,343C641,343 640,343 639,344C638,344 636,345 635,346C634,346 633,347 632,348C631,348 629,350 629,350" stroke-width="1.0"/><path d="M623,367C623,368 622,369 621,371C620,372 620,373 620,374C619,376 619,377 618,378C618,379 617,381 616,382C616,383 615,384 614,385C613,386 612,386 611,387C610,388 608,389 607,389C606,390 605,391 604,392C603,393 603,394 602,395C601,396 601,398 600,399C600,400 600,402 599,403C599,404 599,405 598,407C598,408 597,410 597,410" stroke-width="1.0"/><path d="M754,444C754,445 755,447 755,448C756,449 757,450 758,451C759,452 760,453 761,454C762,455 763,455 764,456C764,457 765,458 766,459C767,460 768,462 768,463C769,464 769,466 769,467" stroke-width="0.9"/><path d="M774,320C774,320 776,321 777,321C779,322 780,323 781,323C782,324 783,325 784,326C785,326 787,327 788,327C789,328 790,328 792,329C793,329 795,330 795,330" stroke-width="1.0"/><path d="M642,314C642,314 640,315 639,316C637,316 636,316 635,317C634,317 632,318 631,318C630,319 629,319 628,320C626,321 625,322 624,323C623,323 623,324 622,325C621,326 620,328 619,329C618,330 617,331 616,331" stroke-width="1.0"/><path d="M790,390C790,391 792,393 793,393C793,394 794,395 795,396C796,397 797,398 798,399C799,400 800,401 801,402C802,403 802,404 803,406C803,407 804,408 804,409C804,411 805,412 805,413C805,415 806,416 806,417C807,418 807,420 808,421C809,422 809,423 810,424C811,425 813,426 813,427" stroke-width="1.2"/><path d="M754,400C755,401 756,402 757,403C759,403 759,404 760,405C761,406 762,407 763,409C763,410 764,411 765,412C765,413 766,415 766,416C767,417 767,418 768,419C769,420 770,422 770,423" stroke-width="0.8"/><path d="M656,395C655,395 654,397 653,398C652,399 651,400 650,400C649,401 648,402 647,403C646,404 645,405 644,406C643,407 642,408 642,409C641,410 641,411 640,413C640,414 639,416 639,417" stroke-width="0.7"/><path d="M628,329C627,329 626,331 625,332C624,333 622,333 621,334C620,334 619,335 618,336C616,336 615,337 614,337C613,338 612,338 611,339C610,340 609,341 608,342C607,343 606,344 605,345C605,346 604,347 603,349C603,350 602,351 601,352C601,353 600,354 599,355C598,356 597,357 596,358C595,358 593,359 592,360" stroke-width="0.9"/><path d="M724,426C724,427 725,429 725,430C725,431 725,433 725,434C726,435 726,437 726,438C726,439 726,441 727,442C727,443 728,444 729,445C729,447 730,448 731,449C732,450 733,451 734,452C734,453 735,454 736,455C737,456 737,457 738,459C738,460 738,461 739,462C739,464 739,466 739,466" stroke-width="0.9"/><path d="M625,321C624,321 623,322 622,323C620,323 619,324 618,325C617,326 617,327 616,328C615,329 614,330 613,331C612,332 611,333 610,334C609,334 608,335 607,336C606,337 604,337 603,338C602,338 601,339 599,339C598,340 597,340 596,341C595,342 594,342 593,343C592,344 591,345 590,346C589,347 588,348 587,349C587,350 585,352 585,352" stroke-width="1.2"/><path d="M726,276C727,277 729,278 730,278C731,279 732,280 733,280C735,281 736,281 737,281C739,282 740,282 741,283C742,283 744,283 745,284C746,284 747,285 748,286C750,286 751,287 752,288C753,289 754,290 755,290C756,291 757,292 758,293C759,294 760,294 761,295C762,296 764,297 765,297C766,298 768,299 768,299" stroke-width="1.0"/><path d="M702,438C702,438 701,440 701,441C701,443 700,444 700,445C700,447 700,448 699,449C699,451 699,452 699,453C699,455 700,456 700,457C700,458 700,460 700,461C701,462 701,464 701,465C701,466 701,468 700,469" stroke-width="0.9"/><path d="M759,305C760,306 761,307 762,308C763,309 763,310 764,311C765,312 766,313 768,314C769,314 770,315 771,315C773,315 774,316 775,316C776,316 778,316 779,317C780,317 782,318 783,319C784,319 785,321 786,321" stroke-width="1.0"/><path d="M685,285C684,285 682,286 681,286C680,287 679,287 678,288C677,289 675,289 674,290C673,291 672,292 671,292C670,293 669,294 667,294C666,295 665,295 664,296C663,296 661,297 660,297C659,297 657,298 656,298C655,299 654,299 652,300C651,300 650,301 649,302C648,302 647,303 646,304C645,305 643,306 643,307" stroke-width="1.1"/><path d="M769,322C770,322 772,323 773,324C774,324 775,325 776,326C777,327 778,328 779,329C780,330 780,331 781,332C782,333 783,334 783,335C784,336 785,337 786,338C787,339 788,340 789,341C790,341 792,342 793,343C794,343 795,344 796,344C797,345 799,346 800,346" stroke-width="0.7"/><path d="M639,336C639,336 637,337 636,338C635,338 633,339 632,340C631,340 630,341 629,341C627,342 626,342 625,343C624,344 623,345 622,345C621,346 620,347 619,348C618,349 617,351 617,352" stroke-width="1.1"/><path d="M747,394C747,394 749,396 750,397C750,398 751,399 752,400C753,401 753,402 754,404C754,405 754,406 755,407C755,409 755,410 756,411C756,413 756,414 757,415C757,416 758,418 758,419C759,420 760,421 760,422C761,423 762,425 763,425" stroke-width="1.0"/><path d="M751,319C752,319 754,320 755,321C756,321 757,322 758,322C760,323 761,323 762,324C764,324 765,324 766,324C768,324 769,324 770,324C772,324 773,324 774,324C776,324 777,325 778,325C779,326 781,326 782,327C783,328 784,328 785,329C786,330 787,331 788,332C789,333 790,334 791,334C792,335 794,335 795,336C796,336 798,337 799,337" stroke-width="1.0"/><path d="M746,429C746,429 747,431 748,432C748,433 749,434 750,435C751,436 751,438 752,439C753,440 753,441 754,442C754,444 755,445 755,446C755,447 756,449 756,450C756,451 756,453 756,454C757,455 757,457 757,458C758,459 758,460 759,462C759,463 760,464 761,465C761,466 762,468 763,469" stroke-width="0.8"/><path d="M683,292C682,292 680,293 679,294C678,294 677,294 675,294C674,295 673,294 671,294C670,294 669,294 667,294C666,294 665,294 663,294C662,294 661,294 659,294C658,295 657,295 656,296C655,297 654,298 652,299C651,299 650,300 649,301C648,302 647,303 646,303" stroke-width="0.8"/><path d="M752,332C752,333 754,334 755,335C756,336 757,336 758,337C759,338 760,339 762,339C763,340 764,340 765,341C766,341 768,342 769,342C770,342 772,343 773,343C774,344 775,344 777,345C778,345 779,346 780,347C781,347 782,348 783,349C784,350 785,351 786,352C787,353 788,354 789,355C790,356 791,357 792,357" stroke-width="1.1"/><path d="M635,386C635,386 633,388 632,389C631,389 630,390 629,391C628,392 627,393 627,394C626,395 625,396 624,397C623,398 623,400 622,401C621,402 621,403 620,404C619,405 619,406 618,408C617,409 616,410 616,411C615,412 614,413 613,414C612,414 611,415 610,416C609,417 607,419 607,419" stroke-width="1.1"/><path d="M754,341C755,342 757,343 758,343C759,343 761,344 762,344C763,344 765,344 766,344C767,345 768,345 770,345C771,346 772,347 773,347C774,348 775,349 776,350C777,351 778,352 779,353C779,354 780,356 781,357" stroke-width="1.0"/><path d="M639,294C638,295 637,296 636,297C635,297 633,298 632,299C631,300 630,300 629,301C628,302 627,302 625,303C624,303 623,303 621,303C620,304 619,304 617,304C616,304 615,304 613,304C612,304 611,305 610,305C608,305 607,306 606,307C605,308 603,309 603,309" stroke-width="0.9"/><path d="M668,431C667,432 667,434 666,435C666,436 665,437 664,438C663,439 663,440 662,442C661,443 660,444 659,445C659,446 658,447 657,448C656,449 656,450 655,451C655,453 654,454 654,455C653,456 653,458 653,459C652,460 652,462 652,463C651,464 650,466 650,467" stroke-width="0.9"/><path d="M632,382C632,383 631,385 630,386C630,387 629,388 628,389C627,390 626,391 625,392C624,393 623,394 622,394C621,395 619,396 618,396" stroke-width="1.1"/><path d="M744,409C744,409 745,411 746,413C746,414 747,415 747,416C748,417 749,418 750,419C751,420 752,421 753,422C754,423 755,425 755,425" stroke-width="1.0"/><path d="M705,454C705,455 704,457 703,458C703,459 702,460 701,461C701,462 700,463 699,465C698,466 698,467 697,468C697,469 696,471 696,472C696,473 696,475 696,476C696,477 696,479 696,480C696,481 696,483 696,484C696,485 696,487 695,488C695,489 694,490 694,492C693,493 692,494 691,495C691,496 690,497 689,498C688,499 688,501 687,502" stroke-width="0.8"/><path d="M756,445C756,446 756,448 756,449C757,450 757,452 757,453C757,454 758,456 758,457C759,458 760,459 760,460C761,462 762,463 762,464C763,465 764,466 764,467C765,468 765,470 766,471C766,472 766,474 767,475" stroke-width="1.0"/><path d="M663,325C662,325 660,326 659,327C658,327 657,328 656,329C655,330 654,331 653,332C652,332 651,333 650,334C649,335 648,336 646,336C645,337 644,338 643,338C642,339 641,339 639,340C638,341 637,341 636,342C635,343 634,343 632,344C631,345 630,346 629,347C628,347 628,348 627,349C626,350 624,352 624,352" stroke-width="1.0"/><path d="M620,354C620,354 618,355 617,356C616,357 615,358 614,359C613,360 612,361 611,362C610,362 609,363 608,364C607,365 606,366 605,366C604,367 602,368 601,368C600,369 599,369 597,369C596,370 595,370 594,371C592,371 591,372 590,373C589,373 588,374 587,375C586,376 585,377 584,378C583,379 582,380 582,381C581,382 579,383 579,384" stroke-width="0.9"/><path d="M762,330C763,330 764,332 765,332C766,333 767,334 768,335C770,336 771,336 772,337C773,338 774,338 776,339C777,339 779,340 779,340" stroke-width="0.7"/><path d="M708,266C708,266 710,266 712,266C713,267 714,267 716,267C717,268 718,268 719,269C721,269 722,270 723,270C724,271 725,272 726,272C727,273 729,274 730,274C731,275 732,276 733,276C735,276 737,277 737,277" stroke-width="1.0"/><path d="M688,436C687,437 687,439 686,440C686,441 685,442 684,443C684,444 683,445 682,446C681,447 680,448 679,449C678,450 677,451 677,452C676,454 675,455 675,456C674,457 674,458 673,460C673,461 672,462 672,463C672,465 671,466 671,467C671,469 670,470 670,471C669,472 668,473 667,474C667,476 665,477 665,478" stroke-width="1.1"/><path d="M631,417C631,417 631,419 630,420C629,422 628,423 628,424C627,425 626,425 625,426C624,427 623,428 622,429C621,430 620,431 619,432C619,433 618,435 618,436C618,437 617,439 617,440C617,441 617,443 617,444" stroke-width="0.8"/><path d="M700,314C699,314 697,315 696,315C694,315 693,315 692,315C690,315 689,316 688,316C686,316 685,316 684,317C683,317 681,318 680,318C679,319 678,320 677,320C676,321 674,322 673,322C672,323 671,324 670,324C669,325 667,325 666,326C665,326 663,327 662,327" stroke-width="0.9"/><path d="M727,283C728,283 730,283 731,283C732,283 734,283 735,283C736,284 737,284 739,285C740,285 741,286 742,287C743,287 745,288 746,288C747,289 748,289 750,289C751,289 753,289 754,289" stroke-width="0.9"/><path d="M657,411C656,412 656,414 655,415C655,416 654,417 654,419C653,420 653,421 652,422C651,423 650,424 650,425C649,426 648,427 647,429C646,430 646,431 645,432C644,433 643,434 643,435C642,436 641,438 641,439" stroke-width="1.1"/><path d="M651,373C651,373 650,375 649,376C649,377 648,379 648,380C648,381 647,383 647,384C647,385 646,387 646,388C645,389 645,390 644,391C643,392 642,393 641,394C641,395 639,397 639,397" stroke-width="1.1"/><path d="M729,419C730,420 730,422 731,423C731,424 732,425 733,426C733,428 734,429 735,430C735,431 736,432 737,433C737,435 738,436 738,437" stroke-width="0.7"/><path d="M663,348C663,349 661,350 660,351C659,352 658,352 657,353C656,354 654,354 653,355C652,355 651,356 650,356C648,357 647,358 646,358C645,359 644,360 643,361C642,362 641,363 640,364C640,365 639,366 638,367C637,368 637,370 636,371C635,372 634,373 633,374" stroke-width="1.2"/><path d="M664,289C663,290 661,290 660,290C659,290 657,290 656,290C655,290 653,290 652,290C651,290 649,290 648,290C647,291 645,291 644,291C643,292 642,293 641,293C639,294 638,295 637,295C636,296 635,297 634,297C633,298 631,298 630,299C629,299 627,300 626,300C625,300 624,300 622,300C621,300 620,300 618,301C617,301 615,301 614,302" stroke-width="0.9"/><path d="M796,317C797,317 799,318 800,318C801,319 802,319 803,320C805,320 806,321 807,322C808,323 809,323 810,324C811,325 812,326 813,327C814,328 815,328 816,329C817,330 819,331 820,331C821,332 822,332 823,333C825,333 827,334 827,334" stroke-width="1.0"/><path d="M644,349C643,349 642,351 641,351C640,352 639,353 637,354C636,354 635,355 634,356C633,357 632,358 631,359C630,360 629,361 629,362" stroke-width="0.8"/><path d="M658,417C658,418 656,419 655,420C654,421 653,422 653,423C652,424 651,425 650,426C650,427 650,429 649,430C649,431 649,432 649,434C648,435 648,436 648,438C648,439 647,440 647,441C646,443 645,444 644,445C643,446 642,447 641,448C641,449 639,449 638,450C638,451 636,453 636,453" stroke-width="1.0"/><path d="M652,310C651,310 650,310 648,311C647,312 646,313 645,314C644,315 644,316 643,317C642,318 641,319 641,320C640,321 639,322 638,323C637,324 636,325 635,325C634,326 632,327 631,327C630,328 629,328 627,328C626,329 625,329 624,330C622,330 621,331 620,332C619,333 618,334 617,335C617,336 616,338 615,338" stroke-width="0.7"/><path d="M757,371C757,372 759,373 759,374C760,376 760,377 761,378C761,379 762,381 762,382C763,383 763,384 764,385C765,387 766,388 766,389" stroke-width="0.7"/><path d="M725,279C726,279 728,279 729,279C730,279 731,279 733,279C734,278 735,278 737,278C738,278 739,278 741,278C742,279 743,279 745,279C746,280 747,280 748,281C749,282 751,282 752,283C753,283 754,284 755,284C757,285 758,285 759,285C761,285 762,285 763,285C765,285 767,285 767,285" stroke-width="0.8"/><path d="M614,397C613,397 612,398 611,399C609,400 608,401 607,401C606,402 605,403 604,404C603,404 602,405 601,406C600,407 599,409 598,409" stroke-width="1.1"/><path d="M615,388C614,389 613,390 612,391C611,392 609,392 608,393C607,394 606,395 605,396C604,396 603,397 603,399C602,400 601,401 601,402C600,403 600,405 600,406C599,407 599,409 599,410C598,411 598,412 597,414C597,415 596,416 595,417C594,418 593,419 592,420C591,421 590,421 589,422C588,423 587,425 586,425" stroke-width="0.7"/><path d="M761,362C761,362 763,363 764,364C765,365 766,366 767,366C768,367 770,368 771,368C772,369 773,369 774,370C775,371 777,372 778,372C779,373 780,374 781,375C782,376 783,377 783,378C784,379 785,380 786,381C787,382 788,383 788,384C789,385 790,386 791,387C792,388 793,389 794,389C796,390 797,391 798,391" stroke-width="1.2"/><path d="M738,291C739,291 740,292 742,292C743,293 744,293 746,293C747,293 748,293 750,292C751,292 752,292 754,293C755,293 756,293 758,293C759,294 761,295 761,295" stroke-width="1.2"/><path d="M631,310C630,311 628,312 627,312C626,313 625,314 624,315C624,316 623,317 622,318C621,319 620,320 619,321C618,322 617,323 616,323C614,324 613,324 612,324C610,325 609,325 608,325C607,325 605,326 604,326C603,326 601,327 600,328" stroke-width="0.9"/><path d="M766,428C767,429 767,430 768,432C768,433 769,434 769,436C769,437 770,438 770,439C771,441 771,442 772,443C773,444 773,445 774,446C775,447 776,448 777,449C778,450 779,452 779,452" stroke-width="0.8"/><path d="M763,325C764,325 766,325 767,326C768,326 770,326 771,326C772,327 774,327 775,327C776,328 777,328 778,329C780,330 781,331 781,332" stroke-width="1.2"/><path d="M753,309C754,309 756,310 757,310C758,311 760,311 761,311C762,312 764,312 765,312C766,312 768,313 769,313C770,313 772,313 773,313C774,313 776,313 777,314C778,314 779,314 781,315C782,315 784,316 784,317" stroke-width="0.9"/><path d="M664,292C663,293 662,294 661,295C660,296 659,296 657,297C656,297 655,298 654,298C652,298 651,298 650,299C648,299 647,299 646,299C644,299 643,299 642,299C640,299 639,300 638,300C637,301 635,301 634,302C633,303 633,304 632,305C631,306 630,307 629,308C628,309 627,310 626,310C625,311 623,312 622,312C621,313 619,313 618,313" stroke-width="0.9"/><path d="M720,315C720,315 722,316 723,317C725,317 726,317 727,317C729,318 730,318 731,318C733,318 734,318 735,318C737,319 738,320 739,320" stroke-width="0.8"/><path d="M714,272C715,272 717,273 718,273C719,273 721,273 722,273C723,273 725,273 726,272C727,272 729,272 730,272C731,272 733,273 734,273C735,273 736,274 738,274C739,275 740,275 741,276C742,276 744,277 745,278C746,278 747,278 749,279C750,279 751,279 753,279C754,279 755,279 757,279C758,279 759,279 761,279C762,279 764,279 765,279" stroke-width="1.2"/><path d="M691,298C690,299 688,299 687,300C686,300 684,300 683,300C682,300 680,300 679,300C678,300 676,300 675,300C674,300 672,300 671,301C670,301 668,301 667,301C666,302 665,302 663,303C662,304 661,304 660,305C659,306 657,307 657,307" stroke-width="0.9"/><path d="M772,365C772,365 774,366 774,368C775,369 776,370 776,371C777,372 777,374 778,375C779,376 779,377 780,378C781,379 782,380 783,381C784,382 785,383 786,383" stroke-width="1.2"/><path d="M660,409C660,410 659,411 658,412C657,414 657,415 657,416C656,417 656,419 656,420C656,421 655,423 655,424C655,425 654,427 654,428C653,429 652,430 652,431C651,432 649,434 649,434" stroke-width="0.8"/><path d="M747,406C748,406 749,408 750,409C750,410 751,412 751,413C752,414 753,415 753,416C754,418 754,419 755,420C755,421 756,423 757,423" stroke-width="0.9"/><path d="M731,432C732,433 732,435 733,436C734,437 734,438 735,440C735,441 736,442 736,443C737,445 737,446 737,447C737,449 737,450 738,451C738,453 738,455 738,455" stroke-width="0.9"/><path d="M626,413C626,414 625,416 624,417C624,418 624,419 623,421C623,422 622,423 622,424C622,426 621,427 620,428C620,429 619,430 618,431C617,432 616,433 615,434C614,435 613,436 612,437" stroke-width="1.2"/><path d="M660,324C659,324 657,325 656,325C655,326 653,326 652,326C651,327 650,327 648,328C647,328 646,329 645,329C644,330 643,331 642,332C641,333 640,334 639,335C638,336 637,337 636,338C635,339 634,340 633,341C632,341 631,342 630,343C629,344 628,344 627,345C625,345 624,346 623,346C622,347 620,348 619,348" stroke-width="0.8"/><path d="M739,412C739,412 740,414 741,415C741,417 741,418 742,419C742,420 742,422 742,423C742,424 742,426 742,427C743,428 743,430 744,431C744,432 745,433 746,434C747,435 748,436 749,437C750,438 751,439 752,440C752,441 753,442 754,443C755,444 755,445 756,446C756,448 757,450 757,450" stroke-width="1.0"/><path d="M689,428C689,429 688,431 687,432C687,433 686,434 686,436C685,437 685,438 685,439C685,441 685,442 685,443C685,445 685,446 685,447C685,449 685,450 685,451C685,453 684,454 684,455C683,457 683,458 682,459C681,460 681,461 680,462C679,463 678,465 678,466" stroke-width="1.0"/><path d="M769,288C769,288 771,289 772,290C773,291 774,291 775,292C776,293 777,294 778,295C779,296 780,297 781,298C782,299 783,300 784,301C785,301 786,302 788,302C789,303 790,303 791,303C793,304 794,304 795,304C797,305 798,306 799,306" stroke-width="0.7"/><path d="M650,427C650,427 649,429 648,430C648,431 647,432 647,434C647,435 646,436 646,438C646,439 646,440 646,442C646,443 646,444 646,446C646,447 645,448 645,450C645,451 644,452 643,453C643,454 642,455 641,457C640,458 640,459 639,460C638,461 637,463 637,463" stroke-width="0.7"/><path d="M758,359C758,360 759,362 760,363C761,364 761,365 762,366C763,367 764,367 766,368C767,369 768,369 769,370C770,371 772,371 773,372C774,372 775,373 776,374C777,374 778,375 779,376C780,377 781,379 782,379" stroke-width="1.1"/><path d="M770,354C771,354 772,356 773,357C774,358 774,359 775,360C775,361 776,363 776,364C777,365 777,366 778,367C779,369 779,370 780,371C781,372 782,373 783,373C784,374 786,375 787,376C788,376 789,377 790,378C791,379 793,380 793,380" stroke-width="1.1"/><path d="M780,383C781,383 783,384 784,385C785,385 786,386 787,387C788,388 789,389 789,391C790,392 790,393 791,394C791,395 792,397 793,398" stroke-width="0.9"/><path d="M621,331C621,332 619,333 618,333C616,334 615,334 614,335C613,336 612,337 611,337C610,338 609,339 608,340C607,341 605,342 605,343" stroke-width="1.1"/><path d="M682,289C682,290 680,291 679,292C678,292 677,293 675,293C674,293 673,294 671,294C670,294 669,294 667,294C666,294 665,294 663,295C662,295 661,295 660,296C659,297 657,297 656,298C655,299 654,300 653,301C653,302 652,303 651,304C650,305 649,306 648,306C647,307 645,308 644,308C643,309 642,309 640,310C639,310 637,310 636,311" stroke-width="0.9"/><path d="M747,433C747,434 749,435 749,436C750,438 751,439 751,440C751,441 752,443 752,444C752,445 752,447 752,448C752,449 752,451 751,452C751,453 751,454 751,456C751,457 751,458 751,460C751,461 751,462 752,464C752,465 753,466 754,467C754,468 756,470 756,471" stroke-width="0.9"/><path d="M787,403C787,403 788,405 789,406C790,407 790,409 791,410C792,411 792,412 793,413C794,414 795,415 796,416C797,417 798,418 799,418C800,419 801,420 802,421C803,422 804,422 805,423C806,424 808,426 808,426" stroke-width="1.1"/><path d="M641,365C640,366 638,367 637,368C636,368 635,369 634,370C633,371 633,372 632,373C631,374 630,375 629,376C628,377 628,379 627,380C626,381 625,382 624,383C623,384 622,385 621,385C620,386 619,387 618,388C617,389 616,389 615,390C614,391 613,392 612,393C611,394 610,395 609,396C608,397 607,398 607,399" stroke-width="0.8"/><path d="M632,343C631,343 629,344 628,345C627,345 625,345 624,346C623,346 621,346 620,346C619,347 617,347 616,347C615,348 613,349 613,349" stroke-width="0.9"/><path d="M612,380C612,380 610,381 610,382C609,383 608,385 607,386C607,387 606,388 606,389C605,391 605,392 604,393C604,394 603,396 602,397C602,398 601,399 600,400C599,400 597,401 596,402C595,403 594,403 593,404C592,405 591,405 590,406C589,407 588,408 587,409C586,410 586,412 585,413" stroke-width="1.0"/><path d="M714,290C714,291 716,291 718,292C719,292 720,292 722,292C723,292 724,291 726,291C727,291 728,291 730,290C731,290 732,290 734,290C735,290 736,290 737,291C739,291 740,292 741,292C742,293 744,294 745,294" stroke-width="1.1"/><path d="M615,366C615,367 614,369 613,370C613,371 613,372 612,374C612,375 611,376 610,377C610,378 609,379 608,380C607,382 606,382 605,383C604,384 603,385 602,386" stroke-width="0.9"/><path d="M668,432C668,433 667,435 666,436C665,437 665,438 665,439C664,441 664,442 664,443C664,445 664,446 664,447C664,449 664,450 664,451C665,453 665,454 665,455C665,457 664,458 664,459C664,461 663,462 663,463C662,464 661,465 661,467C660,468 659,469 659,470C658,471 658,473 658,474" stroke-width="0.7"/><path d="M736,445C736,445 737,447 737,448C737,450 737,451 737,452C737,454 737,455 737,456C737,458 737,459 738,460C738,462 738,463 739,464C739,466 740,467 741,468C741,469 742,470 743,471C743,472 744,473 745,475C746,476 746,477 747,478C747,480 747,482 747,482" stroke-width="0.8"/><path d="M659,348C659,349 657,350 656,351C656,352 655,353 654,354C653,355 653,357 652,358C651,359 650,359 649,360C648,361 646,362 646,363" stroke-width="0.9"/><path d="M797,315C798,316 799,317 801,318C802,319 803,319 804,320C805,320 807,320 808,321C809,321 811,321 812,321C813,321 815,321 816,321" stroke-width="0.8"/><path d="M670,397C669,398 669,400 668,401C668,402 668,403 667,405C667,406 666,407 665,408C665,409 664,411 663,412C663,413 662,414 661,415C661,416 660,418 660,419C659,420 659,421 659,423C658,424 658,426 658,427" stroke-width="0.8"/><path d="M774,359C775,359 776,361 777,362C778,362 780,363 781,364C782,364 783,365 784,365C786,366 787,366 788,367C789,368 790,369 791,370C792,371 793,372 793,373C794,374 795,375 795,376C796,378 796,380 797,380" stroke-width="1.0"/><path d="M690,282C690,283 688,284 687,284C686,285 684,285 683,285C682,286 680,286 679,286C678,286 676,286 675,287C674,287 672,287 671,287C670,287 669,288 667,288C666,288 665,289 664,290C662,290 661,291 660,292" stroke-width="1.0"/><path d="M637,347C637,348 635,349 634,349C632,350 631,350 630,351C629,351 628,352 626,352C625,353 624,353 623,354C622,355 620,355 619,356C618,357 617,358 616,359C615,360 614,361 613,362C613,363 612,364 611,364C610,365 609,366 608,367C607,368 605,369 604,369C603,370 601,371 601,371" stroke-width="0.7"/><path d="M617,385C617,385 616,387 615,388C614,389 614,390 613,391C612,393 612,394 611,395C610,396 609,397 608,398C607,399 606,400 605,401C605,402 604,403 603,404C602,404 600,406 600,406" stroke-width="0.9"/><path d="M731,430C731,431 732,433 732,434C733,436 733,437 734,438C734,439 735,440 735,442C736,443 737,444 737,445C738,446 738,448 739,449C739,450 739,452 740,453" stroke-width="1.1"/><path d="M679,417C678,418 678,420 677,421C676,422 676,423 675,424C674,425 673,426 672,427C671,428 670,429 669,430C669,431 668,432 667,433C666,434 665,436 665,437C664,438 664,439 663,441C663,442 663,443 662,444C662,446 662,447 661,448C661,449 660,451 660,452C659,453 658,454 657,455C656,456 656,457 655,458C654,459 652,461 652,461" stroke-width="0.8"/><path d="M758,406C759,406 759,408 760,409C760,410 761,412 762,413C762,414 763,415 764,416C764,417 765,418 766,419C767,420 768,421 769,422C770,423 771,424 771,426C772,427 773,428 774,429C774,430 775,431 775,432C776,434 777,436 777,436" stroke-width="0.9"/><path d="M654,383C654,384 653,386 653,387C652,388 652,389 651,391C651,392 651,393 650,395C650,396 649,397 649,398C648,399 647,400 646,401C645,403 644,403 644,404C643,405 642,406 641,407C640,408 639,410 638,411" stroke-width="1.1"/><path d="M740,305C740,306 742,306 743,307C745,307 746,307 747,308C749,308 750,308 751,309C753,309 754,310 755,310C756,311 757,312 758,312C759,313 760,314 761,315C762,316 763,317 764,318C765,319 765,320 766,321C767,322 769,323 769,324" stroke-width="0.9"/><path d="M658,364C657,364 655,365 654,365C653,365 651,366 650,366C649,367 648,367 647,368C646,369 645,370 644,371C643,372 642,374 642,375" stroke-width="0.9"/><path d="M666,306C665,306 663,306 662,306C661,306 659,306 658,306C657,306 655,305 654,306C653,306 651,306 650,306C649,307 647,308 647,308" stroke-width="1.1"/><path d="M766,308C767,308 768,309 770,310C771,310 772,311 773,311C774,312 776,312 777,312C778,313 780,313 781,313C782,314 783,314 785,314C786,314 788,315 789,315" stroke-width="0.9"/><path d="M755,406C755,407 756,409 757,410C758,411 758,412 759,413C760,414 761,415 762,416C763,417 764,418 764,419C765,420 766,422 766,423C767,424 767,425 767,427C768,428 768,429 768,430C768,432 769,433 769,434C769,436 770,437 770,438C771,439 772,440 772,442C773,443 774,444 775,445C776,446 777,447 777,448" stroke-width="0.7"/><path d="M655,350C655,350 653,351 652,352C651,353 649,353 648,354C647,355 646,355 645,356C644,357 643,358 642,358C641,359 640,360 639,361C638,362 637,364 637,365" stroke-width="0.9"/><path d="M777,409C778,410 778,412 779,413C780,414 780,415 781,416C782,417 783,418 784,419C785,420 786,421 787,422C788,423 789,424 790,424C791,425 792,426 793,427C794,428 794,429 795,430C796,431 796,433 797,434C798,435 798,436 799,438C799,439 800,441 800,441" stroke-width="1.1"/><path d="M768,316C768,316 770,317 771,318C773,318 774,319 775,320C776,320 777,321 778,322C779,323 780,324 781,325C782,325 783,326 785,327C786,327 788,328 788,328" stroke-width="0.9"/><path d="M648,297C648,298 646,298 645,299C644,300 642,300 641,301C640,302 639,302 638,303C637,304 635,304 634,305C633,305 632,306 630,306C629,306 628,307 626,307C625,307 624,307 622,307C621,308 620,308 619,308C617,309 616,309 615,310C614,310 612,311 611,312" stroke-width="1.2"/><path d="M625,378C625,378 624,380 623,381C622,382 621,383 620,384C619,385 619,386 617,387C616,388 615,388 614,389C613,390 612,390 611,391C609,391 608,392 607,392C606,393 605,394 604,394C602,395 601,396 601,397C600,398 599,399 598,400C597,401 597,403 596,404C595,405 594,406 594,407" stroke-width="1.0"/><path d="M711,429C711,429 711,431 712,433C712,434 713,435 713,436C714,437 714,439 715,440C715,441 716,442 716,444C716,445 716,446 717,448C717,449 716,450 716,452C716,453 716,455 716,456" stroke-width="0.8"/><path d="M737,283C737,283 739,283 741,283C742,283 743,283 745,283C746,283 747,282 749,282C750,282 751,282 753,282C754,283 755,283 757,283C758,283 759,284 760,284C762,285 763,285 764,286C765,286 767,287 768,287" stroke-width="0.7"/><path d="M706,316C705,316 703,316 702,317C700,317 699,317 698,317C697,318 695,318 694,319C693,319 692,320 690,320C689,321 687,322 687,322" stroke-width="0.7"/><path d="M675,399C674,399 674,401 673,403C672,404 672,405 671,406C670,407 670,408 669,409C668,411 668,412 667,413C666,414 666,415 665,417C665,418 665,419 664,420C664,422 664,423 664,424C664,426 664,427 663,428C663,430 663,431 662,432C662,434 661,435 661,436" stroke-width="0.9"/><path d="M655,354C654,355 652,355 651,356C650,356 648,356 647,357C646,357 644,358 643,358C642,359 641,360 640,361C639,362 638,363 637,364C636,365 636,366 635,367C634,368 634,369 633,370C632,371 631,372 630,373C629,374 627,375 627,375" stroke-width="1.0"/><path d="M670,397C670,397 669,399 669,400C668,402 668,403 668,404C667,406 667,407 667,408C666,409 666,411 665,412C664,413 663,414 663,415C662,416 661,417 660,418C659,419 658,420 657,420C656,421 655,423 654,423" stroke-width="1.1"/><path d="M750,401C751,401 752,403 753,403C755,404 756,405 757,405C758,406 759,407 760,408C761,409 762,410 763,411C764,412 765,413 765,414C766,415 766,416 767,418C767,419 768,421 768,421" stroke-width="0.8"/><path d="M753,413C753,414 755,416 755,417C756,418 756,419 757,421C757,422 757,423 757,425C758,426 758,427 758,428C758,430 759,431 759,432C759,434 760,435 761,436C761,437 762,438 763,439C763,440 764,441 765,443C766,444 767,445 768,446" stroke-width="0.9"/><path d="M767,433C768,434 768,436 769,437C769,438 770,439 771,440C772,441 773,442 773,443C774,444 775,445 776,446C777,448 777,449 778,450C778,451 779,453 779,454" stroke-width="1.1"/><path d="M690,444C690,445 690,447 690,448C690,449 690,451 689,452C689,453 688,455 688,456C687,457 687,458 686,459C685,460 685,462 684,463C683,464 682,465 682,466C681,467 680,468 680,470C679,471 679,472 679,473C678,475 678,476 678,477C678,479 678,480 677,481C677,483 677,484 677,485C676,486 676,488 675,489C675,490 674,492 673,492" stroke-width="1.0"/><path d="M735,434C735,435 736,437 737,438C737,439 737,440 737,442C737,443 737,444 738,446C738,447 738,448 738,450C738,451 738,452 738,454C739,455 739,456 740,457C740,459 741,460 742,461C742,462 743,463 744,464C745,465 745,467 746,468C747,469 747,470 747,471C748,473 748,475 748,475" stroke-width="1.0"/><path d="M668,358C667,359 665,360 664,360C663,361 662,361 660,362C659,363 658,363 657,364C656,365 655,366 655,368C654,369 654,371 653,371" stroke-width="1.1"/><path d="M651,393C651,394 650,396 650,397C649,398 648,399 648,400C647,401 646,402 645,403C644,404 643,405 642,406C641,407 640,408 640,409C639,410 638,411 637,413C637,414 636,415 636,416C635,418 635,419 635,420C635,421 634,423 634,424" stroke-width="0.9"/><path d="M632,320C631,321 630,322 628,323C627,323 626,324 625,325C624,325 623,326 621,326C620,327 619,328 618,328C617,329 615,329 614,330C613,331 612,332 611,333C610,334 609,335 609,336C608,337 607,338 606,339C605,340 605,341 604,342C603,343 602,344 601,345C600,346 599,347 598,347" stroke-width="1.0"/><path d="M701,279C701,279 699,279 697,279C696,279 695,279 693,279C692,280 691,280 690,280C688,280 687,281 686,281C684,281 683,282 682,282C681,283 679,283 678,284C677,284 675,284 674,285C673,285 672,285 670,285C669,285 667,285 666,285" stroke-width="0.9"/><path d="M762,367C763,368 764,370 765,371C766,372 766,373 767,373C769,374 770,375 771,376C772,376 773,376 775,377C776,377 777,378 779,378C780,378 781,379 782,379C783,380 785,381 786,382C787,383 787,384 788,385C789,386 789,387 790,388C791,389 791,391 792,392C793,393 794,394 795,395C796,396 798,397 798,397" stroke-width="0.9"/><path d="M756,423C756,424 756,426 756,427C757,428 757,430 757,431C757,432 758,433 758,435C759,436 759,437 760,438C761,439 762,441 762,442" stroke-width="0.8"/><path d="M696,319C695,319 693,319 692,320C691,320 690,320 688,321C687,321 686,322 685,322C683,323 682,323 681,324C680,324 678,325 677,325C676,326 675,326 673,326C672,326 671,327 669,327C668,327 667,327 665,327C664,327 663,327 661,328C660,328 659,328 658,329C656,329 655,330 654,331C653,332 652,332 651,333C650,334 648,335 648,336" stroke-width="0.9"/><path d="M678,286C677,286 675,286 674,287C673,287 671,287 670,288C669,288 667,288 666,289C665,289 664,290 663,290C661,291 660,292 659,293" stroke-width="0.9"/><path d="M650,320C649,320 647,320 646,320C644,321 643,321 642,321C640,321 639,322 638,322C637,323 636,324 635,325C634,326 633,327 632,328C631,329 630,330 629,331C629,332 628,333 627,334C626,335 625,335 623,336C622,337 620,337 620,338" stroke-width="0.7"/><path d="M789,375C789,375 791,377 792,378C792,379 793,379 794,380C795,381 796,383 797,384C797,385 798,386 799,387C799,388 800,389 800,391C801,392 801,393 802,394C803,396 803,397 804,398" stroke-width="1.0"/><path d="M777,378C778,378 779,380 780,381C780,382 781,383 782,385C783,386 783,387 784,388C785,389 786,390 787,391C788,392 789,392 790,393C791,394 792,396 793,396" stroke-width="0.9"/><path d="M783,355C784,355 785,357 786,358C786,359 787,360 788,361C789,362 790,363 792,364C793,364 794,365 795,365C797,365 798,366 799,366C800,367 802,367 803,368C804,368 805,369 806,370C807,371 808,372 809,373C809,374 810,375 811,376C811,378 812,379 813,380C813,381 814,382 815,383C816,384 817,385 818,386" stroke-width="1.1"/><path d="M739,443C739,444 740,446 740,447C741,448 741,449 741,451C741,452 741,453 742,455C742,456 742,457 742,459C743,460 743,461 744,462C744,464 745,465 746,466C746,467 747,468 748,469C749,470 750,471 750,473C751,474 752,475 752,476C753,477 753,479 753,480" stroke-width="0.8"/><path d="M657,340C656,341 654,342 653,343C652,343 651,344 650,345C649,346 648,347 647,348C646,349 645,350 644,350C643,351 642,351 640,352C639,352 638,352 637,353C635,353 634,353 633,353C631,354 630,354 629,354C628,355 626,356 625,356C624,357 623,358 622,359C621,360 621,361 620,362C619,363 618,364 617,365C616,366 615,367 614,368" stroke-width="1.1"/><path d="M757,411C757,411 758,413 759,414C759,416 760,417 761,417C762,418 763,419 764,420C765,421 766,422 767,423C768,424 769,425 770,426C770,427 771,428 771,430C772,431 772,432 772,433C773,435 773,436 773,437C773,439 774,440 774,441C774,443 775,444 776,445" stroke-width="0.8"/><path d="M659,417C659,417 657,418 656,419C655,420 654,420 652,421C651,422 650,423 649,424C648,425 648,426 647,427C646,428 646,429 645,431C645,432 645,433 644,434C644,436 644,437 643,438C642,439 642,441 641,442C640,443 639,444 638,445" stroke-width="0.9"/><path d="M647,387C646,388 645,389 644,390C643,391 642,391 641,392C640,393 639,395 638,396C638,397 637,398 636,399C636,400 635,402 635,403C634,404 633,405 633,406C632,407 631,409 631,410C630,411 628,412 628,413" stroke-width="0.9"/><path d="M801,346C801,346 803,347 804,348C805,349 806,350 807,351C808,352 809,353 809,354C810,355 811,356 811,357C812,359 813,360 814,361C814,362 815,363 816,364C818,364 819,365 820,366C821,366 822,367 823,368C825,368 826,369 827,370C828,370 829,371 830,372C831,373 832,375 833,375" stroke-width="1.1"/><path d="M641,341C640,342 639,343 638,344C637,344 635,345 634,345C633,346 632,346 630,347C629,347 628,348 627,349C626,349 625,350 624,351C623,352 622,354 621,354" stroke-width="0.7"/><path d="M743,443C743,444 743,446 744,447C744,448 744,450 744,451C744,452 745,453 745,455C746,456 747,457 747,458C748,459 749,460 750,461C751,462 752,462 753,463C754,464 755,465 756,466C757,467 757,469 758,470C758,471 759,472 759,474C759,475 759,476 759,478C759,479 760,481 760,482" stroke-width="1.0"/><path d="M661,439C661,440 660,442 660,443C659,444 659,445 658,447C658,448 657,449 656,450C656,451 655,452 654,454C654,455 653,456 652,457C651,458 650,459 649,460C648,461 648,462 647,463C646,464 645,465 645,466C644,468 644,469 643,470C643,471 642,473 642,474" stroke-width="1.0"/><path d="M756,322C757,322 758,324 759,325C760,326 761,327 762,327C763,328 764,328 766,329C767,329 768,330 770,330C771,330 772,330 773,331C775,331 776,331 777,332C778,333 780,334 780,334" stroke-width="1.0"/><path d="M739,309C740,310 741,311 742,311C744,312 745,313 746,314C747,315 748,316 749,316C750,317 751,318 752,318C753,319 755,319 756,320" stroke-width="1.0"/><path d="M761,374C762,375 763,376 764,377C765,378 765,379 766,381C766,382 767,383 767,384C767,386 768,387 768,388C769,389 769,391 770,392C770,393 771,395 772,395" stroke-width="1.0"/><path d="M722,279C723,279 725,278 726,278C727,278 729,278 730,278C731,278 733,278 734,278C735,278 737,279 738,279C739,279 741,280 742,280C743,281 745,281 746,282" stroke-width="1.1"/><path d="M762,335C763,335 764,336 766,337C767,337 768,338 769,339C770,339 771,340 772,341C773,342 774,343 775,344C776,345 777,346 778,347C779,348 780,349 780,350" stroke-width="0.8"/><path d="M768,377C768,377 769,379 769,380C770,382 770,383 771,384C772,385 772,386 773,387C774,388 775,389 776,390C777,391 778,392 780,392C781,393 782,394 783,394C784,395 785,396 786,397C787,398 788,399 788,400C789,401 790,402 790,404C791,405 791,406 792,407C792,409 792,410 793,411C794,412 794,413 795,415C796,416 797,417 798,417" stroke-width="0.9"/><path d="M649,369C648,369 647,371 647,372C646,373 645,374 644,375C643,375 642,376 640,377C639,378 638,378 637,379C636,380 635,380 634,381C633,382 632,383 631,384C630,385 629,386 629,387C628,388 628,390 627,391C626,392 626,393 625,395C625,396 624,398 623,398" stroke-width="1.0"/><path d="M686,310C686,310 684,311 683,311C681,312 680,312 679,313C678,314 677,314 676,315C674,316 673,317 672,317C671,318 670,319 669,320C668,321 667,321 666,322C665,323 663,323 662,324C661,324 660,325 659,326C657,326 656,327 655,327C654,328 652,329 652,329" stroke-width="1.0"/><path d="M773,323C774,323 776,323 777,323C778,323 780,324 781,324C782,325 783,325 785,326C786,327 787,327 788,328C789,329 789,330 790,331C791,332 792,333 793,334C794,335 795,336 796,337C797,338 799,339 799,339" stroke-width="0.7"/><path d="M714,433C714,433 713,435 713,437C713,438 713,439 713,441C712,442 712,443 713,445C713,446 713,447 713,448C714,450 715,451 715,452C716,453 717,454 717,456C718,457 719,458 719,459C719,460 720,462 720,463C720,464 720,466 720,467C720,468 720,470 720,471C719,472 719,474 719,475C719,476 719,478 719,479" stroke-width="0.9"/><path d="M683,281C682,281 680,282 679,282C677,282 676,282 675,282C673,282 672,282 671,282C669,283 668,283 667,283C666,284 664,284 663,285C662,286 661,287 660,288C659,289 658,290 658,291C657,292 656,293 655,293C654,294 652,295 651,296C650,296 648,297 648,297" stroke-width="1.2"/><path d="M673,305C673,305 671,306 669,306C668,306 667,306 665,306C664,306 663,306 661,306C660,306 659,306 657,306C656,306 655,306 653,307C652,307 651,307 650,308C648,308 647,309 646,309C645,310 643,311 642,311" stroke-width="1.0"/><path d="M656,406C656,407 655,409 655,410C654,411 654,412 653,414C653,415 652,416 652,417C651,419 651,420 650,421C649,422 649,423 648,424C647,425 646,426 645,427C644,428 643,429 643,430C642,431 641,432 640,433C639,434 639,436 638,437C637,438 637,439 636,440C636,442 636,443 635,444C635,446 634,447 634,448" stroke-width="1.0"/><path d="M632,297C631,297 629,298 628,299C627,299 626,300 624,300C623,300 622,301 621,301C619,302 618,302 617,303C616,304 615,304 613,305C612,306 611,306 610,307C609,308 608,309 607,310C606,311 605,312 604,312C603,313 602,314 601,315C600,316 598,317 597,317" stroke-width="0.9"/><path d="M616,371C615,371 613,372 612,373C611,373 610,374 609,375C608,376 607,377 606,378C605,379 605,380 604,382C603,383 603,384 602,385C602,386 601,387 600,388C599,390 598,391 597,391C597,392 595,393 594,394C593,395 592,395 591,396C590,397 588,398 588,398" stroke-width="1.0"/><path d="M790,381C790,381 792,382 793,383C794,383 796,384 797,385C798,385 799,386 800,387C801,387 802,388 803,389C804,390 805,391 806,392C806,394 807,395 808,396C809,397 810,398 810,399C811,400 812,401 813,402C814,402 816,403 817,404C818,404 819,405 820,406C821,406 823,407 824,408C825,408 826,410 827,410" stroke-width="1.1"/><path d="M700,311C699,311 697,312 696,313C695,313 694,314 692,314C691,314 690,315 688,315C687,315 686,315 684,315C683,316 682,316 681,316C679,317 678,317 677,318C676,318 675,319 674,320C673,321 671,322 671,323" stroke-width="1.2"/><path d="M637,296C637,296 635,296 634,296C632,297 631,297 630,298C629,298 627,299 626,300C625,300 624,301 623,302C622,303 621,304 620,304C619,305 618,306 616,306C615,307 614,307 613,308C611,308 610,308 609,308C607,309 606,309 605,309C603,309 602,310 601,310C600,311 598,312 597,312" stroke-width="1.0"/><path d="M643,301C643,301 641,302 640,302C638,303 637,304 636,305C635,306 635,307 634,308C633,309 632,310 632,311C631,312 630,313 629,314C628,315 627,316 626,317C625,317 624,318 622,318C621,319 620,319 618,320C617,320 615,321 615,321" stroke-width="0.8"/><path d="M673,277C672,277 670,278 669,278C667,278 666,278 665,278C663,278 662,278 661,277C659,277 658,277 657,277C655,277 654,277 653,278C651,278 650,278 649,279C648,279 646,280 645,280" stroke-width="1.0"/><path d="M639,344C638,345 637,346 636,346C634,347 633,348 632,349C631,349 630,350 629,351C628,352 628,353 627,354C626,356 626,357 625,358C624,359 623,361 623,361" stroke-width="1.0"/><path d="M662,308C661,308 659,309 658,309C657,310 655,310 654,310C653,311 652,311 650,312C649,312 648,313 647,314C646,314 645,315 644,316C643,317 642,319 641,319" stroke-width="0.8"/><path d="M764,310C764,310 766,311 768,311C769,311 770,312 771,313C772,313 773,314 774,315C775,316 776,317 777,318C778,319 779,320 781,320C782,321 783,321 784,322C786,322 787,322 788,322C790,323 791,323 792,323C794,323 795,323 796,323C797,323 799,324 800,324C801,325 802,326 803,326C804,327 806,329 806,329" stroke-width="0.9"/><path d="M788,351C788,352 789,353 790,354C791,355 791,356 792,357C793,358 794,359 795,360C797,361 798,361 799,362C800,362 802,363 803,363C804,364 805,364 806,365C808,365 809,366 810,367C811,367 812,368 813,369C814,370 815,372 815,373" stroke-width="1.1"/><path d="M657,341C656,342 655,343 654,344C653,345 652,346 651,347C650,348 649,348 648,349C647,350 646,351 645,352C644,353 643,354 642,355C641,355 640,356 639,357C637,357 636,358 635,359C634,360 632,361 632,361" stroke-width="1.2"/><path d="M746,397C746,398 747,399 748,401C749,402 749,403 749,404C749,406 750,407 750,408C750,410 750,411 751,412C751,414 751,415 752,416C753,417 753,418 754,419C755,420 756,421 757,422C758,423 759,424 760,425C761,426 762,427 762,428C763,429 764,431 764,432" stroke-width="1.2"/><path d="M665,392C665,393 664,395 663,396C662,397 661,398 660,398C659,399 658,400 656,400C655,401 654,401 653,402C652,403 650,403 649,404C648,405 647,406 647,407C646,408 645,409 645,410C644,412 644,413 643,414C643,415 642,417 642,418" stroke-width="0.7"/><path d="M775,371C776,371 777,372 778,373C779,374 780,375 781,376C782,377 782,378 783,379C784,380 785,381 786,382C787,383 788,384 789,385C791,385 792,386 793,387C794,387 796,388 796,388" stroke-width="1.1"/><path d="M641,290C640,290 638,290 637,290C636,290 634,290 633,290C632,290 630,290 629,290C628,290 626,290 625,291C624,291 623,292 622,293C621,294 620,295 619,296C618,296 617,297 616,298C615,299 613,300 612,300C611,301 610,302 609,302C607,302 605,302 605,303" stroke-width="1.1"/><path d="M755,310C755,311 757,312 758,313C759,314 760,315 761,315C762,316 764,316 765,317C766,317 767,318 769,318C770,319 771,319 772,320C773,321 775,321 776,322C777,323 778,324 779,325C779,326 781,327 781,328" stroke-width="1.1"/><path d="M734,272C734,272 736,272 738,272C739,272 740,272 742,271C743,271 744,271 746,271C747,271 748,271 750,271C751,271 752,271 754,272C755,272 757,273 757,273" stroke-width="0.9"/><path d="M796,381C796,381 798,383 799,384C799,385 800,386 801,387C802,388 804,388 805,389C806,390 807,390 808,391C810,391 811,392 812,393C813,393 814,394 815,395C816,395 818,397 818,397" stroke-width="0.7"/><path d="M739,435C739,435 740,437 741,438C742,439 742,440 743,442C744,443 744,444 745,445C746,446 746,447 747,449C747,450 747,451 748,452C748,454 748,455 748,456C748,458 748,459 748,460C749,462 749,463 749,464C749,466 750,467 750,468C751,469 751,471 752,472C752,473 753,474 754,475C755,476 756,478 756,479" stroke-width="0.8"/><path d="M642,347C641,347 640,349 639,350C639,351 638,352 637,353C637,354 636,355 635,356C634,358 633,359 632,359C631,360 630,361 629,362C628,363 627,364 626,364C625,365 624,366 623,367C622,368 621,368 620,369C619,370 618,372 617,373C617,374 616,375 615,376C615,377 614,379 614,380C613,381 612,383 612,383" stroke-width="1.0"/><path d="M663,353C663,353 662,355 661,356C660,357 660,358 659,359C659,361 658,362 657,363C657,364 656,365 655,366C654,367 653,368 652,369C651,369 649,370 648,371C647,371 646,372 645,372C644,373 642,375 642,375" stroke-width="1.0"/><path d="M741,305C742,306 744,306 745,307C747,307 748,308 749,308C750,309 751,310 752,311C753,311 754,312 755,313C757,314 758,314 759,315C760,316 761,317 762,317C763,318 765,319 766,319" stroke-width="0.9"/><path d="M696,304C695,305 693,306 692,306C691,307 690,307 688,308C687,308 686,308 684,309C683,309 682,309 681,310C679,310 678,311 677,311C676,312 674,313 673,313" stroke-width="0.9"/><path d="M641,416C641,416 639,418 638,418C637,419 636,420 636,421C635,422 634,423 633,424C633,426 632,427 632,428C631,429 631,431 631,432C631,433 630,435 630,436C630,437 630,439 629,440C629,441 628,442 628,444C627,445 626,446 625,447C624,448 623,449 622,450C621,451 620,451 620,453C619,454 618,455 617,456C617,457 616,459 616,460" stroke-width="1.0"/><path d="M790,392C790,393 791,394 792,395C793,396 794,397 796,398C797,398 798,399 799,400C800,400 802,401 803,401C804,402 805,403 806,403C807,404 809,406 809,406" stroke-width="1.2"/><path d="M796,390C796,390 798,391 799,392C800,393 801,393 802,394C803,395 804,396 805,397C806,398 807,399 807,401C808,402 808,404 808,405" stroke-width="0.9"/><path d="M734,447C734,447 734,449 734,451C734,452 734,453 734,455C734,456 734,457 734,459C733,460 733,461 733,463C734,464 734,465 734,467C734,468 734,469 735,471C735,472 736,473 736,474C736,476 737,477 737,478C737,480 737,482 737,482" stroke-width="1.2"/><path d="M745,344C745,344 746,346 747,347C748,348 748,349 749,350C750,351 751,353 752,353C753,354 754,355 755,356C756,357 757,357 758,358C760,358 761,359 762,360C763,360 764,361 765,362C766,363 767,364 768,365C768,366 769,368 769,369" stroke-width="0.9"/><path d="M699,454C699,455 698,456 697,458C697,459 696,460 695,461C694,462 693,463 693,464C692,465 691,467 691,468C691,469 690,470 690,472C690,473 690,474 690,476C690,477 690,478 690,480C690,481 690,482 689,484C689,485 688,486 688,487C687,488 686,490 685,491C685,492 684,493 683,494C682,495 681,496 681,497" stroke-width="1.1"/><path d="M782,386C782,386 783,388 784,389C784,390 785,392 786,393C786,394 787,395 788,396C789,397 790,398 791,399C792,399 793,400 795,401C796,401 797,402 798,403C799,403 800,404 801,405C802,406 803,407 803,408C804,410 805,411 805,412C806,413 806,415 806,416C807,417 807,418 808,420C809,421 810,422 810,423" stroke-width="1.1"/><path d="M722,302C723,302 725,303 726,303C727,304 729,304 730,305C731,305 732,305 734,305C735,305 736,306 738,306C739,306 740,307 741,307C743,308 744,309 745,310C746,311 747,312 747,313C748,314 749,315 750,316C751,317 752,318 753,319C754,319 755,320 756,321C757,322 758,322 760,323C761,323 763,324 763,324" stroke-width="1.0"/><path d="M716,314C717,314 719,314 720,314C721,315 722,315 724,316C725,316 726,317 727,318C728,318 729,319 731,319C732,320 733,321 734,321C736,321 737,322 738,322C740,322 741,322 742,322C744,322 745,322 746,322C748,322 750,322 750,322" stroke-width="1.0"/><path d="M680,417C680,417 680,419 680,421C680,422 679,423 679,425C679,426 678,427 678,429C678,430 677,431 677,432C676,433 675,435 675,436C674,437 674,438 674,440C673,441 673,442 673,444C672,445 672,447 672,448" stroke-width="0.8"/><path d="M688,305C688,305 686,306 685,307C684,307 682,308 681,308C680,309 679,309 677,309C676,310 675,310 673,310C672,310 671,311 669,311C668,311 667,312 666,312C664,313 663,313 662,314C661,315 660,316 659,316C658,317 657,318 656,319C655,320 654,321 653,321C652,322 650,323 649,324C648,324 646,325 646,325" stroke-width="0.8"/><path d="M645,337C644,338 642,338 641,339C640,339 639,340 637,340C636,341 635,341 634,342C633,343 632,344 631,345C630,345 629,347 628,348C627,349 626,350 626,351" stroke-width="1.2"/><path d="M742,312C743,312 744,314 745,314C746,315 748,316 749,316C750,316 751,317 753,317C754,317 755,317 757,317C758,317 759,317 761,317C762,317 763,318 765,318C766,318 767,319 768,320C769,320 770,321 771,322C772,323 773,324 774,325C775,326 776,327 777,328C778,329 780,330 780,330" stroke-width="1.1"/><path d="M749,411C749,411 749,413 749,415C749,416 749,417 749,419C749,420 749,421 750,423C750,424 750,425 750,427C751,428 751,429 752,430C752,432 753,433 754,434C754,435 755,437 755,438" stroke-width="0.8"/><path d="M666,346C665,347 663,348 662,349C661,349 660,350 659,351C658,352 657,353 656,354C655,355 654,356 654,357C653,358 652,359 652,360C651,361 650,362 650,364C649,365 649,366 648,367C647,368 647,370 646,371C645,372 644,373 643,374C643,375 642,376 641,377C640,378 639,379 638,380C637,381 636,383 636,383" stroke-width="1.1"/><path d="M766,360C767,360 768,362 769,363C770,363 771,364 772,365C773,366 774,367 775,368C776,369 776,370 777,372C778,373 778,374 779,375C779,376 780,378 780,379C781,380 782,381 782,382C783,383 784,384 785,386C786,387 787,388 787,389C788,389 789,390 790,391C791,392 792,394 793,394" stroke-width="0.8"/><path d="M758,424C759,424 759,426 760,428C760,429 761,430 762,431C762,432 763,433 764,434C765,435 766,436 767,437C768,437 769,438 770,439C771,440 772,441 773,442C773,444 774,445 774,446" stroke-width="1.2"/><path d="M652,296C651,296 649,296 648,296C647,296 645,296 644,296C643,296 641,296 640,296C639,297 637,297 636,298C635,299 634,299 633,300C632,301 631,302 630,303C629,304 628,305 627,306C626,307 624,308 624,308" stroke-width="0.9"/><path d="M706,453C705,453 704,455 704,456C703,457 702,459 702,460C701,461 701,462 700,464C700,465 700,466 700,467C700,469 700,470 700,471C700,473 701,475 701,475" stroke-width="1.2"/><path d="M764,381C764,382 766,383 767,384C768,385 769,386 770,387C771,387 772,388 773,389C774,390 775,391 776,391C777,392 778,393 779,394C780,395 780,396 781,398C782,399 782,400 783,401C784,402 784,403 785,405C786,406 786,407 787,408C788,409 789,410 790,411C791,412 792,413 793,414" stroke-width="1.0"/><path d="M704,442C704,443 704,445 704,446C704,447 704,449 704,450C703,451 703,453 702,454C702,455 701,456 701,457C700,459 699,460 698,461C698,462 697,463 696,464C696,465 695,466 695,468C694,469 694,470 694,472C694,473 694,474 694,476C694,477 694,478 694,480C694,481 694,482 694,484C693,485 693,487 693,487" stroke-width="0.9"/><path d="M657,297C656,297 654,297 653,297C651,297 650,297 649,297C647,297 646,297 645,297C643,298 642,298 641,299C640,299 639,300 638,301C637,302 635,303 634,303C633,304 632,305 631,305C630,306 628,306 627,306C626,307 624,307 623,307C622,307 620,307 619,307C618,307 616,307 615,307C614,307 612,308 611,308C610,309 608,310 608,310" stroke-width="0.7"/><path d="M638,389C637,389 636,390 635,391C634,392 633,394 633,395C632,396 631,397 631,398C631,400 630,401 630,402C630,404 630,405 629,406C629,408 629,409 628,410C628,411 627,412 626,414C625,415 624,416 624,417C623,418 622,419 621,420C620,421 619,422 618,423C618,424 617,426 616,426" stroke-width="1.1"/><path d="M766,372C766,372 768,373 769,374C770,375 770,376 771,378C772,379 773,380 773,381C774,382 775,383 775,384C776,385 777,386 778,387C779,388 780,389 781,390C782,391 783,392 784,393C785,394 786,394 787,395C788,396 789,397 790,398C791,399 792,400 793,401" stroke-width="0.7"/><path d="M784,386C784,387 785,389 785,390C786,392 786,393 787,394C788,395 789,396 790,397C791,398 792,398 793,399C794,400 795,401 796,402C797,403 798,404 798,405C799,406 799,408 800,409C800,410 800,412 800,413" stroke-width="1.1"/><path d="M736,326C737,327 738,328 739,329C740,330 741,331 742,331C744,332 745,333 746,333C747,334 748,334 750,334C751,335 752,335 754,335C755,335 756,336 758,336C759,336 760,337 761,338C762,338 763,339 764,340C765,341 766,342 767,343C768,344 768,346 769,347C770,348 771,349 772,350" stroke-width="0.7"/><path d="M761,316C762,316 764,317 765,318C766,319 767,320 768,320C769,321 770,322 771,323C772,324 773,324 774,325C776,325 777,326 778,326C780,327 781,327 782,327C783,327 785,327 786,328C787,328 789,329 790,329C791,330 792,330 793,331C794,332 795,333 796,334C797,335 799,336 799,337" stroke-width="0.8"/><path d="M615,345C614,345 613,347 612,347C611,348 609,349 608,349C607,350 606,351 605,352C604,353 603,354 603,355C602,356 601,357 600,358C600,360 599,361 599,362C598,363 597,365 597,365" stroke-width="1.2"/><path d="M689,280C688,280 686,281 685,281C684,281 683,282 681,282C680,283 679,283 678,284C676,284 675,285 674,285C673,286 671,286 670,287C669,287 668,287 666,288C665,288 664,288 662,288C661,288 659,289 658,289" stroke-width="0.8"/><path d="M751,430C751,430 751,432 752,434C752,435 753,436 754,437C755,438 756,439 756,440C757,441 759,442 760,443C760,444 762,444 762,445C763,447 764,448 765,449" stroke-width="0.8"/><path d="M784,326C784,327 786,327 787,328C789,328 790,329 791,330C792,330 793,331 794,332C795,333 796,334 797,335C798,336 799,337 800,337C801,338 802,339 803,339C805,340 806,340 807,341C808,341 810,341 811,341C812,342 814,342 815,342C816,343 818,344 819,344" stroke-width="0.9"/><path d="M708,423C708,424 708,426 708,427C708,428 707,430 707,431C707,432 708,434 708,435C708,436 709,437 709,439C710,440 710,441 711,442C712,443 712,444 713,445C714,447 715,448 715,449C716,450 716,451 717,453C717,454 717,456 717,457" stroke-width="0.9"/><path d="M723,312C724,312 726,313 727,313C728,314 729,314 731,314C732,314 733,314 735,314C736,314 737,314 739,314C740,314 741,314 743,314C744,314 745,314 747,315C748,315 749,316 750,317C751,317 752,318 753,319C754,320 755,321 757,322C758,322 759,323 760,324" stroke-width="0.8"/><path d="M629,419C629,419 627,421 626,422C625,422 624,423 623,424C622,425 622,426 621,427C620,429 619,430 619,431C618,432 617,433 617,434C616,435 615,437 614,438" stroke-width="0.8"/><path d="M608,375C608,375 606,377 605,378C604,379 604,380 603,381C602,382 601,383 601,384C600,385 599,386 598,387C597,388 596,389 595,390C594,391 593,391 591,392C590,393 589,393 588,394C587,394 585,395 584,395C583,396 582,397 581,398" stroke-width="1.1"/><path d="M758,427C759,428 760,430 760,431C761,432 762,433 763,434C763,435 764,437 764,438C765,439 765,440 766,442C766,443 766,444 766,446C766,447 767,448 767,450C767,451 767,452 767,453C768,455 768,456 768,457C769,459 769,460 770,461C771,462 771,463 772,464C773,466 774,467 774,468" stroke-width="0.8"/><path d="M784,353C785,353 786,355 786,356C787,357 788,359 788,360C789,361 790,362 791,363C792,364 793,364 794,365C795,366 797,366 798,367C799,367 800,368 801,368C803,369 804,370 805,370C806,371 807,372 808,373C809,374 810,376 810,376" stroke-width="1.1"/><path d="M698,304C698,305 696,306 695,306C694,307 692,307 691,308C690,308 689,309 687,309C686,310 685,310 684,310C682,311 681,311 680,312C679,312 677,313 676,314C675,314 674,315 673,316C672,317 671,317 670,318C669,319 668,320 667,321C666,322 665,323 664,323C663,324 661,325 660,326" stroke-width="0.7"/><path d="M651,416C651,416 650,418 650,419C649,420 648,422 648,423C647,424 646,425 646,426C645,427 644,428 643,429C642,430 642,431 641,433C640,434 640,435 639,436C639,437 638,439 638,440C637,441 637,443 637,444C637,445 636,447 636,448C636,449 635,451 635,452" stroke-width="1.1"/><path d="M691,294C690,294 688,294 687,295C686,296 685,296 684,297C682,298 681,299 680,299C679,300 678,301 677,301C675,301 674,302 673,302C671,302 670,302 669,302C667,302 666,301 665,301C663,301 661,301 661,301" stroke-width="1.1"/><path d="M777,405C777,405 778,407 778,408C779,410 779,411 780,412C780,413 781,415 781,416C782,417 783,418 784,419C785,420 786,421 787,421C788,422 789,423 790,424C792,424 793,425 794,426C795,427 796,428 796,429" stroke-width="0.8"/><path d="M746,389C746,389 747,391 748,392C748,393 749,394 750,395C751,396 752,398 752,399C753,400 754,401 754,402C755,403 755,405 756,406C756,407 756,409 756,410C756,411 756,413 756,414C757,415 757,417 757,418C757,419 758,420 758,422C759,423 759,424 760,425C761,426 761,428 762,429C763,430 763,431 764,432C765,433 765,435 766,436" stroke-width="1.0"/><path d="M687,425C687,426 687,427 687,429C686,430 686,431 685,432C685,434 684,435 684,436C683,437 682,439 682,440C682,441 681,442 681,444C681,445 681,446 681,448C681,449 681,450 681,452C681,453 681,454 681,456C681,457 681,458 681,460C681,461 680,462 680,464C679,465 679,466 678,467C678,469 677,470 677,471" stroke-width="0.7"/><path d="M654,325C654,326 652,327 651,328C650,329 649,330 649,331C648,332 648,334 647,335C646,336 646,337 645,338C644,339 643,340 642,341C641,342 640,343 639,343C637,344 636,344 635,345C634,345 632,346 631,346" stroke-width="1.2"/><path d="M661,367C661,367 660,369 659,370C658,371 657,372 656,373C655,374 654,374 653,375C651,375 650,376 649,376C648,377 647,378 645,378C644,379 643,380 642,381C642,382 641,384 640,384" stroke-width="0.9"/><path d="M749,372C750,373 751,374 752,375C753,376 753,377 754,378C755,379 756,380 757,381C758,382 759,383 760,384C761,384 762,385 763,386C764,387 765,388 766,389C767,390 768,392 768,393" stroke-width="0.9"/><path d="M699,290C698,290 696,290 695,290C694,290 692,290 691,291C690,291 688,292 687,292C686,293 685,293 683,294C682,294 681,295 680,295C678,295 677,296 676,296C674,296 673,296 672,296C670,296 669,296 668,296C666,296 665,296 664,296C662,296 661,296 660,296C659,296 657,297 656,297" stroke-width="0.7"/><path d="M736,408C736,408 736,410 736,412C737,413 737,414 738,416C738,417 739,418 740,419C740,420 741,421 742,422C743,423 744,425 745,425" stroke-width="0.8"/><path d="M661,377C661,377 660,379 660,380C660,382 659,383 659,384C659,385 658,387 658,388C657,389 656,390 655,391C655,392 654,393 653,394C652,395 650,396 649,396C648,397 647,398 646,399C645,400 644,401 644,402C643,403 642,404 642,406C642,407 641,408 641,410C641,411 641,412 641,414C640,415 640,416 640,417C639,419 638,420 638,421" stroke-width="0.9"/><path d="M635,317C635,318 633,318 632,319C630,319 629,320 628,320C627,321 625,321 624,322C623,323 622,324 621,324C620,325 619,326 618,327C617,328 615,329 615,330" stroke-width="0.7"/><path d="M704,282C704,283 702,284 701,284C699,285 698,285 697,285C696,285 694,285 693,285C692,285 690,285 689,285C688,285 686,285 685,285C684,285 682,285 681,285C680,286 678,286 677,287C676,288 675,288 674,289C673,290 672,291 671,291C670,292 668,293 667,293C666,294 664,294 663,294" stroke-width="1.1"/><path d="M664,440C664,440 664,442 664,444C663,445 664,446 663,448C663,449 663,450 663,452C662,453 662,454 661,455C661,457 660,458 659,459C659,460 658,461 657,462C657,464 656,465 656,466" stroke-width="0.9"/><path d="M633,368C633,369 631,370 631,371C630,372 629,374 628,375C628,376 627,377 626,378C625,379 624,380 623,380C622,381 621,382 619,383C618,383 617,384 616,385C615,385 614,386 613,387C612,388 611,389 610,390C609,391 608,392 608,393" stroke-width="1.0"/><path d="M651,418C650,418 649,420 649,421C648,422 647,423 647,424C646,426 646,427 645,428C645,429 644,431 644,432C644,433 643,435 643,436C643,437 642,439 642,440" stroke-width="0.8"/><path d="M666,300C665,300 663,301 662,301C661,302 660,302 658,303C657,303 656,303 654,303C653,303 652,303 650,303C649,302 648,302 646,302C645,302 644,302 642,302C641,303 640,303 639,303C637,304 636,305 635,305" stroke-width="0.9"/><path d="M706,267C706,267 704,269 703,269C702,270 700,270 699,270C698,271 696,271 695,270C694,270 692,270 691,270C690,269 689,269 687,269C686,268 685,268 683,268C682,268 681,269 679,269C678,269 677,270 676,270C674,271 673,272 672,272C671,273 669,274 668,274" stroke-width="1.1"/><path d="M662,371C661,372 661,374 660,375C659,376 658,377 657,378C657,379 656,380 655,381C654,382 653,383 652,384C651,385 650,386 649,387C648,388 647,389 647,390" stroke-width="1.0"/><path d="M645,430C645,431 645,433 644,434C644,435 644,437 644,438C644,439 644,441 644,442C644,443 643,445 643,446C642,447 642,448 641,449C640,450 639,451 638,452C637,453 637,454 636,455C635,456 634,458 634,459C633,460 632,461 632,462C632,464 632,466 632,466" stroke-width="1.0"/><path d="M643,400C643,400 642,402 641,403C640,404 639,405 638,406C638,407 637,408 636,410C636,411 635,412 635,413C634,414 634,416 634,417C633,418 633,420 633,421C632,422 632,423 632,425C631,426 631,427 630,428C629,430 628,431 628,432" stroke-width="1.2"/><path d="M769,431C769,431 771,433 772,434C773,435 773,436 774,437C775,438 775,439 776,440C777,441 777,443 777,444C778,445 778,447 779,448C779,449 779,450 780,452C780,453 781,454 782,455C782,456 783,457 784,458C785,459 786,461 787,461" stroke-width="0.8"/><path d="M611,372C611,373 609,374 608,375C607,376 606,377 605,377C604,378 603,379 601,379C600,380 599,380 598,381C596,381 595,382 594,382C593,383 592,384 591,384C590,385 589,386 588,387C587,388 586,389 585,390C584,391 583,392 583,393C582,394 581,395 580,396C579,397 577,398 577,399" stroke-width="1.2"/><path d="M744,423C745,423 746,425 747,426C748,427 749,428 750,429C751,429 752,430 753,431C754,432 755,433 755,434C756,435 757,437 757,438C758,439 758,440 758,442C758,443 758,444 759,446C759,447 760,449 760,450" stroke-width="1.1"/><path d="M786,302C786,302 788,304 789,304C790,305 791,305 793,306C794,307 795,307 796,308C798,308 799,309 800,309C801,310 802,311 803,311C804,312 805,313 806,314C807,315 808,316 809,317C810,318 811,319 811,320C812,321 814,323 814,323" stroke-width="1.1"/><path d="M687,285C687,286 685,286 684,287C682,287 681,287 680,288C678,288 677,288 676,289C675,289 674,290 672,291C671,291 670,292 669,293C668,294 667,294 666,295C665,296 664,297 663,298C662,299 661,299 659,300C658,301 657,301 656,302C655,303 653,303 652,304C651,304 650,305 649,305C647,306 646,306 645,307C644,308 642,309 642,309" stroke-width="0.7"/><path d="M654,403C654,404 653,406 652,407C652,408 651,409 650,410C650,411 649,413 648,414C648,415 647,416 647,417C646,418 645,420 645,421C645,422 644,424 644,425" stroke-width="0.9"/><path d="M736,320C737,321 738,322 740,322C741,322 742,323 744,323C745,323 746,323 748,323C749,323 750,323 752,323C753,323 754,323 756,324C757,324 759,325 759,325" stroke-width="0.8"/><path d="M684,410C684,411 684,413 684,414C684,415 684,417 684,418C684,419 683,421 683,422C683,423 682,424 682,426C681,427 681,428 680,429C679,430 678,431 678,433C677,434 676,435 676,436C675,437 675,439 675,440C674,441 674,443 674,444C674,445 674,447 674,448" stroke-width="0.8"/><path d="M673,305C672,305 670,306 669,306C668,307 666,307 665,307C664,308 662,308 661,308C660,308 658,308 657,308C656,308 654,308 653,309C652,309 650,309 649,309" stroke-width="1.2"/><path d="M623,380C622,380 620,382 619,383C618,383 617,384 617,385C616,386 615,387 614,388C613,390 613,391 612,392C611,393 611,394 610,395C609,397 609,398 608,399C607,400 607,401 606,402C605,403 604,404 603,405C602,406 601,407 600,408C600,409 599,410 598,411C597,412 596,413 595,414C594,415 593,417 593,417" stroke-width="1.1"/><path d="M794,315C795,315 797,315 798,316C799,316 800,317 802,317C803,318 804,319 805,320C806,321 806,322 807,323C808,324 809,326 810,326" stroke-width="1.1"/><path d="M777,294C778,294 780,295 781,295C782,296 784,296 785,297C786,298 787,299 788,300C789,301 790,302 791,303C792,303 792,304 794,305C795,306 796,307 797,307C798,308 800,308 801,308C802,309 803,309 805,309C806,309 807,310 809,310C810,310 811,311 812,311C814,312 815,313 816,314" stroke-width="1.2"/><path d="M707,440C707,441 708,443 708,444C708,445 708,446 709,448C709,449 710,450 710,452C710,453 711,454 711,455C711,457 712,458 712,459C712,461 712,462 712,463C712,465 712,466 712,467C712,469 712,470 712,471C712,473 712,474 712,475C712,477 712,478 712,479C713,481 713,482 713,483C714,484 715,486 715,487" stroke-width="0.9"/><path d="M737,425C737,426 737,428 737,429C737,430 737,431 738,433C738,434 739,435 740,436C740,437 741,438 742,439C743,440 744,441 745,442C746,443 747,444 748,445C748,446 749,447 749,449C750,450 750,451 750,453C750,454 750,455 750,457C751,458 751,459 751,461C751,462 751,463 752,464C752,466 753,467 754,468C754,469 756,471 756,471" stroke-width="1.1"/><path d="M769,426C769,426 771,428 772,428C773,429 774,430 775,430C777,431 778,432 779,432C780,433 781,434 782,435C783,436 783,437 784,439C784,440 785,441 785,442C786,444 786,445 786,446" stroke-width="1.1"/><path d="M768,347C769,347 770,349 770,350C771,351 772,352 773,353C774,354 775,355 777,355C778,356 779,356 780,357C781,358 783,358 784,359C785,359 787,360 787,361" stroke-width="0.7"/><path d="M659,419C659,419 658,421 658,422C657,424 657,425 656,426C656,427 655,429 655,430C654,431 653,432 653,433C652,434 651,435 650,436C649,437 648,438 647,439C646,440 645,441 645,442C644,443 643,444 642,445C642,446 641,448 641,449C640,450 640,451 639,453C639,454 639,455 638,457C638,458 637,459 637,460C636,461 635,463 634,464" stroke-width="1.0"/><path d="M767,369C767,370 768,372 769,373C770,374 770,375 771,376C772,377 773,378 774,379C775,379 777,380 778,380C779,381 780,381 781,382C783,382 784,383 785,383C786,384 788,385 789,385C790,386 791,387 791,388C792,389 793,391 794,392" stroke-width="1.0"/><path d="M641,352C640,352 639,353 638,354C637,355 636,357 636,358C635,359 635,360 634,361C633,363 633,364 632,365C632,366 631,367 630,368C629,369 628,370 627,371C626,372 625,373 624,374" stroke-width="1.2"/><path d="M632,300C631,300 629,301 628,301C626,301 625,301 624,301C622,301 621,302 620,302C618,302 617,302 616,303C615,303 613,304 612,304C611,305 609,306 609,306" stroke-width="0.7"/><path d="M777,375C777,375 779,377 780,378C780,379 781,380 782,381C783,382 784,383 784,384C785,385 786,386 786,388C787,389 787,390 788,391C789,392 790,394 790,394" stroke-width="1.0"/><path d="M650,286C650,286 648,286 646,286C645,286 644,286 642,286C641,286 640,287 638,287C637,288 636,289 635,289C634,290 633,291 632,292C630,292 629,293 628,294C627,294 626,295 625,295C623,296 622,296 621,296C619,296 618,296 617,296C615,296 613,297 613,297" stroke-width="1.1"/><path d="M787,301C787,301 789,302 790,303C791,303 793,304 794,304C795,304 797,305 798,305C799,305 800,306 802,306C803,307 805,308 805,308" stroke-width="1.2"/><path d="M654,349C654,349 653,351 652,352C651,353 651,354 650,355C649,356 647,357 646,357C645,358 644,359 643,359C641,359 639,360 639,360" stroke-width="0.9"/><path d="M796,350C797,351 799,351 800,352C801,353 801,354 802,355C803,356 804,357 805,358C806,359 806,361 807,361C808,362 810,363 811,364C812,364 813,365 814,365C816,365 817,366 818,366C820,366 821,366 822,367C824,367 825,368 826,368" stroke-width="1.0"/><path d="M637,328C636,328 635,329 634,330C632,330 631,331 630,331C629,332 627,332 626,333C625,333 624,334 623,334C621,335 620,336 619,337C618,337 617,338 616,339C615,340 614,342 614,342" stroke-width="1.0"/><path d="M654,381C654,382 653,384 653,385C652,386 652,388 651,389C650,390 649,391 649,392C648,393 647,394 646,395C645,396 644,397 643,398C643,399 642,400 641,401C640,402 639,403 639,404C638,406 637,407 637,408C636,409 636,411 636,412C635,413 635,414 634,416C634,417 633,419 633,419" stroke-width="0.9"/><path d="M794,341C795,341 796,343 796,344C797,345 797,347 798,348C798,349 799,350 799,352C800,353 800,354 801,355C802,356 803,357 804,358C805,359 806,360 807,360C808,361 809,362 811,362C812,363 813,364 814,365C815,366 816,367 817,368C817,369 818,370 818,371C819,372 819,374 819,375" stroke-width="0.9"/><path d="M630,360C630,360 628,361 626,361C625,361 624,362 623,362C621,363 620,363 619,364C618,365 617,366 616,367C615,368 614,369 614,370C613,371 612,372 612,373C611,374 610,376 609,377C608,378 607,378 606,379C605,380 603,381 603,381" stroke-width="1.0"/><path d="M727,449C727,450 728,452 728,453C729,454 729,455 729,457C730,458 730,459 730,461C730,462 731,463 731,465C731,466 731,467 731,469C732,470 732,471 732,472C733,474 733,475 734,476C734,477 735,479 735,480C736,481 736,482 737,483C738,485 738,486 739,487C739,488 739,490 740,491C740,492 740,494 740,495C741,496 741,498 741,499" stroke-width="1.1"/><path d="M755,385C756,385 757,387 758,388C759,389 760,390 761,390C762,391 763,392 764,393C765,394 766,395 767,396C768,396 769,397 770,398C771,399 772,401 772,402C773,403 774,404 775,405C775,406 776,407 777,408C777,409 779,411 779,412" stroke-width="0.9"/><path d="M696,430C696,431 696,433 696,434C696,435 696,437 695,438C695,439 695,441 694,442C694,443 693,444 692,445C692,447 691,448 690,449C689,450 688,451 687,452C687,453 686,454 685,455C684,456 684,458 684,459" stroke-width="1.0"/><path d="M652,417C652,418 650,419 650,420C649,422 648,423 648,424C647,425 647,427 647,428C646,429 646,430 646,432C646,433 646,434 645,436C645,437 645,438 644,440C643,441 643,442 642,443C641,444 640,445 639,446C639,447 638,448 637,449C636,450 635,451 634,452C634,453 633,455 633,456" stroke-width="0.8"/><path d="M782,309C783,309 784,311 785,312C786,313 787,314 788,315C789,315 790,316 791,317C792,317 794,318 795,318C796,319 798,320 799,320" stroke-width="1.2"/><path d="M640,333C640,334 638,335 637,336C636,337 635,338 635,339C634,340 633,341 632,342C631,343 630,344 629,345C628,346 627,347 626,347C625,348 623,348 622,349C621,349 620,350 618,350C617,351 616,351 615,352C614,353 612,353 612,354C611,355 609,357 609,357" stroke-width="1.1"/><path d="M655,384C654,385 653,387 653,388C652,389 651,390 650,391C650,392 649,393 648,394C647,395 646,396 645,397C644,398 643,399 642,400C641,400 640,401 639,402C638,403 637,404 636,405C636,407 635,408 634,409C634,410 633,412 633,413" stroke-width="0.7"/><path d="M761,342C761,343 762,344 763,345C764,346 765,347 766,348C767,349 768,350 769,351C770,351 772,352 773,352C774,352 776,352 777,353C778,353 780,353 781,353C782,354 783,354 785,355C786,356 787,356 788,357C789,358 790,360 790,360" stroke-width="1.1"/><path d="M694,452C694,453 694,455 694,456C693,458 693,459 693,460C692,461 692,463 691,464C690,465 690,466 689,467C689,469 688,470 688,471C688,472 687,474 687,475C687,476 687,478 687,479C686,480 686,482 686,483C686,484 686,486 686,487C686,488 686,490 685,491C685,492 684,494 684,495C684,496 683,497 682,498C682,500 681,501 681,502" stroke-width="0.8"/><path d="M789,411C789,411 789,413 789,415C790,416 790,417 790,419C791,420 792,421 792,422C793,423 794,424 795,425C796,426 797,427 797,428C798,429 800,431 800,431" stroke-width="0.8"/><path d="M777,376C778,377 779,378 780,379C781,380 782,381 783,382C784,383 785,384 786,385C787,385 788,386 789,387C790,388 792,388 793,389C794,390 795,390 796,391C797,391 798,392 800,393C801,394 802,395 803,396" stroke-width="0.8"/><path d="M643,322C643,322 641,322 639,322C638,322 637,322 635,322C634,323 633,323 631,323C630,324 629,324 628,325C626,325 625,326 624,327C623,328 621,329 621,329" stroke-width="1.0"/><path d="M715,454C715,454 716,456 716,458C716,459 716,460 716,462C716,463 715,464 715,465C715,467 714,468 714,469C714,471 713,472 713,473C713,475 713,476 713,477C714,479 714,480 715,481C715,482 716,483 716,485C717,486 717,487 718,488C718,490 719,491 719,492C719,493 719,495 719,496C719,497 718,499 718,500" stroke-width="0.9"/><path d="M796,310C797,311 798,312 799,313C800,314 801,315 802,316C803,317 804,318 805,319C806,320 807,320 808,321C809,321 811,322 812,323C813,323 814,324 815,324C817,325 818,326 819,326C820,327 821,328 822,329C823,330 824,331 825,332C825,333 826,334 827,335C828,336 828,337 829,338C830,339 831,340 832,341C833,342 835,343 835,344" stroke-width="0.8"/><path d="M644,361C643,361 642,362 641,364C640,365 640,366 639,367C639,368 638,369 638,371C637,372 637,373 636,374C636,376 635,377 634,378C633,379 633,380 632,381C631,382 630,383 629,384C628,385 627,385 626,386C625,387 624,388 623,389C622,390 621,391 621,393C620,394 620,395 619,396C619,397 618,399 618,400" stroke-width="1.0"/><path d="M751,333C751,334 752,336 753,337C754,338 755,339 756,339C757,340 759,341 760,341C761,342 762,342 763,343C765,344 766,344 767,345C768,345 770,346 770,347" stroke-width="1.0"/><path d="M798,390C798,390 799,392 799,393C799,395 800,396 800,397C801,398 802,400 802,401C803,402 804,403 805,404C806,404 807,405 808,406C809,407 811,408 811,408C812,409 813,410 814,411C815,413 816,414 816,415C817,416 817,418 817,419C817,420 817,421 818,423C818,424 818,425 819,427C819,428 820,429 821,430C821,431 823,433 823,433" stroke-width="1.0"/><path d="M694,437C694,438 693,439 692,441C692,442 692,443 692,445C692,446 692,447 692,449C692,450 693,451 693,453C693,454 693,455 694,456C694,458 694,459 694,460C694,462 693,463 693,464C693,466 692,467 692,468C691,469 690,471 690,472C689,473 689,474 689,476C688,477 688,479 688,480" stroke-width="0.8"/><path d="M793,366C794,366 795,368 796,369C797,370 798,371 798,372C799,373 800,374 800,376C801,377 802,378 802,379C803,380 804,381 805,382C806,383 807,385 807,385" stroke-width="0.8"/><path d="M789,394C789,395 790,397 791,398C791,399 792,401 792,402C793,403 793,404 794,405C794,406 795,408 796,408C797,409 798,410 800,411C801,412 802,412 803,413C804,413 805,414 807,415C808,415 809,416 810,417C810,418 811,419 812,421C812,422 813,424 813,424" stroke-width="0.7"/><path d="M667,363C667,364 665,365 664,366C664,367 663,368 662,370C662,371 661,372 661,373C661,375 660,376 660,377C659,379 659,380 659,381C658,382 658,384 657,385C656,386 656,387 655,388C654,389 653,390 652,391C652,392 650,394 650,394" stroke-width="0.9"/><path d="M624,331C624,332 622,333 622,335C621,336 620,337 619,338C619,339 618,340 617,341C616,342 615,342 613,343C612,344 611,345 610,345C609,346 608,347 607,347C606,348 605,349 604,350C603,351 602,352 601,353C600,354 600,355 599,356C598,358 597,359 597,360" stroke-width="1.0"/><path d="M703,456C703,456 702,458 702,460C703,461 703,462 703,464C703,465 703,466 703,468C703,469 704,470 704,472C704,473 704,474 704,476C704,477 704,478 703,480C703,481 703,482 703,484C702,485 702,487 702,488" stroke-width="0.8"/><path d="M795,377C795,377 797,379 798,380C798,381 799,381 800,382C801,383 802,384 803,385C804,386 805,387 806,388C807,389 808,390 808,391C809,393 809,394 810,395C810,396 811,398 811,399C812,400 812,401 813,403C813,404 814,406 814,406" stroke-width="0.9"/><path d="M714,452C714,453 714,455 714,456C715,457 715,459 715,460C715,461 716,463 716,464C717,465 717,466 718,467C719,469 719,470 720,471C721,472 721,473 722,474C723,476 723,477 724,478C724,479 725,480 725,482C725,483 726,484 726,486C726,487 726,488 727,490C727,491 727,493 728,493" stroke-width="0.9"/><path d="M729,298C729,299 731,300 732,301C733,301 734,302 736,303C737,303 738,304 739,304C741,304 742,305 743,305C744,305 746,306 747,306" stroke-width="1.1"/><path d="M655,425C655,426 655,428 654,429C654,431 654,432 654,433C654,435 654,436 654,437C654,439 653,440 653,441C653,443 652,444 652,445C651,446 650,447 650,448C649,450 648,451 647,452" stroke-width="0.8"/><path d="M769,304C769,304 771,305 772,306C773,306 775,307 776,308C777,308 778,309 779,310C780,310 782,311 783,311C784,312 785,312 787,313C788,313 789,313 790,314C792,314 793,315 794,315C795,316 797,316 798,317C799,318 800,318 801,319C802,320 803,321 804,322C805,322 807,324 807,324" stroke-width="1.0"/><path d="M654,360C653,360 652,362 652,363C651,364 650,366 650,367C649,368 649,369 648,370C647,371 646,372 645,373C645,374 644,375 643,376C642,377 641,378 640,379C639,380 637,381 637,382" stroke-width="0.7"/><path d="M629,321C628,322 627,323 626,324C625,325 624,326 623,327C623,328 622,329 621,330C620,331 620,332 619,333C618,334 617,335 616,336C615,337 613,338 612,338C611,339 609,340 609,340" stroke-width="1.1"/><path d="M639,290C638,290 636,291 635,291C634,292 633,293 631,293C630,294 629,295 628,296C627,296 626,297 625,298C624,299 622,299 621,300" stroke-width="1.1"/><path d="M791,353C792,353 793,355 794,356C795,357 796,358 797,359C798,360 798,361 800,361C801,362 802,363 803,364C804,364 805,364 807,365C808,365 810,366 811,366" stroke-width="1.1"/><path d="M651,346C651,346 650,348 649,349C648,350 648,351 647,352C646,354 645,355 644,355C643,356 642,357 641,358C640,359 639,360 638,361C637,361 636,362 635,363C634,364 633,365 632,366C632,367 631,369 631,370C630,371 630,372 629,374C629,375 628,376 628,377C627,379 627,380 626,381C625,382 624,384 624,384" stroke-width="0.8"/><path d="M661,337C660,337 659,338 658,339C656,339 655,340 654,341C653,341 652,342 650,342C649,343 648,343 647,344C645,344 644,345 643,346C642,346 641,347 640,348C639,349 638,349 637,350C636,351 635,352 634,353C633,354 632,355 631,356C630,357 629,358 628,359" stroke-width="0.8"/><path d="M622,324C621,325 620,326 619,327C618,328 617,329 616,330C615,331 614,332 613,333C612,333 611,334 610,334C608,335 607,335 606,335C605,336 603,336 602,336C601,336 599,337 598,337" stroke-width="1.2"/><path d="M798,346C799,346 800,348 801,349C802,349 803,350 804,351C806,352 807,352 808,353C809,354 810,354 811,355C812,356 813,357 814,358C815,359 816,360 817,361C818,362 818,363 819,364C820,365 821,366 821,367C822,368 824,370 824,370" stroke-width="0.9"/><path d="M724,443C724,444 725,445 726,447C726,448 727,449 728,450C728,451 729,453 729,454C729,455 730,456 730,458C730,459 729,460 729,462C729,463 729,464 728,466C728,467 728,468 728,470C728,471 728,472 728,474C728,475 729,476 729,477C730,479 731,480 731,481" stroke-width="1.2"/><path d="M786,388C787,388 788,390 789,391C790,392 791,393 792,394C793,395 794,396 795,396C796,397 797,398 798,399C799,399 800,400 802,401C803,401 804,402 805,403C806,404 807,405 808,406C808,407 809,408 810,409C811,410 811,411 812,413C813,414 814,415 814,416C815,417 817,418 817,419" stroke-width="0.8"/><path d="M636,425C636,425 636,427 635,429C635,430 634,431 634,432C633,433 632,434 631,435C630,436 629,437 628,438C627,439 626,440 625,441C624,442 623,443 622,444C622,445 621,446 621,447C620,449 620,450 620,451C620,453 620,455 620,455" stroke-width="1.1"/><path d="M624,361C623,362 622,363 620,363C619,364 618,365 617,365C616,366 614,366 613,367C612,368 611,369 610,369C609,370 608,371 607,372C606,373 606,374 605,375C604,377 603,378 602,379C602,380 601,381 600,382C599,383 598,384 597,384C596,385 595,386 594,387C592,387 591,388 590,389C589,389 587,390 587,391" stroke-width="1.1"/><path d="M758,370C759,370 760,372 760,373C761,375 761,376 762,377C762,378 763,380 763,381C764,382 765,383 766,384C766,385 768,386 769,387C770,388 771,388 772,389C773,390 774,390 775,391C776,392 777,393 778,394C779,395 780,396 780,397C781,398 781,400 782,401C782,402 783,404 783,405" stroke-width="1.1"/><path d="M697,264C696,264 694,265 693,265C692,266 691,266 689,266C688,266 687,266 685,266C684,266 683,266 681,267C680,267 679,268 677,268C676,269 675,269 674,270C673,271 672,272 671,273C670,273 669,274 668,275C667,276 665,277 664,277C663,278 662,278 660,278C659,279 657,279 657,279" stroke-width="0.9"/><path d="M748,387C748,388 749,389 750,391C750,392 751,393 751,394C752,395 753,397 754,398C755,399 756,399 757,400C758,401 759,402 760,402C761,403 763,403 764,404C765,405 766,406 767,407C768,407 769,409 770,410" stroke-width="1.1"/><path d="M617,388C617,389 616,390 616,391C615,393 615,394 614,395C613,396 613,398 612,399C612,400 611,401 610,402C609,403 608,404 606,404C605,405 604,405 603,406C602,407 600,407 599,408C598,408 597,409 596,410C595,411 594,412 593,413C593,414 592,415 592,417C591,418 591,420 590,420" stroke-width="1.2"/><path d="M640,381C640,382 639,384 638,385C637,386 637,387 636,388C635,390 635,391 634,392C633,393 632,393 631,394C630,395 628,396 627,396C626,397 625,397 624,398C623,399 621,399 620,400C619,401 618,402 617,403C616,404 615,405 615,406" stroke-width="0.7"/><path d="M641,332C641,332 639,333 638,334C637,334 636,335 634,336C633,337 632,337 631,338C630,339 629,340 628,341C628,342 627,343 626,344C625,345 624,346 623,347C622,348 621,349 621,350C620,351 619,352 617,353C616,353 615,355 614,355" stroke-width="1.1"/><path d="M777,327C778,327 779,328 780,329C781,330 782,331 783,332C784,333 784,334 785,335C786,336 787,337 788,338C789,339 791,339 792,340C793,340 794,341 796,341C797,341 798,341 800,342C801,342 802,343 803,343C805,344 806,344 807,345C808,346 809,348 809,348" stroke-width="0.8"/><path d="M661,401C661,401 660,403 659,404C659,405 658,407 657,408C657,409 656,410 655,411C654,412 654,413 653,414C652,415 651,416 650,417C650,419 649,420 648,421C647,422 647,423 646,424C646,426 645,427 645,428C644,429 644,431 644,432C643,433 642,435 642,436" stroke-width="0.7"/><path d="M625,317C624,317 622,317 621,318C619,318 618,318 617,318C615,318 614,319 613,319C612,320 610,320 609,321C608,322 607,323 606,323C605,324 604,325 603,326C602,327 601,328 600,328C598,329 597,329 596,330C595,330 593,331 592,331C591,331 590,332 588,332C587,332 586,332 584,333C583,333 582,334 581,334C579,335 578,336 577,336" stroke-width="0.7"/><path d="M763,378C763,379 764,380 765,382C766,383 766,384 767,385C767,386 768,388 768,389C768,390 769,392 769,393C769,394 770,396 770,397C770,398 771,399 771,400C772,402 773,403 773,404" stroke-width="1.2"/><path d="M800,346C800,346 802,347 803,347C804,348 805,349 806,350C807,351 808,352 809,353C810,354 810,355 811,356C812,357 813,358 814,359C815,360 816,360 818,361C819,361 821,362 822,362" stroke-width="1.1"/><path d="M645,303C644,304 642,304 641,305C640,305 638,306 637,306C636,307 635,307 633,307C632,308 631,308 629,308C628,308 626,309 625,309" stroke-width="1.2"/><path d="M790,387C790,387 792,388 793,388C795,389 796,390 797,390C798,391 799,391 800,392C802,393 803,394 803,395C804,396 805,397 806,398C807,399 808,400 808,401C809,402 810,403 811,404C812,405 813,406 814,407C815,408 816,409 817,409C818,410 819,411 821,411C822,412 823,412 824,413C825,414 826,414 827,415C828,416 830,418 830,418" stroke-width="1.1"/><path d="M629,398C629,399 628,400 627,401C627,403 626,404 626,405C625,406 625,408 625,409C624,410 624,411 623,413C623,414 623,415 622,417C622,418 621,419 621,420C620,421 619,423 619,424" stroke-width="1.1"/><path d="M751,431C751,432 752,433 753,435C753,436 754,437 754,438C755,439 755,441 756,442C756,443 756,445 756,446C757,447 757,449 757,450C757,451 757,453 757,454C757,455 757,457 758,458C758,459 758,460 759,462C759,463 760,464 760,465C761,467 762,468 762,469C763,470 763,471 764,473C764,474 765,476 765,476" stroke-width="0.8"/><path d="M801,342C801,342 803,344 803,345C804,346 805,347 806,348C806,349 807,350 808,351C809,352 810,354 810,355C811,356 812,357 813,357C814,358 815,359 816,360C817,361 818,362 819,363C820,364 821,364 822,365C823,366 824,368 825,368" stroke-width="0.8"/><path d="M762,311C763,311 765,311 766,312C768,312 769,312 770,312C771,313 773,313 774,314C775,315 776,315 777,316C779,317 780,318 781,318" stroke-width="0.9"/><path d="M715,310C715,310 717,311 719,311C720,311 721,312 722,312C724,313 725,313 726,314C727,314 728,315 730,316C731,316 732,317 733,317C735,317 736,318 737,318C739,318 740,319 741,319C743,319 744,319 745,319C747,319 748,320 749,320" stroke-width="0.9"/><path d="M754,308C755,308 757,308 758,308C759,308 761,308 762,308C763,308 765,308 766,308C767,309 769,309 770,310C771,310 773,312 773,312" stroke-width="1.0"/><path d="M744,392C744,392 746,394 747,395C747,396 748,397 749,398C750,399 751,400 752,401C753,402 753,403 754,405C754,406 754,407 755,409C755,410 755,411 755,412C755,414 755,415 755,416C756,418 756,419 756,420C757,422 757,423 758,424C759,425 760,426 760,427C761,428 763,430 763,430" stroke-width="1.1"/><path d="M645,329C644,329 643,330 642,331C641,332 640,333 639,334C638,335 637,336 636,337C635,338 634,339 633,340C632,341 631,342 630,343C629,344 628,344 627,345C626,346 625,347 624,347C623,348 622,349 621,350C619,350 618,351 617,352C616,353 615,354 614,355" stroke-width="0.8"/><path d="M702,278C701,278 700,279 698,279C697,279 696,280 694,280C693,280 692,280 690,280C689,280 688,280 686,280C685,280 683,281 682,281" stroke-width="0.8"/><path d="M709,448C709,448 710,450 710,452C710,453 710,454 711,455C711,457 712,458 713,459C713,460 714,461 715,462C716,463 716,465 717,466C718,467 718,468 719,469C719,471 719,472 719,473C720,475 720,476 720,477C720,479 720,480 720,481C720,483 720,484 720,485C721,487 721,488 722,489C722,490 723,491 724,493C724,494 726,495 726,496" stroke-width="0.8"/><path d="M665,295C664,295 663,296 662,297C660,298 659,298 658,299C657,299 655,299 654,300C653,300 651,300 650,300C649,301 648,301 646,301C645,302 644,302 642,303C641,303 640,304 639,305C638,306 637,306 636,307C635,308 634,309 633,310C632,311 631,312 630,313C629,314 627,315 627,315" stroke-width="0.7"/><path d="M762,321C763,321 764,323 764,324C765,325 766,326 767,327C768,328 769,329 770,330C771,331 772,331 774,332C775,332 776,333 777,333C779,333 780,334 781,334C782,335 783,336 784,337C785,337 786,338 787,339C788,340 789,342 789,343C790,344 790,345 791,347C791,348 792,349 793,350C794,351 795,353 795,353" stroke-width="0.8"/><path d="M734,271C735,271 737,272 738,272C739,273 740,273 742,273C743,273 744,274 746,273C747,273 748,273 750,273C751,273 752,272 754,272C755,272 756,272 758,272C759,272 760,272 762,272C763,273 764,273 765,274C767,274 768,275 769,275C770,276 772,277 772,277" stroke-width="0.8"/><path d="M635,322C635,323 634,325 633,326C633,327 632,328 632,329C631,331 630,332 629,333C628,334 627,334 626,335C625,336 624,337 623,337C621,338 620,338 619,339C618,339 617,340 615,341C614,341 613,342 613,343C612,344 611,346 610,347C610,348 609,349 609,351C608,352 608,354 608,354" stroke-width="0.9"/><path d="M787,358C788,359 789,360 790,361C791,362 792,364 792,365C793,366 794,367 795,368C796,369 797,369 798,370C799,371 800,372 802,372C803,373 804,373 805,374C806,375 808,376 809,376" stroke-width="1.0"/><path d="M788,339C789,339 791,340 792,341C793,342 794,343 795,344C796,345 796,346 797,347C797,349 798,350 798,351C799,352 799,354 800,355C800,356 801,357 802,358C802,359 803,360 804,361C805,362 807,363 808,363" stroke-width="0.8"/><path d="M677,325C676,326 675,327 674,328C673,329 672,330 671,331C670,332 669,333 668,333C667,334 665,334 664,335C663,335 662,335 660,336C659,336 658,337 657,337C655,338 654,339 653,339C652,340 651,341 651,342C650,344 649,345 649,346C648,347 648,348 647,350C646,351 646,352 645,353C644,354 642,355 642,356" stroke-width="1.2"/><path d="M793,399C793,399 795,401 795,402C796,403 797,404 798,405C799,406 800,407 801,408C801,409 802,410 803,411C803,413 804,414 804,415C804,416 805,418 805,419C806,420 806,421 807,423C807,424 808,426 808,426" stroke-width="1.0"/><path d="M759,398C760,399 761,401 762,402C762,403 763,404 763,405C763,407 764,408 764,409C764,411 764,412 764,413C764,415 764,416 764,417C764,419 765,420 765,421C766,423 766,424 767,425C768,426 768,427 769,428C770,429 771,430 772,431C772,432 773,434 774,435C774,436 775,438 775,439" stroke-width="0.7"/><path d="M752,284C753,284 755,284 756,284C758,284 759,284 760,284C762,285 763,285 764,285C765,286 767,286 768,287C769,287 770,288 771,288C773,289 774,290 775,290C776,291 777,292 779,292C780,293 781,293 782,294C784,294 785,294 786,294C788,295 789,295 790,295C791,295 793,295 794,296C795,296 797,297 798,297" stroke-width="1.0"/><path d="M724,432C724,432 725,434 725,435C726,437 726,438 726,439C726,441 726,442 726,443C726,445 725,446 725,447C724,448 724,450 724,451C723,452 723,454 723,455C723,456 724,458 724,459" stroke-width="0.8"/><path d="M741,273C742,273 744,274 745,274C747,275 748,275 749,276C750,276 751,277 753,277C754,278 755,278 757,279C758,279 759,279 760,279C762,280 763,280 764,280C766,280 768,280 768,280" stroke-width="1.1"/><path d="M679,439C679,439 679,441 679,443C678,444 678,445 677,446C677,448 676,449 676,450C675,451 674,452 674,454C673,455 673,456 672,457C672,459 672,460 672,461C671,463 671,464 671,465C671,467 671,468 671,469C671,471 671,473 671,473" stroke-width="1.1"/><path d="M725,452C726,452 726,454 727,455C727,457 727,458 727,459C728,461 728,462 728,463C728,465 728,466 728,467C727,469 727,470 727,471C727,473 727,474 727,475C727,477 727,478 727,479C727,481 727,482 727,483C727,485 728,486 728,487" stroke-width="0.8"/><path d="M715,443C715,443 715,445 716,447C716,448 717,449 717,450C717,452 717,453 718,454C718,456 718,457 718,458C718,460 718,461 718,462C718,464 718,465 718,466C718,468 718,469 718,470C718,472 718,474 719,474" stroke-width="1.1"/><path d="M695,303C695,303 693,304 691,304C690,305 689,305 688,305C686,305 685,305 684,305C682,306 681,306 680,306C678,306 677,307 676,307C675,308 674,309 672,309C671,310 670,311 669,312C668,313 667,314 666,315C665,315 664,317 663,317" stroke-width="1.0"/><path d="M757,355C757,355 758,357 759,358C759,359 760,361 761,362C762,363 763,364 764,365C765,365 766,366 767,367C768,368 769,368 770,369C771,370 772,371 773,372C774,372 775,373 776,374C777,376 778,377 778,378" stroke-width="0.8"/><path d="M749,310C750,310 752,311 753,311C754,312 756,312 757,312C758,312 760,312 761,313C762,313 763,313 765,314C766,314 767,314 768,315C770,316 771,316 772,317C773,318 774,318 775,319C776,320 778,321 779,321C780,322 781,323 782,323C783,324 785,324 786,325C787,325 789,326 790,326" stroke-width="1.1"/><path d="M785,358C785,359 786,361 786,362C787,364 787,365 788,366C788,367 789,368 790,369C791,370 792,371 793,372C794,373 796,373 797,374C798,375 799,375 800,376C801,377 802,378 802,379C803,381 804,382 804,383C804,384 805,386 805,387C805,388 805,390 805,391C806,392 806,394 807,395C807,396 808,398 809,398" stroke-width="1.2"/><path d="M744,396C745,396 746,398 746,399C747,400 748,402 748,403C749,404 749,405 750,406C750,408 751,409 751,410C751,412 751,414 751,414" stroke-width="1.1"/><path d="M757,313C757,313 759,314 760,314C762,315 763,315 764,315C766,316 767,316 768,316C770,316 771,316 772,316C774,317 775,317 776,318C777,319 778,319 779,320C780,321 781,322 782,323C783,324 783,325 784,326C785,328 786,329 787,329C788,330 790,331 790,332" stroke-width="1.1"/><path d="M765,387C766,387 768,388 769,388C770,389 771,390 772,390C773,391 775,392 776,392C777,393 778,394 779,395C779,396 780,397 781,398C782,400 782,401 783,402C783,403 784,404 785,405C786,406 787,408 787,408" stroke-width="0.8"/><path d="M709,278C709,278 711,279 712,279C714,280 715,280 716,280C718,281 719,281 720,281C722,281 723,282 724,282C725,282 727,283 728,284C729,284 730,285 731,285C733,286 734,287 735,287C736,288 737,289 738,289C740,290 741,290 742,291C743,291 745,292 746,292C747,292 749,293 750,293" stroke-width="0.7"/><path d="M756,353C756,354 758,355 759,356C760,356 761,357 761,359C762,360 763,361 763,362C764,363 764,365 765,366C765,367 766,368 767,369C767,371 768,372 769,373C770,374 771,375 772,375C773,376 774,377 775,378C776,379 777,380 778,380C779,381 780,382 781,383C781,384 782,386 783,387C783,388 784,390 784,391" stroke-width="1.1"/><path d="M748,410C749,411 749,412 750,414C750,415 751,416 751,417C752,419 752,420 753,421C754,422 755,423 756,424C757,425 758,426 759,427C759,428 761,429 761,429C762,430 763,431 764,432C765,434 766,435 766,436" stroke-width="1.0"/><path d="M732,418C732,419 733,420 734,422C734,423 735,424 736,425C737,426 737,427 738,428C739,429 739,430 740,432C740,433 740,434 740,436C741,437 740,438 740,440C740,441 740,443 740,444" stroke-width="0.8"/><path d="M666,320C665,320 663,320 662,320C661,320 659,321 658,321C657,321 655,322 654,322C653,323 652,324 651,324C650,325 648,326 647,326C646,327 645,327 643,328C642,328 641,329 640,329C638,329 637,329 636,330C634,330 633,330 632,330C630,331 629,331 628,331" stroke-width="1.2"/><path d="M691,279C691,280 689,281 688,281C687,282 685,283 684,283C683,284 682,284 680,284C679,285 678,285 677,285C675,286 673,286 673,287" stroke-width="0.9"/><path d="M725,289C725,290 727,291 728,292C729,292 730,293 731,294C732,295 733,295 734,296C736,296 737,297 738,297C739,297 741,298 742,298C743,298 745,298 746,299C747,299 749,299 750,300C751,300 753,302 753,302" stroke-width="1.1"/><path d="M783,307C784,307 786,307 787,307C788,307 790,307 791,308C792,308 794,309 795,309C796,310 797,311 798,311C799,312 800,313 801,314C802,315 803,315 805,316C806,317 807,317 808,318C809,318 811,318 812,319C813,319 815,319 816,319" stroke-width="1.1"/><path d="M790,364C791,365 792,366 792,368C793,369 794,370 795,371C796,372 797,373 798,373C799,374 800,375 801,375C802,376 804,377 805,377C806,378 807,378 808,379C810,380 811,381 812,381C813,382 814,383 814,384C815,386 816,387 816,388C817,389 818,390 818,391C819,393 820,394 820,395C821,396 823,397 823,398" stroke-width="1.0"/><path d="M667,341C666,341 665,342 663,343C662,343 661,344 660,344C658,344 657,344 656,344C654,344 653,344 652,345C650,345 649,345 648,346C646,346 645,347 644,348C643,348 642,349 641,350C640,351 639,352 638,353C637,354 637,355 636,356C634,357 633,358 632,358" stroke-width="0.7"/><path d="M704,297C703,297 701,298 700,298C699,298 697,298 696,299C695,299 693,299 692,299C691,300 689,300 688,300C687,301 686,301 685,302C683,302 682,303 681,304C680,304 678,305 677,305C676,306 675,306 673,307C672,307 671,307 670,308C668,308 667,308 666,308C664,309 663,309 662,309C660,310 659,310 658,310" stroke-width="1.2"/><path d="M709,263C710,264 711,265 713,265C714,265 715,266 717,266C718,266 719,266 721,266C722,265 723,265 724,265C726,265 727,265 728,265C730,265 731,266 732,266C734,266 735,267 736,268C737,268 738,269 740,270C741,270 742,271 743,271" stroke-width="1.1"/><path d="M769,307C770,307 772,308 773,308C774,309 775,309 776,310C778,310 779,311 780,312C781,312 782,313 783,314C785,314 786,315 787,315C789,315 790,315 791,315C792,316 794,316 795,316C796,316 798,316 799,316C800,316 802,317 803,317" stroke-width="0.9"/><path d="M798,360C798,360 800,361 801,362C802,362 803,363 804,364C806,365 807,366 807,366C808,367 809,369 810,370C811,371 811,372 812,373C813,374 814,376 814,376" stroke-width="0.9"/><path d="M712,265C713,265 715,266 716,267C717,267 718,268 719,269C720,270 721,270 723,271C724,272 725,272 726,273C728,273 729,273 730,273C731,274 733,274 734,274C735,274 737,274 738,274" stroke-width="0.9"/><path d="M784,319C785,320 786,320 788,320C789,320 790,321 792,321C793,321 794,322 795,322C797,323 798,324 799,325C800,325 801,326 802,327C803,328 804,329 805,330C806,331 807,332 808,333C809,333 810,334 811,334C812,335 814,335 815,336C816,336 818,336 819,337C820,337 821,338 823,338C824,339 825,339 826,340C827,341 829,342 829,342" stroke-width="1.1"/><path d="M767,348C768,349 768,351 769,352C769,353 770,354 770,355C771,357 772,358 773,359C773,360 774,361 775,362C776,363 777,363 779,364C780,365 781,365 782,366C783,367 784,368 785,369C786,370 787,371 787,372C788,373 788,375 789,376C789,377 789,379 790,380C790,381 790,382 791,384C791,385 792,387 792,387" stroke-width="0.8"/><path d="M743,395C744,395 744,397 745,399C745,400 745,401 745,403C744,404 744,405 744,407C744,408 744,409 744,411C744,412 744,413 745,415C745,416 746,418 746,418" stroke-width="0.7"/><path d="M758,347C759,348 760,349 761,350C762,351 762,352 763,353C765,354 766,355 767,355C768,356 769,356 770,357C772,357 773,358 774,358C775,359 777,359 778,360C779,360 780,361 781,362C782,363 783,365 784,365" stroke-width="0.7"/><path d="M754,374C754,374 756,375 757,376C758,377 759,378 759,379C760,381 761,382 761,383C762,384 762,386 762,387C763,388 763,389 763,391C764,392 765,393 765,394C766,395 767,396 768,397C769,398 770,399 771,400C772,401 773,401 774,402C775,403 776,404 777,405C778,406 779,407 780,408C780,409 781,411 781,412C781,413 782,415 782,416" stroke-width="1.0"/><path d="M734,291C735,291 737,292 738,292C739,293 741,293 742,293C743,293 745,293 746,293C747,293 749,293 750,293C751,294 753,294 754,294C755,294 757,295 758,295C759,296 760,297 761,297C762,298 763,299 764,300C766,301 767,302 768,302" stroke-width="1.0"/><path d="M666,287C666,287 664,288 663,288C661,289 660,289 659,290C658,290 656,290 655,291C654,291 652,291 651,291C650,291 648,291 647,291C646,291 644,291 643,291C642,291 640,291 639,292C638,292 636,292 635,293C634,293 633,294 632,295C630,295 629,296 628,297C627,297 626,298 625,298C623,299 622,299 621,300C619,300 617,300 617,301" stroke-width="0.9"/><path d="M660,296C660,295 658,295 656,295C655,294 654,294 652,294C651,294 650,294 648,295C647,295 646,295 645,296C643,297 642,298 641,298" stroke-width="1.2"/></g>
</g>
<defs><filter id="fb" x="-30%" y="-30%" width="160%" height="160%"><feGaussianBlur stdDeviation="2"/></filter><filter id="fb2" x="-30%" y="-30%" width="160%" height="160%"><feGaussianBlur stdDeviation="1.3"/></filter></defs>
<g clip-path="url(#lc)" stroke-linecap="round" fill="none">
<ellipse cx="708" cy="370" rx="42" ry="50" fill="#aa9835" filter="url(#fb)"/>
<g filter="url(#fb2)" stroke="none">
<ellipse cx="706" cy="322" rx="24" ry="10" fill="#b6a43b"/>
<ellipse cx="688" cy="330" rx="13" ry="5" transform="rotate(12 688 330)" fill="#d0be47"/>
<ellipse cx="734" cy="341" rx="13" ry="5" transform="rotate(24 734 341)" fill="#ccba45"/>
<path d="M697,336 L716,337 L724,364 L689,364 Z" fill="#bcaa3e"/>
<ellipse cx="704" cy="368" rx="15" ry="6" fill="#cdbb47"/>
<ellipse cx="668" cy="370" rx="7" ry="16" fill="#bfad3f"/>
<ellipse cx="750" cy="375" rx="6" ry="16" fill="#b9a73c"/>
<ellipse cx="708" cy="398" rx="28" ry="6" fill="#b09e39"/>
<ellipse cx="681" cy="340" rx="10" ry="5" fill="#675b18"/>
<ellipse cx="738" cy="349" rx="10" ry="5" transform="rotate(15 738 349)" fill="#675b18"/>
<ellipse cx="686" cy="356" rx="4" ry="13" fill="#786a1f"/>
<ellipse cx="723" cy="358" rx="4" ry="12" fill="#7d6f22"/>
<ellipse cx="686" cy="378" rx="6" ry="7" fill="#5c5216"/>
<ellipse cx="712" cy="394" rx="14" ry="5" fill="#675b18"/>
<ellipse cx="706" cy="408" rx="18" ry="3.5" fill="#62571a"/>
</g>
<path d="M706,388 q12,-2 17,-10" stroke="#dccb4c" stroke-width="2.2"/>
<path d="M731,356 q8,0 15,-6" stroke="#d4c248" stroke-width="1.5"/>
<path d="M671,344 q9,2 18,-2" stroke="#c8b642" stroke-width="1.2"/>
<g stroke-opacity="0.8"><path d="M677,398Q678,402 681,405" stroke="#7f7220" stroke-width="0.7"/><path d="M711,412Q712,416 713,422" stroke="#c8b63e" stroke-width="1.1"/><path d="M726,365Q721,364 716,365" stroke="#74671c" stroke-width="0.9"/><path d="M726,393Q725,393 723,396" stroke="#d4c244" stroke-width="0.8"/><path d="M713,352Q712,356 713,357" stroke="#c8b63e" stroke-width="0.6"/><path d="M680,396Q683,401 683,404" stroke="#d4c244" stroke-width="0.7"/><path d="M706,417Q708,422 708,427" stroke="#74671c" stroke-width="1.1"/><path d="M708,349Q709,351 708,354" stroke="#dccb48" stroke-width="0.6"/><path d="M710,383Q712,388 716,392" stroke="#74671c" stroke-width="1.0"/><path d="M693,408Q692,412 693,414" stroke="#c8b63e" stroke-width="1.0"/><path d="M696,398Q699,402 698,408" stroke="#c8b63e" stroke-width="1.1"/><path d="M707,356Q710,359 714,363" stroke="#dccb48" stroke-width="1.0"/><path d="M706,418Q707,421 708,424" stroke="#c8b63e" stroke-width="0.8"/><path d="M742,392Q742,393 740,397" stroke="#c8b63e" stroke-width="1.1"/><path d="M710,404Q712,407 712,409" stroke="#74671c" stroke-width="0.9"/><path d="M701,384Q699,385 696,387" stroke="#d4c244" stroke-width="0.8"/><path d="M686,350Q690,354 694,357" stroke="#c8b63e" stroke-width="0.7"/><path d="M722,323Q722,325 721,329" stroke="#c8b63e" stroke-width="0.7"/><path d="M741,333Q738,337 735,340" stroke="#d4c244" stroke-width="1.0"/><path d="M678,401Q681,403 684,408" stroke="#dccb48" stroke-width="0.7"/><path d="M707,383Q707,384 706,387" stroke="#7f7220" stroke-width="0.8"/><path d="M726,376Q727,380 726,381" stroke="#74671c" stroke-width="0.6"/><path d="M723,362Q719,365 715,366" stroke="#dccb48" stroke-width="0.9"/><path d="M727,369Q725,373 727,379" stroke="#dccb48" stroke-width="0.6"/><path d="M687,385Q689,388 689,392" stroke="#74671c" stroke-width="0.8"/><path d="M670,370Q671,376 670,379" stroke="#7f7220" stroke-width="0.9"/><path d="M725,339Q722,341 718,341" stroke="#d4c244" stroke-width="0.7"/><path d="M728,318Q728,322 727,326" stroke="#dccb48" stroke-width="1.1"/><path d="M702,397Q702,400 703,405" stroke="#d4c244" stroke-width="0.8"/><path d="M676,397Q678,400 682,403" stroke="#dccb48" stroke-width="0.8"/><path d="M702,389Q704,390 706,393" stroke="#c8b63e" stroke-width="1.1"/><path d="M682,353Q679,356 678,362" stroke="#7f7220" stroke-width="0.6"/><path d="M718,400Q718,401 718,404" stroke="#74671c" stroke-width="0.7"/><path d="M677,382Q675,383 671,384" stroke="#dccb48" stroke-width="0.8"/><path d="M713,336Q710,340 705,342" stroke="#d4c244" stroke-width="0.9"/><path d="M669,364Q664,366 659,370" stroke="#dccb48" stroke-width="1.0"/><path d="M718,389Q718,393 719,399" stroke="#74671c" stroke-width="0.7"/><path d="M736,396Q736,397 735,400" stroke="#74671c" stroke-width="0.6"/><path d="M725,394Q726,396 724,398" stroke="#dccb48" stroke-width="0.7"/><path d="M701,349Q705,352 707,354" stroke="#c8b63e" stroke-width="0.6"/><path d="M696,370Q691,371 689,373" stroke="#d4c244" stroke-width="0.7"/><path d="M694,388Q693,392 691,397" stroke="#7f7220" stroke-width="0.9"/><path d="M700,336Q700,340 700,342" stroke="#74671c" stroke-width="1.1"/><path d="M684,386Q687,390 688,394" stroke="#d4c244" stroke-width="1.1"/><path d="M730,334Q731,337 728,341" stroke="#c8b63e" stroke-width="0.7"/><path d="M701,392Q698,394 694,398" stroke="#dccb48" stroke-width="1.0"/><path d="M682,370Q687,371 692,371" stroke="#74671c" stroke-width="0.9"/><path d="M736,405Q732,409 729,413" stroke="#d4c244" stroke-width="1.0"/><path d="M742,346Q739,349 736,349" stroke="#7f7220" stroke-width="1.0"/><path d="M706,313Q707,318 707,323" stroke="#dccb48" stroke-width="0.9"/><path d="M703,402Q703,405 705,408" stroke="#dccb48" stroke-width="1.0"/><path d="M669,347Q669,349 667,352" stroke="#7f7220" stroke-width="0.7"/><path d="M682,334Q683,338 685,342" stroke="#74671c" stroke-width="1.1"/><path d="M740,344Q742,348 746,351" stroke="#7f7220" stroke-width="0.9"/><path d="M717,365Q716,371 717,376" stroke="#74671c" stroke-width="0.7"/><path d="M699,365Q697,369 695,374" stroke="#c8b63e" stroke-width="0.6"/><path d="M721,367Q725,368 727,372" stroke="#dccb48" stroke-width="0.7"/><path d="M726,346Q721,345 719,347" stroke="#c8b63e" stroke-width="1.0"/><path d="M711,321Q710,327 711,331" stroke="#7f7220" stroke-width="0.6"/><path d="M734,335Q732,339 731,341" stroke="#7f7220" stroke-width="0.9"/><path d="M737,360Q733,361 727,361" stroke="#dccb48" stroke-width="0.6"/><path d="M733,384Q736,388 742,389" stroke="#dccb48" stroke-width="1.0"/><path d="M711,328Q712,332 711,337" stroke="#74671c" stroke-width="0.6"/><path d="M688,318Q691,321 692,327" stroke="#74671c" stroke-width="0.8"/><path d="M687,397Q688,400 688,401" stroke="#7f7220" stroke-width="0.9"/><path d="M720,369Q718,373 719,376" stroke="#74671c" stroke-width="0.9"/><path d="M702,409Q702,412 705,416" stroke="#c8b63e" stroke-width="1.0"/><path d="M693,395Q695,400 697,403" stroke="#7f7220" stroke-width="1.0"/><path d="M679,400Q680,401 681,405" stroke="#74671c" stroke-width="1.0"/><path d="M724,409Q723,414 720,419" stroke="#74671c" stroke-width="0.8"/><path d="M677,359Q676,363 675,364" stroke="#7f7220" stroke-width="1.0"/><path d="M683,322Q685,323 687,327" stroke="#7f7220" stroke-width="0.7"/><path d="M733,376Q738,375 742,377" stroke="#d4c244" stroke-width="1.0"/><path d="M672,374Q675,377 677,380" stroke="#dccb48" stroke-width="1.1"/><path d="M713,343Q717,345 720,344" stroke="#dccb48" stroke-width="0.9"/><path d="M691,400Q691,404 691,405" stroke="#74671c" stroke-width="0.7"/><path d="M735,328Q735,330 732,331" stroke="#7f7220" stroke-width="0.6"/><path d="M736,329Q735,334 732,336" stroke="#7f7220" stroke-width="1.0"/><path d="M718,333Q718,337 718,342" stroke="#dccb48" stroke-width="0.8"/><path d="M735,346Q732,345 731,347" stroke="#dccb48" stroke-width="1.0"/><path d="M705,401Q705,404 704,407" stroke="#d4c244" stroke-width="1.0"/><path d="M728,371Q725,371 723,373" stroke="#d4c244" stroke-width="1.0"/><path d="M675,391Q675,395 673,395" stroke="#dccb48" stroke-width="0.6"/><path d="M707,342Q707,345 705,350" stroke="#c8b63e" stroke-width="0.7"/><path d="M700,348Q702,349 704,353" stroke="#7f7220" stroke-width="0.9"/><path d="M744,368Q743,372 744,375" stroke="#74671c" stroke-width="1.0"/><path d="M725,348Q724,353 722,357" stroke="#74671c" stroke-width="0.7"/><path d="M679,378Q677,378 673,379" stroke="#dccb48" stroke-width="0.8"/><path d="M711,339Q715,343 718,347" stroke="#d4c244" stroke-width="1.0"/><path d="M714,314Q711,318 712,319" stroke="#7f7220" stroke-width="1.1"/><path d="M734,338Q735,342 735,345" stroke="#74671c" stroke-width="0.9"/><path d="M679,332Q680,338 682,342" stroke="#74671c" stroke-width="1.1"/><path d="M707,385Q705,385 703,386" stroke="#74671c" stroke-width="0.9"/><path d="M709,341Q715,343 718,346" stroke="#c8b63e" stroke-width="0.7"/><path d="M715,348Q715,352 715,359" stroke="#d4c244" stroke-width="1.0"/><path d="M717,329Q717,332 717,338" stroke="#c8b63e" stroke-width="0.7"/><path d="M748,357Q748,359 746,362" stroke="#d4c244" stroke-width="0.9"/><path d="M681,375Q682,375 685,377" stroke="#dccb48" stroke-width="1.0"/><path d="M693,360Q692,363 689,364" stroke="#d4c244" stroke-width="1.0"/><path d="M685,354Q684,357 685,360" stroke="#dccb48" stroke-width="1.0"/><path d="M736,361Q736,364 734,365" stroke="#74671c" stroke-width="0.7"/><path d="M686,383Q687,386 685,388" stroke="#dccb48" stroke-width="0.8"/><path d="M695,412Q695,416 696,418" stroke="#d4c244" stroke-width="1.1"/><path d="M708,394Q708,398 709,403" stroke="#7f7220" stroke-width="0.7"/><path d="M734,325Q731,330 730,334" stroke="#7f7220" stroke-width="0.9"/><path d="M672,375Q670,377 667,377" stroke="#dccb48" stroke-width="0.7"/><path d="M735,337Q734,337 732,339" stroke="#74671c" stroke-width="0.9"/><path d="M717,405Q715,408 715,415" stroke="#7f7220" stroke-width="1.1"/><path d="M735,363Q741,363 746,365" stroke="#d4c244" stroke-width="0.9"/><path d="M713,385Q716,390 718,392" stroke="#7f7220" stroke-width="1.0"/><path d="M737,398Q735,399 734,404" stroke="#7f7220" stroke-width="1.0"/><path d="M714,417Q714,419 714,422" stroke="#d4c244" stroke-width="1.1"/><path d="M686,399Q687,404 688,408" stroke="#74671c" stroke-width="0.6"/><path d="M693,377Q695,380 695,381" stroke="#dccb48" stroke-width="1.1"/><path d="M677,377Q679,379 677,383" stroke="#74671c" stroke-width="1.0"/><path d="M715,370Q712,374 711,379" stroke="#dccb48" stroke-width="0.8"/><path d="M694,362Q691,362 688,363" stroke="#7f7220" stroke-width="0.7"/><path d="M740,352Q738,357 738,362" stroke="#7f7220" stroke-width="0.9"/><path d="M699,393Q699,395 701,397" stroke="#7f7220" stroke-width="0.6"/><path d="M704,372Q705,378 707,382" stroke="#dccb48" stroke-width="0.8"/><path d="M721,326Q718,329 718,333" stroke="#7f7220" stroke-width="1.1"/><path d="M701,342Q697,341 695,343" stroke="#dccb48" stroke-width="1.0"/><path d="M679,350Q679,356 680,358" stroke="#dccb48" stroke-width="0.8"/><path d="M737,336Q736,337 735,340" stroke="#7f7220" stroke-width="0.8"/><path d="M718,356Q724,358 728,359" stroke="#74671c" stroke-width="0.9"/><path d="M697,383Q694,384 690,387" stroke="#7f7220" stroke-width="1.0"/><path d="M690,321Q691,323 690,327" stroke="#c8b63e" stroke-width="0.7"/><path d="M724,364Q719,363 715,364" stroke="#dccb48" stroke-width="0.6"/><path d="M707,388Q712,389 715,392" stroke="#d4c244" stroke-width="1.1"/><path d="M714,392Q713,398 714,402" stroke="#7f7220" stroke-width="0.6"/><path d="M678,354Q679,358 681,362" stroke="#dccb48" stroke-width="0.8"/><path d="M690,371Q687,375 684,379" stroke="#7f7220" stroke-width="0.8"/><path d="M728,377Q732,379 737,380" stroke="#dccb48" stroke-width="1.0"/><path d="M741,355Q738,356 736,358" stroke="#c8b63e" stroke-width="1.0"/><path d="M694,366Q696,367 700,368" stroke="#c8b63e" stroke-width="0.8"/><path d="M721,414Q720,415 719,419" stroke="#d4c244" stroke-width="1.1"/><path d="M695,364Q697,368 699,369" stroke="#d4c244" stroke-width="0.7"/><path d="M683,373Q680,375 678,374" stroke="#c8b63e" stroke-width="0.8"/><path d="M733,364Q733,368 735,372" stroke="#c8b63e" stroke-width="0.8"/><path d="M697,365Q702,368 705,369" stroke="#d4c244" stroke-width="1.1"/><path d="M703,355Q705,361 704,365" stroke="#74671c" stroke-width="0.9"/><path d="M687,332Q686,335 688,336" stroke="#7f7220" stroke-width="0.8"/><path d="M711,388Q707,389 706,389" stroke="#7f7220" stroke-width="1.0"/><path d="M736,332Q736,334 733,337" stroke="#c8b63e" stroke-width="0.7"/><path d="M729,382Q724,383 722,385" stroke="#c8b63e" stroke-width="0.8"/><path d="M738,366Q739,369 741,372" stroke="#7f7220" stroke-width="0.9"/><path d="M707,322Q708,324 708,326" stroke="#c8b63e" stroke-width="0.6"/><path d="M735,331Q734,334 732,336" stroke="#c8b63e" stroke-width="1.0"/><path d="M736,378Q738,381 740,384" stroke="#7f7220" stroke-width="1.0"/><path d="M705,320Q705,321 705,324" stroke="#7f7220" stroke-width="0.8"/><path d="M727,360Q728,362 732,361" stroke="#d4c244" stroke-width="0.6"/><path d="M728,367Q729,371 726,373" stroke="#dccb48" stroke-width="1.0"/><path d="M719,373Q721,375 725,379" stroke="#c8b63e" stroke-width="1.0"/><path d="M684,375Q685,379 687,384" stroke="#dccb48" stroke-width="0.8"/><path d="M673,372Q671,371 668,373" stroke="#dccb48" stroke-width="0.6"/><path d="M673,387Q675,387 677,389" stroke="#7f7220" stroke-width="0.8"/><path d="M715,365Q716,369 716,373" stroke="#7f7220" stroke-width="1.1"/><path d="M693,387Q696,392 698,395" stroke="#c8b63e" stroke-width="0.7"/><path d="M693,317Q693,321 694,322" stroke="#d4c244" stroke-width="0.6"/><path d="M713,358Q709,359 705,361" stroke="#7f7220" stroke-width="0.6"/><path d="M705,387Q701,390 697,392" stroke="#d4c244" stroke-width="0.7"/><path d="M694,352Q697,353 703,355" stroke="#d4c244" stroke-width="0.7"/><path d="M719,354Q724,356 728,357" stroke="#d4c244" stroke-width="0.7"/><path d="M721,408Q721,409 720,412" stroke="#d4c244" stroke-width="1.0"/><path d="M708,336Q704,342 701,345" stroke="#7f7220" stroke-width="1.0"/><path d="M714,332Q714,339 713,343" stroke="#d4c244" stroke-width="1.0"/><path d="M679,377Q677,380 672,383" stroke="#dccb48" stroke-width="0.8"/><path d="M720,361Q715,361 709,362" stroke="#d4c244" stroke-width="1.0"/><path d="M694,405Q696,411 696,415" stroke="#dccb48" stroke-width="1.1"/><path d="M679,401Q679,403 682,405" stroke="#74671c" stroke-width="0.6"/><path d="M725,322Q725,326 723,328" stroke="#dccb48" stroke-width="0.8"/><path d="M682,402Q683,407 686,412" stroke="#c8b63e" stroke-width="0.8"/><path d="M678,396Q679,399 681,403" stroke="#dccb48" stroke-width="0.9"/><path d="M674,386Q679,388 681,388" stroke="#7f7220" stroke-width="0.8"/><path d="M704,323Q703,328 704,333" stroke="#d4c244" stroke-width="1.0"/><path d="M730,405Q727,410 726,413" stroke="#dccb48" stroke-width="0.7"/><path d="M721,362Q722,368 724,372" stroke="#c8b63e" stroke-width="0.9"/><path d="M671,351Q669,350 666,352" stroke="#c8b63e" stroke-width="0.9"/><path d="M710,349Q711,354 711,357" stroke="#d4c244" stroke-width="0.9"/><path d="M727,327Q726,331 725,337" stroke="#7f7220" stroke-width="1.0"/><path d="M680,399Q683,403 683,407" stroke="#d4c244" stroke-width="0.7"/><path d="M732,407Q729,408 728,412" stroke="#dccb48" stroke-width="0.6"/><path d="M704,382Q706,380 709,382" stroke="#74671c" stroke-width="0.9"/><path d="M712,324Q712,328 709,332" stroke="#dccb48" stroke-width="1.0"/><path d="M708,312Q708,315 709,318" stroke="#dccb48" stroke-width="1.1"/><path d="M693,412Q695,417 696,420" stroke="#74671c" stroke-width="1.0"/><path d="M711,391Q709,391 705,394" stroke="#74671c" stroke-width="0.9"/><path d="M680,390Q676,392 674,393" stroke="#74671c" stroke-width="1.1"/><path d="M690,371Q692,373 692,376" stroke="#dccb48" stroke-width="0.7"/><path d="M679,378Q680,379 684,381" stroke="#74671c" stroke-width="0.9"/><path d="M732,367Q731,371 732,372" stroke="#7f7220" stroke-width="0.7"/><path d="M668,356Q665,358 663,362" stroke="#c8b63e" stroke-width="1.0"/><path d="M681,363Q681,365 682,368" stroke="#d4c244" stroke-width="0.9"/><path d="M685,330Q684,333 686,336" stroke="#74671c" stroke-width="1.1"/><path d="M726,349Q730,351 735,354" stroke="#c8b63e" stroke-width="0.9"/><path d="M687,337Q687,340 689,341" stroke="#d4c244" stroke-width="0.8"/><path d="M720,404Q720,408 717,410" stroke="#dccb48" stroke-width="0.9"/><path d="M687,385Q692,385 693,386" stroke="#7f7220" stroke-width="0.8"/><path d="M672,343Q674,343 679,344" stroke="#d4c244" stroke-width="1.0"/><path d="M738,386Q743,388 746,392" stroke="#d4c244" stroke-width="0.7"/><path d="M723,343Q725,345 725,348" stroke="#74671c" stroke-width="0.9"/><path d="M738,377Q741,379 744,384" stroke="#dccb48" stroke-width="1.0"/><path d="M744,351Q742,355 739,356" stroke="#d4c244" stroke-width="0.8"/><path d="M714,341Q709,343 705,345" stroke="#74671c" stroke-width="0.7"/><path d="M711,383Q710,387 705,392" stroke="#d4c244" stroke-width="0.7"/><path d="M677,351Q680,355 681,356" stroke="#74671c" stroke-width="1.0"/><path d="M705,327Q705,331 705,334" stroke="#74671c" stroke-width="0.8"/><path d="M728,368Q725,370 722,374" stroke="#c8b63e" stroke-width="0.9"/><path d="M679,368Q683,369 686,371" stroke="#c8b63e" stroke-width="0.7"/><path d="M726,362Q724,364 719,364" stroke="#74671c" stroke-width="0.6"/><path d="M735,380Q738,383 740,386" stroke="#dccb48" stroke-width="0.8"/><path d="M746,381Q749,382 753,383" stroke="#dccb48" stroke-width="1.0"/><path d="M710,329Q709,332 710,337" stroke="#7f7220" stroke-width="0.8"/><path d="M709,334Q709,337 709,339" stroke="#d4c244" stroke-width="1.0"/><path d="M685,404Q687,410 687,414" stroke="#7f7220" stroke-width="0.8"/><path d="M671,389Q670,392 671,394" stroke="#dccb48" stroke-width="0.8"/><path d="M685,345Q683,349 682,351" stroke="#74671c" stroke-width="1.0"/><path d="M743,358Q740,360 736,359" stroke="#c8b63e" stroke-width="1.0"/><path d="M733,372Q735,376 739,381" stroke="#c8b63e" stroke-width="0.7"/><path d="M736,388Q733,389 729,394" stroke="#c8b63e" stroke-width="0.9"/><path d="M706,394Q707,399 707,403" stroke="#d4c244" stroke-width="1.1"/><path d="M688,341Q684,341 681,341" stroke="#74671c" stroke-width="0.7"/><path d="M695,335Q693,342 694,346" stroke="#dccb48" stroke-width="0.9"/><path d="M672,354Q676,355 680,358" stroke="#74671c" stroke-width="1.0"/><path d="M675,369Q679,372 683,373" stroke="#c8b63e" stroke-width="1.0"/><path d="M733,374Q731,378 731,383" stroke="#dccb48" stroke-width="0.6"/><path d="M716,320Q715,322 715,325" stroke="#7f7220" stroke-width="0.9"/><path d="M723,372Q727,374 732,377" stroke="#d4c244" stroke-width="0.6"/><path d="M711,333Q713,337 713,343" stroke="#d4c244" stroke-width="0.9"/><path d="M723,401Q719,406 718,409" stroke="#7f7220" stroke-width="0.8"/><path d="M691,411Q691,415 692,416" stroke="#c8b63e" stroke-width="0.7"/><path d="M685,336Q688,340 693,342" stroke="#d4c244" stroke-width="1.0"/><path d="M670,368Q666,368 664,369" stroke="#74671c" stroke-width="1.0"/><path d="M726,343Q720,343 717,344" stroke="#dccb48" stroke-width="1.1"/><path d="M727,412Q723,415 721,421" stroke="#d4c244" stroke-width="0.8"/><path d="M714,388Q715,391 716,393" stroke="#dccb48" stroke-width="0.6"/><path d="M744,356Q746,362 745,366" stroke="#d4c244" stroke-width="0.9"/><path d="M699,387Q694,389 689,389" stroke="#74671c" stroke-width="0.8"/><path d="M701,349Q696,351 694,350" stroke="#74671c" stroke-width="0.9"/><path d="M732,356Q729,357 729,361" stroke="#c8b63e" stroke-width="0.8"/><path d="M745,347Q749,351 752,353" stroke="#dccb48" stroke-width="1.0"/><path d="M739,398Q736,402 734,407" stroke="#c8b63e" stroke-width="0.6"/><path d="M668,370Q666,371 663,374" stroke="#7f7220" stroke-width="0.6"/><path d="M726,400Q724,405 721,409" stroke="#7f7220" stroke-width="0.9"/><path d="M727,399Q727,403 726,410" stroke="#d4c244" stroke-width="0.8"/><path d="M730,396Q729,399 726,402" stroke="#d4c244" stroke-width="0.7"/><path d="M713,345Q716,347 717,348" stroke="#74671c" stroke-width="0.7"/><path d="M721,391Q724,395 726,397" stroke="#7f7220" stroke-width="0.6"/><path d="M715,399Q713,404 713,409" stroke="#74671c" stroke-width="0.9"/><path d="M680,370Q681,373 684,374" stroke="#d4c244" stroke-width="0.9"/></g>
<path d="M690,364 Q704,356 720,364" stroke="#dccb4a" stroke-width="2.2"/>
<path d="M672,330 Q684,322 698,330" stroke="#dccb4a" stroke-width="2"/>
<path d="M722,338 Q736,334 750,346" stroke="#d8c646" stroke-width="2"/>
<path d="M697,340 Q700,352 694,364" stroke="#d2c046" stroke-width="1.5"/>
<path d="M707,415q2,6 -5,11" stroke="#d4c248" stroke-width="1.0"/>
<path d="M737,409q1,8 -5,16" stroke="#d4c248" stroke-width="0.9"/>
<path d="M724,416q-2,9 -3,17" stroke="#d4c248" stroke-width="0.8"/>
<path d="M710,425q2,8 -1,16" stroke="#d4c248" stroke-width="1.1"/>
<path d="M683,413q1,8 -1,17" stroke="#d4c248" stroke-width="0.7"/>
<path d="M694,412q2,6 -3,13" stroke="#d4c248" stroke-width="1.1"/>
<path d="M736,409q-0,7 -5,14" stroke="#d4c248" stroke-width="0.9"/>
<path d="M738,410q-2,8 1,16" stroke="#d4c248" stroke-width="1.1"/>
<path d="M690,408q0,5 -5,11" stroke="#d4c248" stroke-width="0.7"/>
<path d="M710,425q-1,7 1,14" stroke="#d4c248" stroke-width="0.7"/>
<path d="M715,411q3,8 -4,16" stroke="#d4c248" stroke-width="1.0"/>
<path d="M717,411q3,6 5,13" stroke="#d4c248" stroke-width="0.8"/>
<path d="M724,425q1,6 -5,12" stroke="#d4c248" stroke-width="0.9"/>
<path d="M722,419q-2,9 -2,18" stroke="#d4c248" stroke-width="1.1"/>
<path d="M716,416q3,7 1,14" stroke="#d4c248" stroke-width="0.7"/>
<path d="M730,414q-2,7 -1,14" stroke="#d4c248" stroke-width="0.9"/>
<path d="M682,419q2,6 -5,11" stroke="#d4c248" stroke-width="1.1"/>
<path d="M731,417q-2,9 2,17" stroke="#d4c248" stroke-width="0.9"/>
<path d="M692,425q-1,7 4,14" stroke="#d4c248" stroke-width="0.9"/>
<path d="M721,411q-1,9 -4,18" stroke="#d4c248" stroke-width="1.2"/>
<path d="M688,425q1,10 -5,20" stroke="#d4c248" stroke-width="0.7"/>
<path d="M690,415q3,8 -1,16" stroke="#d4c248" stroke-width="0.8"/>
<path d="M714,410q0,5 2,11" stroke="#d4c248" stroke-width="0.7"/>
<path d="M707,421q-1,9 4,18" stroke="#d4c248" stroke-width="0.8"/>
<path d="M725,422q-0,9 -4,19" stroke="#d4c248" stroke-width="0.7"/>
<path d="M712,411q-2,8 3,16" stroke="#d4c248" stroke-width="0.8"/>
<path d="M677,411q0,7 -1,15" stroke="#d4c248" stroke-width="0.8"/>
<path d="M709,425q3,8 -5,15" stroke="#d4c248" stroke-width="1.2"/>
<path d="M736,418q0,8 4,15" stroke="#d4c248" stroke-width="0.7"/>
<path d="M720,418q1,7 2,13" stroke="#d4c248" stroke-width="0.8"/>
</g>
<path d="M700,262.4C702.6,262 707.7,261.4 711.1,262C714.5,262.6 717,265.6 720.4,266.1C723.8,266.6 727.5,264.3 731.5,265.2C735.5,266.1 740.8,269.7 744.5,271.7C748.2,273.7 751.3,275.4 753.8,277.3C756.3,279.2 756.6,281.9 759.4,282.8C762.2,283.7 767.4,282 770.5,282.8C773.6,283.6 775.1,285.6 777.9,287.5C780.7,289.4 784.7,291.4 787.2,294C789.7,296.6 790.9,300.4 792.8,303.2C794.6,306 796.9,307.9 798.3,310.7C799.7,313.5 800.6,316.2 801.1,319.9C801.6,323.6 800.6,328.6 801.1,332.9C801.6,337.2 803,341.6 803.9,345.9C804.8,350.2 806.5,352.6 806.7,358.9C807,365.2 806.5,376.8 805.4,383.8C804.3,390.8 802,396.6 800.3,400.8C798.6,405.1 796.5,406.3 795.2,409.3C793.9,412.3 794.3,416.2 792.6,418.6C790.9,421 788,423 785,423.7C782,424.4 777.1,422.2 774.8,422.9C772.5,423.6 773.1,424.9 771.4,428C769.7,431.1 767.4,438.5 764.6,441.6C761.8,444.7 758.9,445 754.4,446.7C749.9,448.4 743.1,450.8 737.4,451.8C731.7,452.8 725.5,451.8 720.4,452.6C715.3,453.5 711.1,456.7 706.8,456.9C702.5,457.1 700.5,454.7 694.6,453.7C688.7,452.7 676.1,452.6 671.4,451C666.6,449.4 668.8,445.7 666.1,443.9C663.4,442.1 659.9,442.4 655.4,440.3C650.9,438.2 644.1,434.9 639.4,431.4C634.7,427.8 630,423.1 627,419C624,414.9 622.9,409.9 621.7,406.6C620.5,403.3 621.5,401.2 619.9,399.4C618.3,397.6 612.5,397.4 611.9,395.9C611.3,394.4 617.3,392.2 616.3,390.6C615.3,389 607.5,388.2 605.7,386.1C603.9,384 605.3,381.5 605.7,378.1C606.1,374.7 607.5,369.2 608.3,365.7C609,362.2 609.3,360.7 610.2,357C611.1,353.3 612.2,347.9 613.6,343.4C615,338.9 617.3,333.5 618.7,329.8C620.1,326.1 621.2,324.7 622.1,321.3C623,317.9 622.8,313.1 623.8,309.4C624.8,305.7 627.1,302.2 628.1,299.2C629.1,296.2 628.5,293.6 629.8,291.6C631.1,289.6 632.5,288.3 635.7,287.3C639,286.3 645.6,286.5 649.3,285.6C653,284.8 654.1,283.9 657.8,282.2C661.5,280.5 667.1,277.8 671.4,275.4C675.6,273 679.3,269.6 683.3,267.8C687.3,266 692.4,265.3 695.2,264.4C698,263.5 697.4,262.8 700,262.4Z" fill="none" stroke="#d0bd3c" stroke-width="1" opacity="0.85"/>
</svg>
<div id="status" class="abs"></div>
<div class="abs" style="left:963.5px;top:639px;font-size:6px;font-weight:bold;color:#e6e6e6;white-space:nowrap;line-height:7px">Mouse X: 53.473 Y: 54.623 Z: -5.767</div>
<svg class="abs" style="left:1060px;top:636px" width="20" height="11"><path d="M19,5 L13,11 M19,8.5 L16.5,11" stroke="#8a8b8e" stroke-width="0.8"/></svg>
</body></html>
